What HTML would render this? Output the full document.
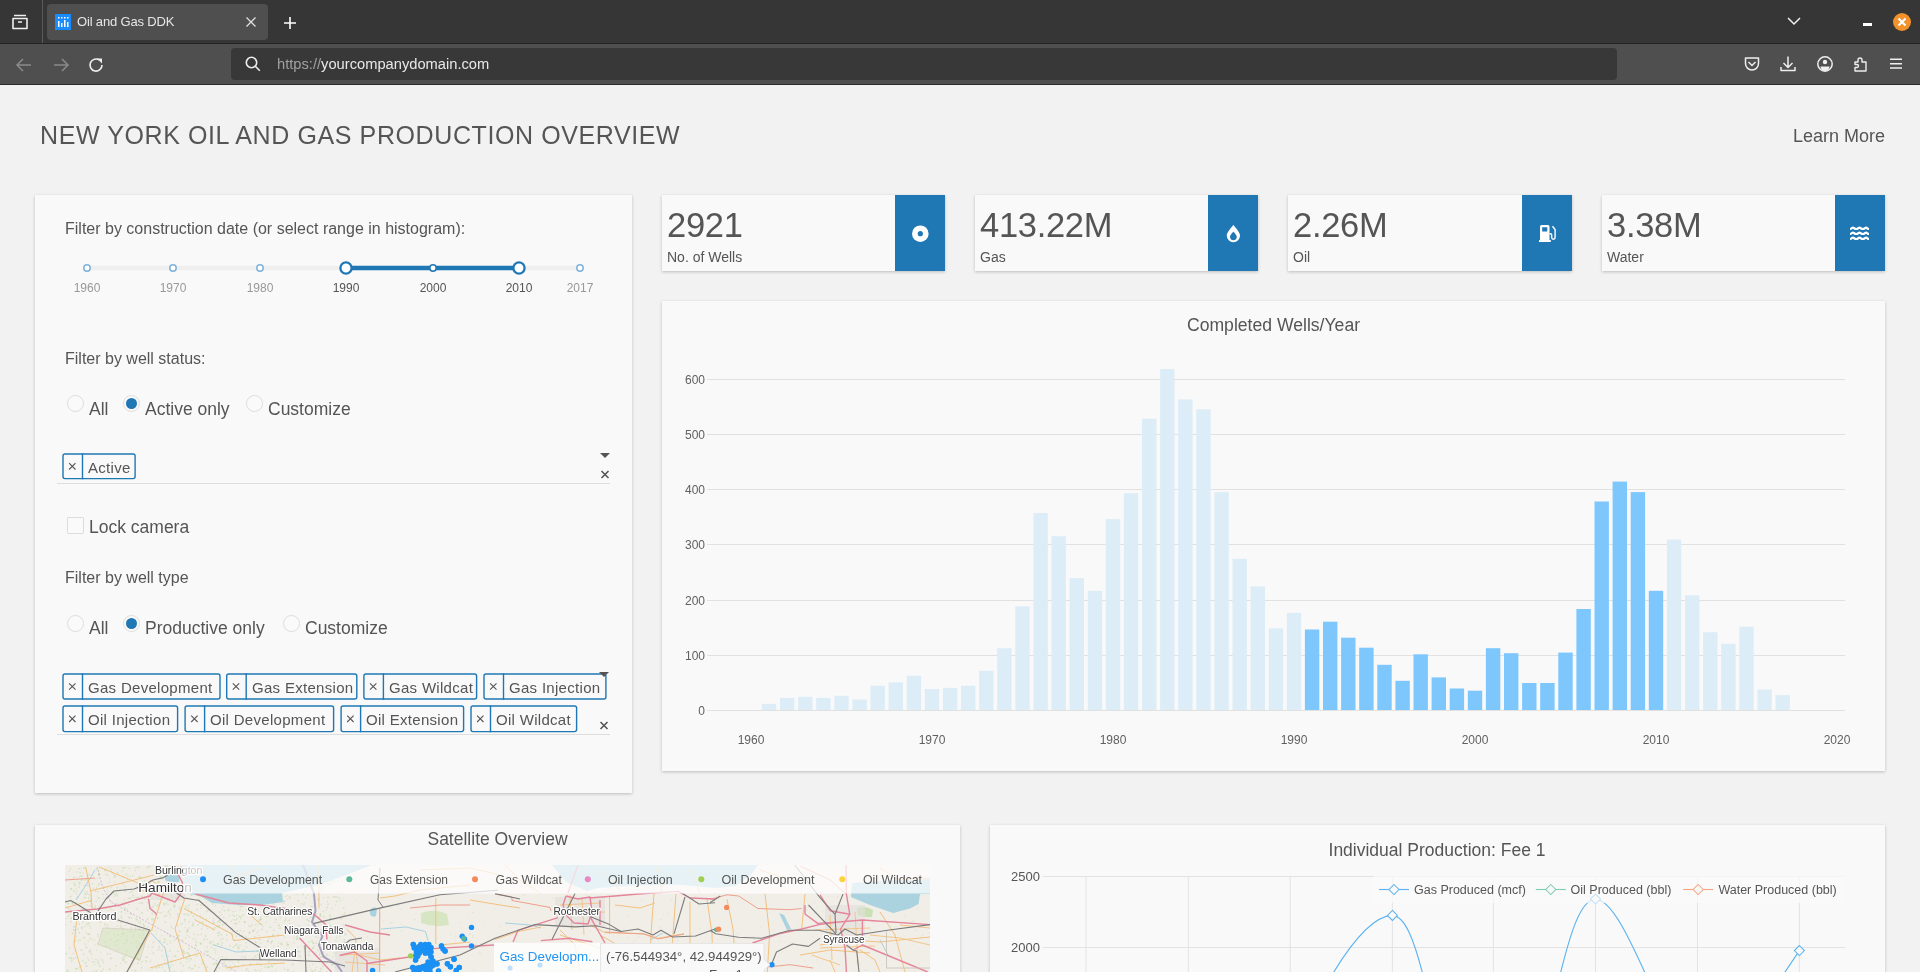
<!DOCTYPE html>
<html><head><meta charset="utf-8">
<style>
*{box-sizing:border-box;margin:0;padding:0}
html,body{width:1920px;height:972px;overflow:hidden;background:#f2f2f2;font-family:"Liberation Sans",sans-serif;color:#555}
.abs{position:absolute}
#tabbar{position:absolute;left:0;top:0;width:1920px;height:43px;background:#363636}
#navbar{position:absolute;left:0;top:44px;width:1920px;height:40px;background:#4f4f4f}
#navline{position:absolute;left:0;top:84px;width:1920px;height:1px;background:#2a2a2a}
.tab{position:absolute;left:47px;top:4px;width:221px;height:36px;background:#4f4f4f;border-radius:4px}
.tabtitle{position:absolute;left:77px;top:14px;font-size:13px;letter-spacing:-0.17px;color:#e6e6e6;white-space:nowrap}
.url{position:absolute;left:231px;top:48px;width:1386px;height:32px;background:#383838;border-radius:4px}
.urltext{position:absolute;left:277px;top:56px;font-size:14.7px;color:#e8e8e8;white-space:nowrap}
.urltext span{color:#a0a0a0}
.card{position:absolute;background:#f9f9f9;box-shadow:0 1px 3px rgba(0,0,0,0.22)}
.title{position:absolute;left:40px;top:121px;font-size:25px;letter-spacing:0.6px;color:#555;white-space:nowrap}
.learn{position:absolute;left:1793px;top:126px;font-size:18px;color:#555;white-space:nowrap}
.lbl{position:absolute;font-size:16px;color:#555;white-space:nowrap}
.big{position:absolute;font-size:17.5px;color:#555;white-space:nowrap}
.kpi-num{position:absolute;font-size:34.5px;letter-spacing:-0.3px;color:#555;white-space:nowrap}
.kpi-lbl{position:absolute;font-size:14px;color:#555;white-space:nowrap}
.kpi-icon{position:absolute;background:#1f77b4}
.ax{font-family:"Liberation Sans",sans-serif;font-size:12px;fill:#606060}
.tag{position:absolute;height:27px;border:1px solid #1f77b4;border-radius:2px;font-size:16px;color:#555;white-space:nowrap;display:flex}
.tag .x{width:22px;border-right:1px solid #1f77b4;text-align:center;font-size:13px;line-height:25px;color:#555}
.tag .t{padding:0 0 0 6px;line-height:26px}
.tagt{position:absolute;font-size:15px;letter-spacing:0.3px;color:#555;white-space:nowrap;line-height:18px}
.radio{position:absolute;width:17px;height:17px;border-radius:50%;border:1px solid #ddd;background:#fafafa}
.radio.on::after{content:"";position:absolute;left:2px;top:2px;width:11px;height:11px;border-radius:50%;background:#1f77b4}
.abs,.lbl,.big,.title,.learn,.kpi-num,.kpi-lbl,.tagt,.tabtitle,.urltext,svg{will-change:transform}
</style></head><body>
<!-- browser chrome -->
<div id="tabbar"></div>
<div id="navbar"></div>
<div id="navline"></div>
<div class="abs" style="left:0;top:43px;width:1920px;height:1px;background:#232323"></div>
<div class="abs" style="left:42px;top:0;width:1px;height:43px;background:#5a5a5a"></div>
<svg class="abs" style="left:10px;top:12px" width="20" height="20" viewBox="0 0 20 20"><path d="M4 3.5h12M3 6.5h14v10H3z M8 10h4" fill="none" stroke="#f0f0f0" stroke-width="1.6" stroke-linejoin="round"/></svg>
<div class="tab"></div>
<div class="abs" style="left:55px;top:14px;width:16px;height:16px;background:#1a8cff"></div>
<svg class="abs" style="left:55px;top:14px" width="16" height="16"><g fill="#fff"><rect x="3" y="3" width="1.5" height="1.5"/><rect x="6" y="3" width="1.5" height="1.5"/><rect x="9" y="3" width="1.5" height="1.5"/><rect x="12" y="3" width="1.5" height="1.5"/><rect x="3" y="7" width="1.5" height="6"/><rect x="6" y="9" width="1.5" height="4"/><rect x="9" y="6" width="1.5" height="7"/><rect x="12" y="8" width="1.5" height="5"/></g></svg>
<div class="tabtitle">Oil and Gas DDK</div>
<svg class="abs" style="left:245px;top:16px" width="12" height="12"><path d="M1.5 1.5l9 9M10.5 1.5l-9 9" stroke="#e0e0e0" stroke-width="1.3"/></svg>
<svg class="abs" style="left:282.5px;top:15.5px" width="14" height="14"><path d="M7 1v12M1 7h12" stroke="#fff" stroke-width="1.6"/></svg>
<svg class="abs" style="left:1786px;top:15px" width="16" height="12"><path d="M2 3l6 6 6-6" fill="none" stroke="#f0f0f0" stroke-width="1.5"/></svg>
<div class="abs" style="left:1863px;top:23px;width:9px;height:3px;background:#fff"></div>
<div class="abs" style="left:1893px;top:13px;width:18px;height:18px;border-radius:50%;background:#f3912b"></div>
<svg class="abs" style="left:1893px;top:13px" width="18" height="18"><path d="M5.5 5.5l7 7M12.5 5.5l-7 7" stroke="#fff" stroke-width="2.2"/></svg>
<!-- nav -->
<svg class="abs" style="left:15px;top:57px" width="18" height="16"><path d="M16 8H2M8 2L2 8l6 6" fill="none" stroke="#8a8a8a" stroke-width="1.5"/></svg>
<svg class="abs" style="left:51.5px;top:57px" width="18" height="16"><path d="M2 8h14M10 2l6 6-6 6" fill="none" stroke="#8a8a8a" stroke-width="1.5"/></svg>
<svg class="abs" style="left:87px;top:56px" width="18" height="18"><path d="M15 9A6 6 0 1 1 12.5 4.2" fill="none" stroke="#eee" stroke-width="1.6"/><path d="M10 2.5h5v5z" fill="#eee"/></svg>
<div class="url"></div>
<svg class="abs" style="left:244px;top:55px" width="18" height="18"><circle cx="7.5" cy="7.5" r="5.2" fill="none" stroke="#eee" stroke-width="1.6"/><path d="M11.3 11.3l4.5 4.5" stroke="#eee" stroke-width="1.6"/></svg>
<div class="urltext"><span>https://</span>yourcompanydomain.com</div>
<svg class="abs" style="left:1743px;top:55px" width="18" height="18"><path d="M2.5 3h13v5.5a6.5 6.5 0 0 1-13 0z" fill="none" stroke="#eee" stroke-width="1.5" stroke-linejoin="round"/><path d="M5.5 7l3.5 3.5L12.5 7" fill="none" stroke="#eee" stroke-width="1.5"/></svg>
<svg class="abs" style="left:1779px;top:55px" width="18" height="18"><path d="M9 1.5v11M4.5 8l4.5 4.5L13.5 8M2 12v3.5h14V12" fill="none" stroke="#eee" stroke-width="1.5" stroke-linejoin="round"/></svg>
<svg class="abs" style="left:1815.5px;top:55px" width="18" height="18"><circle cx="9" cy="9" r="7.2" fill="none" stroke="#eee" stroke-width="1.5"/><circle cx="9" cy="7" r="2.2" fill="#eee"/><path d="M4.5 11.5h9a4.5 4.5 0 0 1-9 0z" fill="#eee"/></svg>
<svg class="abs" style="left:1852px;top:55px" width="18" height="18"><path d="M3 7h3V5a2 2 0 0 1 4 0v2h4v9H3v-3.5h2a1.5 1.5 0 0 0 0-3H3z" fill="none" stroke="#eee" stroke-width="1.4" stroke-linejoin="round"/></svg>
<svg class="abs" style="left:1888px;top:55px" width="18" height="18"><path d="M2 4.2h12M2 8.8h12M2 13h12" stroke="#eee" stroke-width="1.4"/></svg>

<!-- page -->
<div class="title">NEW YORK OIL AND GAS PRODUCTION OVERVIEW</div>
<div class="learn">Learn More</div>

<!-- left panel -->
<div class="card" style="left:35px;top:195px;width:597px;height:598px"></div>
<div class="lbl" style="left:65px;top:220px">Filter by construction date (or select range in histogram):</div>
<svg class="abs" style="left:0;top:250px" width="640" height="50">
<line x1="87" x2="580" y1="18" y2="18" stroke="#efefef" stroke-width="4.4"/>
<line x1="346" x2="519" y1="18" y2="18" stroke="#1f77b4" stroke-width="4.4"/>
<circle cx="87" cy="18" r="3.2" fill="#fff" stroke="#7fb2da" stroke-width="1.5"/>
<text x="87" y="41.5" text-anchor="middle" font-family="Liberation Sans" font-size="12" fill="#999">1960</text>
<circle cx="173" cy="18" r="3.2" fill="#fff" stroke="#7fb2da" stroke-width="1.5"/>
<text x="173" y="41.5" text-anchor="middle" font-family="Liberation Sans" font-size="12" fill="#999">1970</text>
<circle cx="260" cy="18" r="3.2" fill="#fff" stroke="#7fb2da" stroke-width="1.5"/>
<text x="260" y="41.5" text-anchor="middle" font-family="Liberation Sans" font-size="12" fill="#999">1980</text>
<circle cx="346" cy="18" r="5.6" fill="#fff" stroke="#1f77b4" stroke-width="2.3"/>
<text x="346" y="41.5" text-anchor="middle" font-family="Liberation Sans" font-size="12" fill="#555">1990</text>
<circle cx="433" cy="18" r="3.2" fill="#fff" stroke="#1f77b4" stroke-width="1.5"/>
<text x="433" y="41.5" text-anchor="middle" font-family="Liberation Sans" font-size="12" fill="#555">2000</text>
<circle cx="519" cy="18" r="5.6" fill="#fff" stroke="#1f77b4" stroke-width="2.3"/>
<text x="519" y="41.5" text-anchor="middle" font-family="Liberation Sans" font-size="12" fill="#555">2010</text>
<circle cx="580" cy="18" r="3.2" fill="#fff" stroke="#7fb2da" stroke-width="1.5"/>
<text x="580" y="41.5" text-anchor="middle" font-family="Liberation Sans" font-size="12" fill="#999">2017</text>
</svg>
<div class="lbl" style="left:65px;top:349.5px">Filter by well status:</div>
<div class="radio" style="left:67px;top:395px"></div><div class="big" style="left:89px;top:398.8px">All</div>
<div class="radio on" style="left:123px;top:395px"></div><div class="big" style="left:145px;top:398.8px">Active only</div>
<div class="radio" style="left:246px;top:395px"></div><div class="big" style="left:268px;top:398.8px">Customize</div>
<div class="abs" style="left:57px;top:483px;width:553px;height:1px;background:#ddd"></div>
<svg class="abs" style="left:599px;top:450px" width="12" height="30"><path d="M1 3h10l-5 5z" fill="#555"/><path d="M2.5 21l7 7M9.5 21l-7 7" stroke="#555" stroke-width="1.6"/></svg>
<div class="abs" style="left:67px;top:517px;width:17px;height:17px;border:1px solid #ddd;background:#fafafa;border-radius:1px"></div>
<div class="big" style="left:89px;top:516.8px">Lock camera</div>
<div class="lbl" style="left:65px;top:569px">Filter by well type</div>
<div class="radio" style="left:67px;top:615px"></div><div class="big" style="left:89px;top:617.8px">All</div>
<div class="radio on" style="left:123px;top:615px"></div><div class="big" style="left:145px;top:617.8px">Productive only</div>
<div class="radio" style="left:283px;top:615px"></div><div class="big" style="left:305px;top:617.8px">Customize</div>
<svg class="abs" style="left:0;top:440px" width="640" height="300"><g fill="none" stroke="#1f77b4" stroke-width="1.4">
<rect x="63.0" y="14.0" width="72.1" height="24.6" rx="2"/>
<line x1="82.5" x2="82.5" y1="13.3" y2="39.3"/>
<path d="M69.1 23.1l6.4 6.4M75.5 23.1l-6.4 6.4" stroke="#555" stroke-width="1.1"/>
<rect x="63.0" y="234.0" width="157.0" height="25.0" rx="2"/>
<line x1="82.5" x2="82.5" y1="233.3" y2="259.7"/>
<path d="M69.1 243.3l6.4 6.4M75.5 243.3l-6.4 6.4" stroke="#555" stroke-width="1.1"/>
<rect x="226.7" y="234.0" width="130.1" height="25.0" rx="2"/>
<line x1="246.2" x2="246.2" y1="233.3" y2="259.7"/>
<path d="M232.8 243.3l6.4 6.4M239.2 243.3l-6.4 6.4" stroke="#555" stroke-width="1.1"/>
<rect x="363.9" y="234.0" width="112.7" height="25.0" rx="2"/>
<line x1="383.4" x2="383.4" y1="233.3" y2="259.7"/>
<path d="M370.0 243.3l6.4 6.4M376.4 243.3l-6.4 6.4" stroke="#555" stroke-width="1.1"/>
<rect x="484.0" y="234.0" width="121.9" height="25.0" rx="2"/>
<line x1="503.5" x2="503.5" y1="233.3" y2="259.7"/>
<path d="M490.1 243.3l6.4 6.4M496.5 243.3l-6.4 6.4" stroke="#555" stroke-width="1.1"/>
<rect x="63.0" y="266.0" width="114.6" height="25.6" rx="2"/>
<line x1="82.5" x2="82.5" y1="265.3" y2="292.3"/>
<path d="M69.1 275.6l6.4 6.4M75.5 275.6l-6.4 6.4" stroke="#555" stroke-width="1.1"/>
<rect x="185.1" y="266.0" width="148.5" height="25.6" rx="2"/>
<line x1="204.6" x2="204.6" y1="265.3" y2="292.3"/>
<path d="M191.2 275.6l6.4 6.4M197.6 275.6l-6.4 6.4" stroke="#555" stroke-width="1.1"/>
<rect x="341.1" y="266.0" width="122.5" height="25.6" rx="2"/>
<line x1="360.6" x2="360.6" y1="265.3" y2="292.3"/>
<path d="M347.2 275.6l6.4 6.4M353.6 275.6l-6.4 6.4" stroke="#555" stroke-width="1.1"/>
<rect x="471.0" y="266.0" width="105.6" height="25.6" rx="2"/>
<line x1="490.5" x2="490.5" y1="265.3" y2="292.3"/>
<path d="M477.1 275.6l6.4 6.4M483.5 275.6l-6.4 6.4" stroke="#555" stroke-width="1.1"/>
</g></svg>
<div class="tagt" style="left:88.3px;top:458.8px">Active</div>
<div class="tagt" style="left:88.3px;top:678.8px">Gas Development</div>
<div class="tagt" style="left:252.0px;top:678.8px">Gas Extension</div>
<div class="tagt" style="left:389.2px;top:678.8px">Gas Wildcat</div>
<div class="tagt" style="left:509.3px;top:678.8px">Gas Injection</div>
<div class="tagt" style="left:88.3px;top:710.8px">Oil Injection</div>
<div class="tagt" style="left:210.4px;top:710.8px">Oil Development</div>
<div class="tagt" style="left:366.4px;top:710.8px">Oil Extension</div>
<div class="tagt" style="left:496.3px;top:710.8px">Oil Wildcat</div>
<div class="abs" style="left:57px;top:734px;width:553px;height:1px;background:#ddd"></div>
<svg class="abs" style="left:598px;top:672px" width="12" height="62"><path d="M1 0h10l-5 5z" fill="#555"/><path d="M2.5 50l7 7M9.5 50l-7 7" stroke="#555" stroke-width="1.6"/></svg>

<!-- KPI cards -->
<div class="card" style="left:662px;top:195px;width:283px;height:76px"></div>
<div class="kpi-num" style="left:667.00px;top:206px">2921</div>
<div class="kpi-lbl" style="left:667.00px;top:249px">No. of Wells</div>
<svg class="abs" style="left:895.00px;top:195px" width="50" height="76"><rect width="50" height="76" fill="#1f77b4"/><circle cx="25.3" cy="38.7" r="8.3" fill="#fff"/><circle cx="25.3" cy="38.7" r="2.6" fill="#1f77b4"/></svg>
<div class="card" style="left:975px;top:195px;width:283px;height:76px"></div>
<div class="kpi-num" style="left:980.00px;top:206px">413.22M</div>
<div class="kpi-lbl" style="left:980.00px;top:249px">Gas</div>
<svg class="abs" style="left:1208.00px;top:195px" width="50" height="76"><rect width="50" height="76" fill="#1f77b4"/><path fill-rule="evenodd" d="M25.4 30C25.4 30 18.75 37 18.75 40.55A6.65 6.65 0 0 0 32.05 40.55C32.05 37 25.4 30 25.4 30zM25.4 36.8C25.4 36.8 22.05 40 22.05 41.85A3.35 3.35 0 0 0 28.75 41.85C28.75 40 25.4 36.8 25.4 36.8z" fill="#fff"/></svg>
<div class="card" style="left:1288px;top:195px;width:284px;height:76px"></div>
<div class="kpi-num" style="left:1293.00px;top:206px">2.26M</div>
<div class="kpi-lbl" style="left:1293.00px;top:249px">Oil</div>
<svg class="abs" style="left:1522.00px;top:195px" width="50" height="76"><rect width="50" height="76" fill="#1f77b4"/><path fill-rule="evenodd" d="M18 31.5a1.5 1.5 0 0 1 1.5-1.5h6.5a1.5 1.5 0 0 1 1.5 1.5V45H18zM20.2 32.2h5.1v4.4h-5.1z" fill="#fff"/><rect x="17" y="45" width="11.8" height="2" fill="#fff"/><path d="M27.5 38.8h1a1.2 1.2 0 0 1 1.2 1.2v2.6a1.7 1.7 0 0 0 3.4 0V34.5l-2.6-3.3" fill="none" stroke="#fff" stroke-width="1.4"/></svg>
<div class="card" style="left:1602px;top:195px;width:283px;height:76px"></div>
<div class="kpi-num" style="left:1607.00px;top:206px">3.38M</div>
<div class="kpi-lbl" style="left:1607.00px;top:249px">Water</div>
<svg class="abs" style="left:1835.00px;top:195px" width="50" height="76"><rect width="50" height="76" fill="#1f77b4"/><g fill="none" stroke="#fff" stroke-width="2.2"><path id="wv" d="M15 34C16.5 34 17 32.7 17.9 32.7C19 32.7 19.5 34 21.2 34C22.9 34 23.4 32.7 24.5 32.7C25.6 32.7 26.1 34 27.8 34C29.5 34 30 32.7 31.1 32.7C32.2 32.7 32.5 34 34 34"/><use href="#wv" y="5"/><use href="#wv" y="10"/></g></svg>

<!-- chart -->
<div class="card" style="left:662px;top:301px;width:1223px;height:470px"></div>
<div class="abs" style="left:662px;top:315px;width:1223px;text-align:center;font-size:17.6px;color:#555">Completed Wells/Year</div>
<svg class="abs" style="left:662px;top:301px" width="1223" height="470">
<line x1="45" x2="1183" y1="409.5" y2="409.5" stroke="#e1e1e1" stroke-width="1"/>
<text x="43" y="413.8" text-anchor="end" class="ax">0</text>
<line x1="45" x2="1183" y1="354.5" y2="354.5" stroke="#e1e1e1" stroke-width="1"/>
<text x="43" y="358.8" text-anchor="end" class="ax">100</text>
<line x1="45" x2="1183" y1="299.5" y2="299.5" stroke="#e1e1e1" stroke-width="1"/>
<text x="43" y="303.8" text-anchor="end" class="ax">200</text>
<line x1="45" x2="1183" y1="243.5" y2="243.5" stroke="#e1e1e1" stroke-width="1"/>
<text x="43" y="247.8" text-anchor="end" class="ax">300</text>
<line x1="45" x2="1183" y1="188.5" y2="188.5" stroke="#e1e1e1" stroke-width="1"/>
<text x="43" y="192.8" text-anchor="end" class="ax">400</text>
<line x1="45" x2="1183" y1="133.5" y2="133.5" stroke="#e1e1e1" stroke-width="1"/>
<text x="43" y="137.8" text-anchor="end" class="ax">500</text>
<line x1="45" x2="1183" y1="78.5" y2="78.5" stroke="#e1e1e1" stroke-width="1"/>
<text x="43" y="82.8" text-anchor="end" class="ax">600</text>
<text x="89.0" y="442.6" text-anchor="middle" class="ax">1960</text>
<text x="270.0" y="442.6" text-anchor="middle" class="ax">1970</text>
<text x="451.0" y="442.6" text-anchor="middle" class="ax">1980</text>
<text x="632.0" y="442.6" text-anchor="middle" class="ax">1990</text>
<text x="813.0" y="442.6" text-anchor="middle" class="ax">2000</text>
<text x="994.0" y="442.6" text-anchor="middle" class="ax">2010</text>
<text x="1175.0" y="442.6" text-anchor="middle" class="ax">2020</text>
<rect x="99.9" y="402.9" width="14.4" height="6.1" fill="#ddedf8"/>
<rect x="118.0" y="396.9" width="14.4" height="12.1" fill="#ddedf8"/>
<rect x="136.1" y="395.8" width="14.4" height="13.2" fill="#ddedf8"/>
<rect x="154.2" y="396.9" width="14.4" height="12.1" fill="#ddedf8"/>
<rect x="172.3" y="394.7" width="14.4" height="14.3" fill="#ddedf8"/>
<rect x="190.4" y="398.5" width="14.4" height="10.5" fill="#ddedf8"/>
<rect x="208.5" y="384.7" width="14.4" height="24.3" fill="#ddedf8"/>
<rect x="226.6" y="381.4" width="14.4" height="27.6" fill="#ddedf8"/>
<rect x="244.7" y="374.8" width="14.4" height="34.2" fill="#ddedf8"/>
<rect x="262.8" y="388.0" width="14.4" height="21.0" fill="#ddedf8"/>
<rect x="280.9" y="386.9" width="14.4" height="22.1" fill="#ddedf8"/>
<rect x="299.0" y="384.7" width="14.4" height="24.3" fill="#ddedf8"/>
<rect x="317.1" y="369.8" width="14.4" height="39.2" fill="#ddedf8"/>
<rect x="335.2" y="347.2" width="14.4" height="61.8" fill="#ddedf8"/>
<rect x="353.3" y="305.3" width="14.4" height="103.7" fill="#ddedf8"/>
<rect x="371.4" y="212.0" width="14.4" height="197.0" fill="#ddedf8"/>
<rect x="389.5" y="235.2" width="14.4" height="173.8" fill="#ddedf8"/>
<rect x="407.6" y="277.1" width="14.4" height="131.9" fill="#ddedf8"/>
<rect x="425.7" y="289.8" width="14.4" height="119.2" fill="#ddedf8"/>
<rect x="443.8" y="218.1" width="14.4" height="190.9" fill="#ddedf8"/>
<rect x="461.9" y="192.2" width="14.4" height="216.8" fill="#ddedf8"/>
<rect x="480.0" y="117.7" width="14.4" height="291.3" fill="#ddedf8"/>
<rect x="498.1" y="68.0" width="14.4" height="341.0" fill="#ddedf8"/>
<rect x="516.2" y="98.4" width="14.4" height="310.6" fill="#ddedf8"/>
<rect x="534.3" y="108.3" width="14.4" height="300.7" fill="#ddedf8"/>
<rect x="552.4" y="191.1" width="14.4" height="217.9" fill="#ddedf8"/>
<rect x="570.5" y="257.8" width="14.4" height="151.2" fill="#ddedf8"/>
<rect x="588.6" y="285.4" width="14.4" height="123.6" fill="#ddedf8"/>
<rect x="606.7" y="327.3" width="14.4" height="81.7" fill="#ddedf8"/>
<rect x="624.8" y="311.9" width="14.4" height="97.1" fill="#ddedf8"/>
<rect x="642.9" y="328.5" width="14.4" height="80.5" fill="#7dc7fd"/>
<rect x="661.0" y="320.7" width="14.4" height="88.3" fill="#7dc7fd"/>
<rect x="679.1" y="336.7" width="14.4" height="72.3" fill="#7dc7fd"/>
<rect x="697.2" y="346.7" width="14.4" height="62.3" fill="#7dc7fd"/>
<rect x="715.3" y="363.8" width="14.4" height="45.2" fill="#7dc7fd"/>
<rect x="733.4" y="379.8" width="14.4" height="29.2" fill="#7dc7fd"/>
<rect x="751.5" y="353.3" width="14.4" height="55.7" fill="#7dc7fd"/>
<rect x="769.6" y="376.4" width="14.4" height="32.6" fill="#7dc7fd"/>
<rect x="787.7" y="387.5" width="14.4" height="21.5" fill="#7dc7fd"/>
<rect x="805.8" y="389.7" width="14.4" height="19.3" fill="#7dc7fd"/>
<rect x="823.9" y="347.2" width="14.4" height="61.8" fill="#7dc7fd"/>
<rect x="842.0" y="352.2" width="14.4" height="56.8" fill="#7dc7fd"/>
<rect x="860.1" y="382.0" width="14.4" height="27.0" fill="#7dc7fd"/>
<rect x="878.2" y="382.0" width="14.4" height="27.0" fill="#7dc7fd"/>
<rect x="896.3" y="351.6" width="14.4" height="57.4" fill="#7dc7fd"/>
<rect x="914.4" y="308.0" width="14.4" height="101.0" fill="#7dc7fd"/>
<rect x="932.5" y="200.5" width="14.4" height="208.5" fill="#7dc7fd"/>
<rect x="950.6" y="180.6" width="14.4" height="228.4" fill="#7dc7fd"/>
<rect x="968.7" y="191.1" width="14.4" height="217.9" fill="#7dc7fd"/>
<rect x="986.8" y="289.8" width="14.4" height="119.2" fill="#7dc7fd"/>
<rect x="1004.9" y="238.5" width="14.4" height="170.5" fill="#ddedf8"/>
<rect x="1023.0" y="294.2" width="14.4" height="114.8" fill="#ddedf8"/>
<rect x="1041.1" y="331.2" width="14.4" height="77.8" fill="#ddedf8"/>
<rect x="1059.2" y="342.8" width="14.4" height="66.2" fill="#ddedf8"/>
<rect x="1077.3" y="325.7" width="14.4" height="83.3" fill="#ddedf8"/>
<rect x="1095.4" y="388.6" width="14.4" height="20.4" fill="#ddedf8"/>
<rect x="1113.5" y="394.1" width="14.4" height="14.9" fill="#ddedf8"/>
</svg>

<!-- bottom left: satellite -->
<div class="card" style="left:35px;top:825px;width:925px;height:200px"></div>
<div class="abs" style="left:35px;top:829.3px;width:925px;text-align:center;font-size:17.5px;color:#555">Satellite Overview</div>
<svg class="abs" style="left:65px;top:865px" width="865" height="107" viewBox="65 865 865 107">
<rect x="65" y="865" width="865" height="107" fill="#f1eee8"/>
<rect x="191.7" y="924.9" width="1.7" height="1.3" fill="#b5d69b" opacity="0.5"/>
<rect x="207.2" y="927.9" width="1.0" height="1.3" fill="#b5d69b" opacity="0.5"/>
<rect x="241.4" y="949.8" width="0.9" height="1.1" fill="#b5d69b" opacity="0.5"/>
<rect x="90.4" y="951.6" width="1.5" height="0.8" fill="#b5d69b" opacity="0.5"/>
<rect x="340.0" y="968.2" width="1.5" height="1.4" fill="#b5d69b" opacity="0.5"/>
<rect x="109.1" y="866.6" width="1.3" height="0.9" fill="#b5d69b" opacity="0.5"/>
<rect x="118.3" y="890.9" width="0.8" height="1.3" fill="#b5d69b" opacity="0.5"/>
<rect x="188.3" y="955.1" width="1.3" height="1.4" fill="#b5d69b" opacity="0.5"/>
<rect x="204.9" y="935.9" width="1.3" height="1.1" fill="#b5d69b" opacity="0.5"/>
<rect x="344.3" y="971.5" width="1.6" height="1.5" fill="#b5d69b" opacity="0.5"/>
<rect x="153.3" y="889.6" width="1.1" height="0.9" fill="#b5d69b" opacity="0.5"/>
<rect x="279.6" y="907.8" width="1.6" height="1.2" fill="#b5d69b" opacity="0.5"/>
<rect x="333.3" y="955.7" width="0.8" height="1.0" fill="#b5d69b" opacity="0.5"/>
<rect x="319.9" y="915.3" width="1.8" height="1.2" fill="#b5d69b" opacity="0.5"/>
<rect x="85.5" y="932.4" width="1.6" height="1.1" fill="#b5d69b" opacity="0.5"/>
<rect x="89.4" y="900.6" width="1.8" height="1.6" fill="#b5d69b" opacity="0.5"/>
<rect x="98.0" y="891.4" width="0.9" height="0.9" fill="#b5d69b" opacity="0.5"/>
<rect x="288.2" y="884.0" width="1.4" height="1.2" fill="#b5d69b" opacity="0.5"/>
<rect x="118.4" y="943.3" width="0.9" height="1.4" fill="#b5d69b" opacity="0.5"/>
<rect x="97.6" y="910.0" width="1.0" height="1.1" fill="#b5d69b" opacity="0.5"/>
<rect x="336.9" y="951.0" width="1.1" height="1.7" fill="#b5d69b" opacity="0.5"/>
<rect x="124.0" y="907.2" width="1.7" height="1.4" fill="#b5d69b" opacity="0.5"/>
<rect x="93.1" y="970.9" width="1.0" height="1.1" fill="#b5d69b" opacity="0.5"/>
<rect x="281.4" y="900.2" width="1.1" height="0.9" fill="#b5d69b" opacity="0.5"/>
<rect x="90.2" y="927.4" width="1.0" height="1.4" fill="#b5d69b" opacity="0.5"/>
<rect x="169.1" y="913.5" width="1.8" height="1.3" fill="#b5d69b" opacity="0.5"/>
<rect x="225.9" y="957.7" width="1.0" height="1.0" fill="#b5d69b" opacity="0.5"/>
<rect x="319.4" y="952.5" width="1.0" height="1.0" fill="#b5d69b" opacity="0.5"/>
<rect x="272.0" y="965.6" width="1.0" height="1.8" fill="#b5d69b" opacity="0.5"/>
<rect x="312.0" y="929.6" width="1.2" height="0.9" fill="#b5d69b" opacity="0.5"/>
<rect x="75.8" y="968.0" width="1.0" height="1.5" fill="#b5d69b" opacity="0.5"/>
<rect x="137.0" y="953.1" width="1.4" height="1.1" fill="#b5d69b" opacity="0.5"/>
<rect x="114.1" y="942.1" width="0.9" height="1.0" fill="#b5d69b" opacity="0.5"/>
<rect x="221.6" y="956.2" width="1.4" height="1.1" fill="#b5d69b" opacity="0.5"/>
<rect x="321.9" y="886.8" width="0.8" height="1.1" fill="#b5d69b" opacity="0.5"/>
<rect x="189.8" y="871.5" width="1.0" height="1.2" fill="#b5d69b" opacity="0.5"/>
<rect x="225.2" y="879.1" width="1.2" height="1.7" fill="#b5d69b" opacity="0.5"/>
<rect x="339.5" y="935.3" width="1.5" height="1.4" fill="#b5d69b" opacity="0.5"/>
<rect x="104.3" y="868.8" width="0.8" height="1.7" fill="#b5d69b" opacity="0.5"/>
<rect x="261.3" y="968.0" width="0.8" height="1.4" fill="#b5d69b" opacity="0.5"/>
<rect x="200.0" y="943.2" width="1.1" height="1.8" fill="#b5d69b" opacity="0.5"/>
<rect x="86.1" y="923.4" width="1.5" height="1.7" fill="#b5d69b" opacity="0.5"/>
<rect x="271.4" y="940.3" width="1.6" height="1.7" fill="#b5d69b" opacity="0.5"/>
<rect x="163.5" y="938.3" width="1.7" height="1.7" fill="#b5d69b" opacity="0.5"/>
<rect x="181.8" y="949.6" width="1.7" height="1.4" fill="#b5d69b" opacity="0.5"/>
<rect x="240.0" y="905.9" width="1.4" height="1.4" fill="#b5d69b" opacity="0.5"/>
<rect x="87.5" y="933.4" width="1.8" height="1.7" fill="#b5d69b" opacity="0.5"/>
<rect x="268.9" y="906.6" width="1.5" height="1.4" fill="#b5d69b" opacity="0.5"/>
<rect x="188.3" y="954.7" width="0.9" height="1.6" fill="#b5d69b" opacity="0.5"/>
<rect x="73.3" y="929.3" width="1.3" height="1.0" fill="#b5d69b" opacity="0.5"/>
<rect x="260.5" y="918.2" width="1.4" height="1.7" fill="#b5d69b" opacity="0.5"/>
<rect x="136.6" y="866.2" width="1.1" height="1.5" fill="#b5d69b" opacity="0.5"/>
<rect x="121.7" y="883.1" width="1.7" height="1.5" fill="#b5d69b" opacity="0.5"/>
<rect x="188.7" y="960.4" width="1.1" height="1.5" fill="#b5d69b" opacity="0.5"/>
<rect x="120.6" y="911.1" width="1.6" height="1.7" fill="#b5d69b" opacity="0.5"/>
<rect x="311.5" y="906.1" width="1.4" height="1.1" fill="#b5d69b" opacity="0.5"/>
<rect x="103.1" y="918.1" width="1.6" height="1.6" fill="#b5d69b" opacity="0.5"/>
<rect x="264.1" y="966.7" width="1.1" height="1.0" fill="#b5d69b" opacity="0.5"/>
<rect x="191.2" y="894.4" width="1.0" height="1.2" fill="#b5d69b" opacity="0.5"/>
<rect x="240.2" y="917.8" width="1.1" height="1.6" fill="#b5d69b" opacity="0.5"/>
<rect x="340.0" y="913.4" width="0.9" height="0.8" fill="#b5d69b" opacity="0.5"/>
<rect x="309.4" y="869.4" width="1.5" height="1.4" fill="#b5d69b" opacity="0.5"/>
<rect x="151.5" y="949.7" width="0.8" height="0.9" fill="#b5d69b" opacity="0.5"/>
<rect x="192.4" y="867.6" width="1.6" height="1.0" fill="#b5d69b" opacity="0.5"/>
<rect x="104.4" y="870.0" width="1.4" height="1.2" fill="#b5d69b" opacity="0.5"/>
<rect x="241.4" y="935.1" width="1.6" height="1.8" fill="#b5d69b" opacity="0.5"/>
<rect x="256.7" y="886.3" width="1.3" height="1.0" fill="#b5d69b" opacity="0.5"/>
<rect x="68.0" y="915.5" width="1.5" height="1.0" fill="#b5d69b" opacity="0.5"/>
<rect x="141.3" y="902.0" width="1.5" height="1.3" fill="#b5d69b" opacity="0.5"/>
<rect x="237.0" y="945.9" width="1.2" height="1.6" fill="#b5d69b" opacity="0.5"/>
<rect x="318.7" y="874.3" width="1.7" height="1.5" fill="#b5d69b" opacity="0.5"/>
<rect x="101.4" y="913.5" width="1.4" height="1.7" fill="#b5d69b" opacity="0.5"/>
<rect x="170.5" y="925.9" width="1.7" height="1.6" fill="#b5d69b" opacity="0.5"/>
<rect x="329.4" y="914.6" width="1.5" height="1.0" fill="#b5d69b" opacity="0.5"/>
<rect x="267.1" y="952.6" width="1.4" height="1.5" fill="#b5d69b" opacity="0.5"/>
<rect x="124.7" y="961.3" width="1.8" height="1.8" fill="#b5d69b" opacity="0.5"/>
<rect x="215.3" y="949.6" width="1.1" height="1.7" fill="#b5d69b" opacity="0.5"/>
<rect x="304.6" y="902.3" width="0.9" height="1.2" fill="#b5d69b" opacity="0.5"/>
<rect x="219.1" y="947.2" width="1.3" height="0.8" fill="#b5d69b" opacity="0.5"/>
<rect x="291.6" y="871.9" width="1.6" height="1.0" fill="#b5d69b" opacity="0.5"/>
<rect x="158.8" y="949.3" width="0.9" height="0.9" fill="#b5d69b" opacity="0.5"/>
<rect x="209.6" y="942.4" width="1.6" height="1.5" fill="#b5d69b" opacity="0.5"/>
<rect x="329.8" y="917.7" width="1.7" height="0.9" fill="#b5d69b" opacity="0.5"/>
<rect x="127.0" y="921.4" width="1.1" height="1.5" fill="#b5d69b" opacity="0.5"/>
<rect x="243.9" y="920.9" width="1.6" height="1.4" fill="#b5d69b" opacity="0.5"/>
<rect x="152.3" y="905.8" width="1.6" height="1.7" fill="#b5d69b" opacity="0.5"/>
<rect x="123.3" y="956.0" width="1.8" height="1.3" fill="#b5d69b" opacity="0.5"/>
<rect x="225.4" y="886.5" width="1.3" height="1.3" fill="#b5d69b" opacity="0.5"/>
<rect x="234.5" y="868.0" width="1.8" height="1.3" fill="#b5d69b" opacity="0.5"/>
<rect x="177.2" y="950.7" width="1.4" height="1.3" fill="#b5d69b" opacity="0.5"/>
<rect x="258.5" y="872.1" width="1.3" height="1.2" fill="#b5d69b" opacity="0.5"/>
<rect x="332.9" y="963.8" width="1.1" height="1.3" fill="#b5d69b" opacity="0.5"/>
<rect x="100.6" y="911.4" width="1.6" height="1.7" fill="#b5d69b" opacity="0.5"/>
<rect x="198.4" y="898.9" width="1.0" height="1.4" fill="#b5d69b" opacity="0.5"/>
<rect x="324.1" y="878.9" width="1.6" height="0.8" fill="#b5d69b" opacity="0.5"/>
<rect x="119.3" y="889.3" width="1.5" height="1.1" fill="#b5d69b" opacity="0.5"/>
<rect x="164.5" y="931.3" width="0.9" height="1.5" fill="#b5d69b" opacity="0.5"/>
<rect x="99.4" y="919.6" width="1.1" height="1.0" fill="#b5d69b" opacity="0.5"/>
<rect x="213.5" y="911.7" width="1.2" height="1.2" fill="#b5d69b" opacity="0.5"/>
<rect x="213.2" y="882.1" width="1.0" height="1.4" fill="#b5d69b" opacity="0.5"/>
<rect x="243.8" y="921.7" width="1.7" height="1.4" fill="#b5d69b" opacity="0.5"/>
<rect x="304.9" y="889.9" width="1.5" height="1.6" fill="#b5d69b" opacity="0.5"/>
<rect x="317.7" y="898.8" width="1.1" height="1.7" fill="#b5d69b" opacity="0.5"/>
<rect x="126.1" y="971.8" width="1.7" height="0.9" fill="#b5d69b" opacity="0.5"/>
<rect x="132.0" y="942.7" width="1.1" height="0.9" fill="#b5d69b" opacity="0.5"/>
<rect x="298.0" y="910.1" width="1.6" height="0.9" fill="#b5d69b" opacity="0.5"/>
<rect x="177.8" y="938.3" width="0.8" height="1.0" fill="#b5d69b" opacity="0.5"/>
<rect x="256.1" y="962.5" width="1.8" height="0.9" fill="#b5d69b" opacity="0.5"/>
<rect x="206.6" y="946.1" width="1.3" height="1.5" fill="#b5d69b" opacity="0.5"/>
<rect x="117.9" y="872.5" width="0.9" height="0.8" fill="#b5d69b" opacity="0.5"/>
<rect x="219.5" y="920.1" width="1.4" height="0.9" fill="#b5d69b" opacity="0.5"/>
<rect x="116.7" y="886.8" width="1.6" height="1.8" fill="#b5d69b" opacity="0.5"/>
<rect x="324.5" y="875.2" width="0.9" height="1.8" fill="#b5d69b" opacity="0.5"/>
<rect x="194.4" y="946.8" width="1.1" height="1.3" fill="#b5d69b" opacity="0.5"/>
<rect x="209.3" y="911.0" width="1.4" height="0.8" fill="#b5d69b" opacity="0.5"/>
<rect x="261.3" y="955.3" width="1.0" height="1.3" fill="#b5d69b" opacity="0.5"/>
<rect x="272.0" y="908.4" width="1.0" height="1.0" fill="#b5d69b" opacity="0.5"/>
<rect x="208.5" y="866.6" width="1.7" height="1.6" fill="#b5d69b" opacity="0.5"/>
<rect x="262.3" y="957.1" width="1.4" height="1.2" fill="#b5d69b" opacity="0.5"/>
<rect x="232.9" y="919.0" width="1.8" height="1.6" fill="#b5d69b" opacity="0.5"/>
<rect x="137.3" y="962.5" width="1.5" height="1.6" fill="#b5d69b" opacity="0.5"/>
<rect x="293.1" y="908.4" width="1.7" height="1.7" fill="#b5d69b" opacity="0.5"/>
<rect x="259.5" y="947.1" width="1.6" height="1.2" fill="#b5d69b" opacity="0.5"/>
<rect x="267.3" y="872.5" width="1.1" height="1.3" fill="#b5d69b" opacity="0.5"/>
<rect x="68.0" y="903.1" width="1.4" height="1.4" fill="#b5d69b" opacity="0.5"/>
<rect x="130.0" y="966.1" width="1.5" height="1.1" fill="#b5d69b" opacity="0.5"/>
<rect x="249.7" y="925.9" width="1.3" height="1.2" fill="#b5d69b" opacity="0.5"/>
<rect x="345.0" y="933.7" width="1.5" height="1.6" fill="#b5d69b" opacity="0.5"/>
<rect x="339.4" y="867.4" width="1.4" height="1.5" fill="#b5d69b" opacity="0.5"/>
<rect x="136.9" y="908.0" width="0.9" height="1.0" fill="#b5d69b" opacity="0.5"/>
<rect x="170.2" y="875.5" width="1.1" height="1.7" fill="#b5d69b" opacity="0.5"/>
<rect x="219.0" y="919.3" width="1.8" height="1.4" fill="#b5d69b" opacity="0.5"/>
<rect x="343.6" y="933.3" width="1.6" height="0.9" fill="#b5d69b" opacity="0.5"/>
<rect x="232.3" y="946.2" width="0.8" height="1.7" fill="#b5d69b" opacity="0.5"/>
<rect x="109.8" y="915.5" width="1.0" height="1.3" fill="#b5d69b" opacity="0.5"/>
<rect x="236.1" y="871.3" width="1.7" height="1.2" fill="#b5d69b" opacity="0.5"/>
<rect x="212.5" y="929.0" width="1.2" height="1.1" fill="#b5d69b" opacity="0.5"/>
<rect x="248.4" y="925.0" width="1.1" height="1.5" fill="#b5d69b" opacity="0.5"/>
<rect x="147.9" y="866.5" width="1.0" height="0.8" fill="#b5d69b" opacity="0.5"/>
<rect x="108.8" y="945.7" width="1.2" height="1.7" fill="#b5d69b" opacity="0.5"/>
<rect x="274.5" y="870.4" width="1.8" height="1.7" fill="#b5d69b" opacity="0.5"/>
<rect x="85.6" y="961.9" width="1.2" height="1.3" fill="#b5d69b" opacity="0.5"/>
<rect x="337.5" y="891.1" width="1.3" height="1.7" fill="#b5d69b" opacity="0.5"/>
<rect x="267.4" y="915.1" width="1.8" height="1.6" fill="#b5d69b" opacity="0.5"/>
<rect x="234.0" y="877.3" width="1.4" height="1.3" fill="#b5d69b" opacity="0.5"/>
<rect x="122.0" y="870.6" width="1.3" height="0.9" fill="#b5d69b" opacity="0.5"/>
<rect x="189.0" y="936.5" width="1.3" height="1.1" fill="#b5d69b" opacity="0.5"/>
<rect x="228.0" y="909.9" width="1.6" height="1.3" fill="#b5d69b" opacity="0.5"/>
<rect x="344.3" y="966.9" width="1.5" height="1.0" fill="#b5d69b" opacity="0.5"/>
<rect x="96.9" y="960.5" width="1.6" height="1.4" fill="#b5d69b" opacity="0.5"/>
<rect x="165.6" y="894.1" width="1.5" height="1.4" fill="#b5d69b" opacity="0.5"/>
<rect x="230.7" y="932.7" width="1.6" height="1.0" fill="#b5d69b" opacity="0.5"/>
<rect x="134.7" y="969.8" width="1.7" height="1.7" fill="#b5d69b" opacity="0.5"/>
<rect x="76.1" y="871.5" width="1.1" height="1.2" fill="#b5d69b" opacity="0.5"/>
<rect x="239.5" y="876.0" width="1.3" height="0.9" fill="#b5d69b" opacity="0.5"/>
<rect x="89.2" y="937.4" width="1.4" height="1.4" fill="#b5d69b" opacity="0.5"/>
<rect x="169.5" y="916.2" width="1.0" height="1.1" fill="#b5d69b" opacity="0.5"/>
<rect x="273.6" y="954.7" width="0.9" height="0.9" fill="#b5d69b" opacity="0.5"/>
<rect x="291.6" y="931.7" width="1.6" height="1.0" fill="#b5d69b" opacity="0.5"/>
<rect x="183.8" y="892.6" width="1.6" height="1.2" fill="#b5d69b" opacity="0.5"/>
<rect x="248.0" y="970.8" width="1.1" height="1.3" fill="#b5d69b" opacity="0.5"/>
<rect x="273.9" y="963.5" width="1.2" height="1.2" fill="#b5d69b" opacity="0.5"/>
<rect x="92.2" y="958.6" width="0.9" height="0.9" fill="#b5d69b" opacity="0.5"/>
<rect x="223.0" y="916.9" width="1.5" height="1.1" fill="#b5d69b" opacity="0.5"/>
<rect x="282.1" y="873.1" width="1.0" height="1.5" fill="#b5d69b" opacity="0.5"/>
<rect x="87.9" y="897.5" width="1.5" height="1.5" fill="#b5d69b" opacity="0.5"/>
<rect x="144.2" y="880.3" width="1.2" height="1.5" fill="#b5d69b" opacity="0.5"/>
<rect x="167.6" y="877.6" width="1.5" height="1.4" fill="#b5d69b" opacity="0.5"/>
<rect x="322.2" y="965.6" width="1.7" height="1.2" fill="#b5d69b" opacity="0.5"/>
<rect x="289.9" y="897.6" width="1.1" height="1.2" fill="#b5d69b" opacity="0.5"/>
<rect x="326.7" y="960.7" width="1.0" height="1.2" fill="#b5d69b" opacity="0.5"/>
<rect x="167.4" y="903.9" width="1.2" height="1.2" fill="#b5d69b" opacity="0.5"/>
<rect x="119.6" y="925.3" width="1.6" height="1.3" fill="#b5d69b" opacity="0.5"/>
<rect x="299.2" y="925.2" width="1.0" height="1.6" fill="#b5d69b" opacity="0.5"/>
<rect x="311.7" y="895.1" width="0.8" height="1.3" fill="#b5d69b" opacity="0.5"/>
<rect x="217.4" y="925.7" width="1.8" height="1.5" fill="#b5d69b" opacity="0.5"/>
<rect x="290.2" y="871.9" width="1.3" height="1.6" fill="#b5d69b" opacity="0.5"/>
<rect x="88.5" y="873.7" width="1.5" height="1.7" fill="#b5d69b" opacity="0.5"/>
<rect x="88.7" y="932.9" width="0.9" height="1.5" fill="#b5d69b" opacity="0.5"/>
<rect x="246.7" y="891.3" width="1.0" height="1.6" fill="#b5d69b" opacity="0.5"/>
<rect x="211.0" y="946.8" width="1.2" height="1.1" fill="#b5d69b" opacity="0.5"/>
<rect x="336.1" y="936.9" width="1.3" height="1.3" fill="#b5d69b" opacity="0.5"/>
<rect x="266.9" y="940.8" width="1.7" height="1.2" fill="#b5d69b" opacity="0.5"/>
<rect x="296.3" y="936.3" width="1.7" height="1.6" fill="#b5d69b" opacity="0.5"/>
<rect x="298.5" y="960.1" width="1.8" height="1.4" fill="#b5d69b" opacity="0.5"/>
<rect x="211.7" y="941.0" width="1.6" height="1.2" fill="#b5d69b" opacity="0.5"/>
<rect x="182.7" y="880.6" width="1.5" height="1.8" fill="#b5d69b" opacity="0.5"/>
<rect x="170.1" y="882.9" width="1.0" height="1.2" fill="#b5d69b" opacity="0.5"/>
<rect x="146.8" y="968.8" width="0.9" height="1.1" fill="#b5d69b" opacity="0.5"/>
<rect x="97.1" y="934.3" width="1.6" height="1.0" fill="#b5d69b" opacity="0.5"/>
<rect x="82.5" y="914.1" width="1.4" height="1.7" fill="#b5d69b" opacity="0.5"/>
<rect x="75.2" y="876.6" width="1.0" height="1.0" fill="#b5d69b" opacity="0.5"/>
<rect x="130.9" y="941.7" width="1.4" height="1.0" fill="#b5d69b" opacity="0.5"/>
<rect x="116.8" y="895.1" width="1.0" height="1.6" fill="#b5d69b" opacity="0.5"/>
<rect x="152.3" y="923.7" width="1.6" height="1.3" fill="#b5d69b" opacity="0.5"/>
<rect x="137.9" y="960.0" width="1.7" height="1.1" fill="#b5d69b" opacity="0.5"/>
<rect x="218.3" y="967.4" width="1.3" height="1.0" fill="#b5d69b" opacity="0.5"/>
<rect x="78.9" y="966.4" width="1.6" height="1.2" fill="#b5d69b" opacity="0.5"/>
<rect x="212.7" y="920.2" width="1.1" height="1.8" fill="#b5d69b" opacity="0.5"/>
<rect x="249.1" y="890.4" width="0.8" height="1.3" fill="#b5d69b" opacity="0.5"/>
<rect x="169.0" y="950.3" width="1.5" height="1.4" fill="#b5d69b" opacity="0.5"/>
<rect x="109.0" y="881.8" width="1.1" height="1.1" fill="#b5d69b" opacity="0.5"/>
<rect x="308.4" y="920.2" width="1.4" height="1.8" fill="#b5d69b" opacity="0.5"/>
<rect x="139.6" y="922.2" width="1.0" height="1.6" fill="#b5d69b" opacity="0.5"/>
<rect x="65.4" y="952.9" width="1.6" height="1.6" fill="#b5d69b" opacity="0.5"/>
<rect x="88.1" y="893.9" width="1.5" height="0.9" fill="#b5d69b" opacity="0.5"/>
<rect x="199.4" y="915.1" width="1.8" height="1.4" fill="#b5d69b" opacity="0.5"/>
<rect x="305.1" y="897.5" width="1.6" height="1.2" fill="#b5d69b" opacity="0.5"/>
<rect x="321.7" y="874.7" width="1.6" height="1.0" fill="#b5d69b" opacity="0.5"/>
<rect x="217.1" y="921.2" width="1.0" height="1.6" fill="#b5d69b" opacity="0.5"/>
<rect x="152.2" y="898.2" width="0.9" height="1.1" fill="#b5d69b" opacity="0.5"/>
<rect x="195.8" y="941.5" width="1.2" height="1.5" fill="#b5d69b" opacity="0.5"/>
<rect x="94.6" y="907.2" width="1.3" height="1.8" fill="#b5d69b" opacity="0.5"/>
<rect x="297.3" y="935.0" width="0.8" height="1.2" fill="#b5d69b" opacity="0.5"/>
<rect x="263.8" y="890.4" width="1.4" height="1.3" fill="#b5d69b" opacity="0.5"/>
<rect x="67.9" y="971.1" width="1.6" height="1.0" fill="#b5d69b" opacity="0.5"/>
<rect x="237.5" y="896.1" width="1.2" height="1.3" fill="#b5d69b" opacity="0.5"/>
<rect x="148.5" y="901.1" width="1.2" height="1.5" fill="#b5d69b" opacity="0.5"/>
<rect x="136.8" y="886.4" width="1.5" height="1.1" fill="#b5d69b" opacity="0.5"/>
<rect x="329.6" y="925.2" width="1.5" height="1.1" fill="#b5d69b" opacity="0.5"/>
<rect x="296.5" y="874.9" width="0.9" height="0.9" fill="#b5d69b" opacity="0.5"/>
<rect x="254.8" y="940.8" width="1.0" height="1.2" fill="#b5d69b" opacity="0.5"/>
<rect x="299.3" y="928.4" width="0.9" height="1.0" fill="#b5d69b" opacity="0.5"/>
<rect x="109.0" y="878.3" width="1.2" height="0.9" fill="#b5d69b" opacity="0.5"/>
<rect x="322.8" y="910.7" width="1.3" height="1.4" fill="#b5d69b" opacity="0.5"/>
<rect x="279.7" y="952.9" width="1.2" height="1.1" fill="#b5d69b" opacity="0.5"/>
<rect x="180.4" y="866.7" width="1.2" height="1.5" fill="#b5d69b" opacity="0.5"/>
<rect x="339.9" y="949.5" width="1.5" height="1.4" fill="#b5d69b" opacity="0.5"/>
<rect x="70.2" y="900.4" width="1.1" height="1.5" fill="#b5d69b" opacity="0.5"/>
<rect x="94.8" y="905.4" width="1.3" height="1.6" fill="#b5d69b" opacity="0.5"/>
<rect x="296.1" y="930.4" width="1.0" height="1.6" fill="#b5d69b" opacity="0.5"/>
<rect x="317.8" y="923.7" width="1.2" height="1.3" fill="#b5d69b" opacity="0.5"/>
<rect x="104.7" y="941.3" width="1.8" height="1.3" fill="#b5d69b" opacity="0.5"/>
<rect x="265.3" y="954.4" width="1.0" height="1.7" fill="#b5d69b" opacity="0.5"/>
<rect x="240.6" y="886.2" width="0.9" height="1.0" fill="#b5d69b" opacity="0.5"/>
<rect x="226.4" y="939.6" width="1.1" height="1.7" fill="#b5d69b" opacity="0.5"/>
<rect x="166.1" y="914.5" width="0.9" height="1.8" fill="#b5d69b" opacity="0.5"/>
<rect x="103.0" y="961.7" width="1.3" height="1.4" fill="#b5d69b" opacity="0.5"/>
<rect x="221.9" y="893.3" width="1.7" height="1.8" fill="#b5d69b" opacity="0.5"/>
<rect x="293.9" y="929.4" width="0.9" height="1.6" fill="#b5d69b" opacity="0.5"/>
<rect x="145.8" y="961.0" width="1.0" height="1.4" fill="#b5d69b" opacity="0.5"/>
<rect x="297.6" y="884.9" width="1.3" height="0.9" fill="#b5d69b" opacity="0.5"/>
<rect x="74.0" y="884.3" width="1.8" height="1.7" fill="#b5d69b" opacity="0.5"/>
<rect x="249.3" y="897.9" width="1.5" height="1.5" fill="#b5d69b" opacity="0.5"/>
<rect x="171.9" y="928.3" width="1.6" height="0.8" fill="#b5d69b" opacity="0.5"/>
<rect x="120.9" y="915.1" width="0.9" height="1.2" fill="#b5d69b" opacity="0.5"/>
<rect x="224.5" y="883.6" width="1.3" height="1.1" fill="#b5d69b" opacity="0.5"/>
<rect x="224.0" y="900.5" width="1.4" height="0.8" fill="#b5d69b" opacity="0.5"/>
<rect x="252.9" y="880.5" width="1.8" height="1.4" fill="#b5d69b" opacity="0.5"/>
<rect x="196.6" y="909.0" width="1.4" height="1.5" fill="#b5d69b" opacity="0.5"/>
<rect x="277.2" y="945.4" width="1.3" height="1.8" fill="#b5d69b" opacity="0.5"/>
<rect x="299.7" y="956.5" width="1.2" height="1.2" fill="#b5d69b" opacity="0.5"/>
<rect x="223.5" y="961.9" width="1.3" height="1.3" fill="#b5d69b" opacity="0.5"/>
<rect x="186.0" y="961.8" width="1.1" height="0.9" fill="#b5d69b" opacity="0.5"/>
<rect x="268.2" y="961.3" width="1.5" height="1.4" fill="#b5d69b" opacity="0.5"/>
<rect x="275.5" y="897.6" width="1.4" height="0.9" fill="#b5d69b" opacity="0.5"/>
<rect x="99.8" y="912.8" width="1.3" height="1.2" fill="#b5d69b" opacity="0.5"/>
<rect x="79.6" y="939.4" width="1.3" height="1.0" fill="#b5d69b" opacity="0.5"/>
<rect x="150.8" y="907.3" width="1.0" height="0.9" fill="#b5d69b" opacity="0.5"/>
<rect x="320.2" y="968.4" width="1.5" height="1.7" fill="#b5d69b" opacity="0.5"/>
<rect x="183.0" y="951.2" width="1.0" height="1.5" fill="#b5d69b" opacity="0.5"/>
<rect x="223.7" y="961.7" width="0.9" height="1.6" fill="#b5d69b" opacity="0.5"/>
<rect x="99.7" y="922.5" width="1.8" height="0.8" fill="#b5d69b" opacity="0.5"/>
<rect x="133.3" y="897.0" width="1.1" height="0.9" fill="#b5d69b" opacity="0.5"/>
<rect x="315.6" y="952.3" width="1.2" height="1.2" fill="#b5d69b" opacity="0.5"/>
<rect x="228.9" y="869.9" width="0.8" height="1.7" fill="#b5d69b" opacity="0.5"/>
<rect x="151.2" y="918.3" width="1.7" height="1.8" fill="#b5d69b" opacity="0.5"/>
<rect x="197.3" y="887.1" width="1.1" height="1.7" fill="#b5d69b" opacity="0.5"/>
<rect x="316.1" y="885.9" width="1.6" height="1.2" fill="#b5d69b" opacity="0.5"/>
<rect x="197.3" y="883.4" width="1.7" height="1.8" fill="#b5d69b" opacity="0.5"/>
<rect x="121.6" y="932.7" width="1.0" height="1.7" fill="#b5d69b" opacity="0.5"/>
<rect x="79.0" y="876.4" width="1.5" height="1.1" fill="#b5d69b" opacity="0.5"/>
<rect x="317.1" y="958.0" width="1.5" height="0.9" fill="#b5d69b" opacity="0.5"/>
<rect x="259.9" y="965.3" width="1.2" height="0.9" fill="#b5d69b" opacity="0.5"/>
<rect x="127.5" y="897.9" width="1.5" height="1.0" fill="#b5d69b" opacity="0.5"/>
<rect x="115.7" y="890.2" width="1.5" height="1.6" fill="#b5d69b" opacity="0.5"/>
<rect x="169.3" y="935.8" width="1.7" height="1.4" fill="#b5d69b" opacity="0.5"/>
<rect x="129.1" y="897.2" width="1.7" height="1.5" fill="#b5d69b" opacity="0.5"/>
<rect x="142.5" y="933.5" width="0.9" height="1.8" fill="#b5d69b" opacity="0.5"/>
<rect x="188.3" y="921.5" width="1.3" height="0.8" fill="#b5d69b" opacity="0.5"/>
<rect x="232.9" y="895.4" width="1.1" height="1.6" fill="#b5d69b" opacity="0.5"/>
<rect x="89.4" y="895.5" width="1.6" height="1.0" fill="#b5d69b" opacity="0.5"/>
<rect x="143.1" y="923.6" width="1.0" height="1.7" fill="#b5d69b" opacity="0.5"/>
<rect x="341.6" y="868.6" width="1.3" height="1.6" fill="#b5d69b" opacity="0.5"/>
<rect x="172.7" y="964.4" width="1.3" height="1.0" fill="#b5d69b" opacity="0.5"/>
<rect x="220.7" y="934.0" width="1.2" height="1.5" fill="#b5d69b" opacity="0.5"/>
<rect x="284.2" y="920.3" width="1.3" height="1.6" fill="#b5d69b" opacity="0.5"/>
<rect x="256.6" y="920.7" width="1.8" height="1.0" fill="#b5d69b" opacity="0.5"/>
<rect x="283.3" y="882.7" width="1.4" height="1.0" fill="#b5d69b" opacity="0.5"/>
<rect x="188.3" y="947.7" width="1.6" height="1.6" fill="#b5d69b" opacity="0.5"/>
<rect x="131.1" y="917.3" width="1.0" height="1.4" fill="#b5d69b" opacity="0.5"/>
<rect x="204.7" y="868.8" width="1.4" height="1.5" fill="#b5d69b" opacity="0.5"/>
<rect x="225.3" y="958.4" width="1.0" height="1.0" fill="#b5d69b" opacity="0.5"/>
<rect x="70.0" y="918.1" width="1.2" height="1.2" fill="#b5d69b" opacity="0.5"/>
<rect x="138.6" y="950.4" width="0.9" height="1.7" fill="#b5d69b" opacity="0.5"/>
<rect x="224.3" y="923.1" width="1.6" height="1.0" fill="#b5d69b" opacity="0.5"/>
<rect x="105.9" y="898.3" width="0.8" height="1.1" fill="#b5d69b" opacity="0.5"/>
<rect x="238.9" y="921.2" width="1.1" height="1.4" fill="#b5d69b" opacity="0.5"/>
<rect x="89.8" y="952.8" width="1.0" height="1.1" fill="#b5d69b" opacity="0.5"/>
<rect x="109.7" y="938.9" width="1.6" height="1.6" fill="#b5d69b" opacity="0.5"/>
<rect x="82.1" y="908.9" width="1.2" height="1.0" fill="#b5d69b" opacity="0.5"/>
<rect x="336.8" y="869.5" width="1.3" height="1.6" fill="#b5d69b" opacity="0.5"/>
<rect x="341.1" y="880.5" width="1.3" height="1.5" fill="#b5d69b" opacity="0.5"/>
<rect x="76.0" y="890.7" width="1.7" height="0.9" fill="#b5d69b" opacity="0.5"/>
<rect x="175.0" y="896.9" width="1.2" height="0.9" fill="#b5d69b" opacity="0.5"/>
<rect x="74.6" y="971.6" width="1.6" height="1.5" fill="#b5d69b" opacity="0.5"/>
<rect x="129.4" y="892.1" width="1.4" height="1.0" fill="#b5d69b" opacity="0.5"/>
<rect x="194.2" y="964.8" width="1.2" height="1.1" fill="#b5d69b" opacity="0.5"/>
<rect x="339.7" y="930.4" width="0.8" height="1.2" fill="#b5d69b" opacity="0.5"/>
<rect x="246.9" y="871.3" width="1.1" height="1.5" fill="#b5d69b" opacity="0.5"/>
<rect x="307.0" y="928.2" width="1.7" height="1.3" fill="#b5d69b" opacity="0.5"/>
<rect x="175.0" y="955.2" width="1.2" height="1.6" fill="#b5d69b" opacity="0.5"/>
<rect x="125.3" y="902.2" width="1.0" height="1.3" fill="#b5d69b" opacity="0.5"/>
<rect x="110.9" y="886.8" width="1.0" height="1.3" fill="#b5d69b" opacity="0.5"/>
<rect x="151.4" y="912.8" width="1.8" height="1.5" fill="#b5d69b" opacity="0.5"/>
<rect x="306.6" y="886.9" width="1.2" height="0.9" fill="#b5d69b" opacity="0.5"/>
<rect x="258.6" y="903.8" width="1.1" height="0.8" fill="#b5d69b" opacity="0.5"/>
<rect x="116.0" y="893.1" width="1.2" height="1.7" fill="#b5d69b" opacity="0.5"/>
<rect x="265.3" y="893.7" width="1.2" height="1.0" fill="#b5d69b" opacity="0.5"/>
<rect x="327.3" y="903.5" width="1.6" height="1.5" fill="#b5d69b" opacity="0.5"/>
<rect x="319.0" y="867.2" width="1.1" height="1.2" fill="#b5d69b" opacity="0.5"/>
<rect x="88.3" y="959.4" width="1.1" height="1.6" fill="#b5d69b" opacity="0.5"/>
<rect x="210.4" y="870.9" width="1.2" height="1.0" fill="#b5d69b" opacity="0.5"/>
<rect x="76.4" y="881.1" width="1.4" height="0.8" fill="#b5d69b" opacity="0.5"/>
<rect x="152.4" y="910.4" width="1.3" height="0.9" fill="#b5d69b" opacity="0.5"/>
<rect x="262.8" y="892.9" width="1.5" height="1.5" fill="#b5d69b" opacity="0.5"/>
<rect x="106.2" y="886.9" width="1.1" height="1.5" fill="#b5d69b" opacity="0.5"/>
<rect x="178.5" y="906.4" width="1.7" height="1.0" fill="#b5d69b" opacity="0.5"/>
<rect x="146.8" y="901.9" width="1.0" height="0.8" fill="#b5d69b" opacity="0.5"/>
<rect x="71.9" y="932.5" width="1.4" height="1.6" fill="#b5d69b" opacity="0.5"/>
<rect x="338.2" y="896.9" width="1.5" height="1.7" fill="#b5d69b" opacity="0.5"/>
<rect x="125.5" y="938.7" width="1.5" height="1.8" fill="#b5d69b" opacity="0.5"/>
<rect x="308.1" y="890.1" width="1.4" height="0.9" fill="#b5d69b" opacity="0.5"/>
<rect x="184.8" y="907.0" width="0.9" height="1.2" fill="#b5d69b" opacity="0.5"/>
<rect x="156.9" y="918.2" width="1.1" height="1.0" fill="#b5d69b" opacity="0.5"/>
<rect x="177.7" y="915.8" width="1.0" height="1.5" fill="#b5d69b" opacity="0.5"/>
<rect x="132.1" y="875.0" width="1.1" height="1.2" fill="#b5d69b" opacity="0.5"/>
<rect x="107.2" y="927.3" width="1.5" height="1.4" fill="#b5d69b" opacity="0.5"/>
<rect x="261.1" y="867.5" width="1.2" height="1.2" fill="#b5d69b" opacity="0.5"/>
<rect x="82.6" y="908.3" width="0.9" height="1.3" fill="#b5d69b" opacity="0.5"/>
<rect x="229.0" y="915.2" width="1.1" height="1.1" fill="#b5d69b" opacity="0.5"/>
<rect x="71.6" y="902.1" width="1.7" height="1.4" fill="#b5d69b" opacity="0.5"/>
<rect x="138.3" y="936.5" width="1.0" height="1.3" fill="#b5d69b" opacity="0.5"/>
<rect x="237.3" y="967.1" width="1.2" height="1.4" fill="#b5d69b" opacity="0.5"/>
<rect x="328.9" y="947.5" width="1.4" height="1.4" fill="#b5d69b" opacity="0.5"/>
<rect x="180.1" y="909.5" width="1.1" height="1.6" fill="#b5d69b" opacity="0.5"/>
<rect x="311.3" y="905.9" width="1.7" height="0.8" fill="#b5d69b" opacity="0.5"/>
<rect x="103.0" y="919.3" width="1.1" height="1.2" fill="#b5d69b" opacity="0.5"/>
<rect x="338.6" y="881.0" width="1.0" height="1.0" fill="#b5d69b" opacity="0.5"/>
<rect x="255.4" y="890.1" width="0.8" height="1.3" fill="#b5d69b" opacity="0.5"/>
<rect x="175.3" y="890.6" width="1.3" height="1.5" fill="#b5d69b" opacity="0.5"/>
<rect x="218.5" y="931.8" width="1.4" height="1.6" fill="#b5d69b" opacity="0.5"/>
<rect x="336.3" y="900.7" width="1.1" height="1.7" fill="#b5d69b" opacity="0.5"/>
<rect x="152.7" y="941.6" width="1.5" height="1.5" fill="#b5d69b" opacity="0.5"/>
<rect x="334.9" y="953.2" width="1.0" height="1.4" fill="#b5d69b" opacity="0.5"/>
<rect x="202.4" y="925.3" width="1.2" height="1.1" fill="#b5d69b" opacity="0.5"/>
<rect x="274.7" y="922.1" width="1.0" height="1.0" fill="#b5d69b" opacity="0.5"/>
<rect x="156.0" y="884.0" width="1.3" height="0.9" fill="#b5d69b" opacity="0.5"/>
<rect x="82.7" y="872.3" width="0.9" height="1.5" fill="#b5d69b" opacity="0.5"/>
<rect x="96.6" y="913.3" width="1.6" height="1.3" fill="#b5d69b" opacity="0.5"/>
<rect x="110.5" y="957.7" width="1.7" height="0.9" fill="#b5d69b" opacity="0.5"/>
<rect x="136.1" y="919.3" width="1.6" height="1.2" fill="#b5d69b" opacity="0.5"/>
<rect x="265.5" y="891.9" width="1.5" height="1.1" fill="#b5d69b" opacity="0.5"/>
<rect x="158.5" y="946.2" width="1.6" height="1.6" fill="#b5d69b" opacity="0.5"/>
<rect x="223.9" y="910.0" width="1.5" height="1.4" fill="#b5d69b" opacity="0.5"/>
<rect x="297.7" y="950.7" width="0.9" height="1.2" fill="#b5d69b" opacity="0.5"/>
<rect x="252.4" y="889.7" width="1.0" height="0.8" fill="#b5d69b" opacity="0.5"/>
<rect x="228.9" y="965.7" width="1.8" height="0.9" fill="#b5d69b" opacity="0.5"/>
<rect x="257.5" y="909.9" width="1.4" height="1.2" fill="#b5d69b" opacity="0.5"/>
<rect x="326.3" y="970.8" width="0.8" height="1.5" fill="#b5d69b" opacity="0.5"/>
<rect x="98.1" y="869.5" width="1.1" height="1.5" fill="#b5d69b" opacity="0.5"/>
<rect x="343.2" y="877.9" width="1.1" height="0.8" fill="#b5d69b" opacity="0.5"/>
<rect x="216.9" y="916.7" width="1.2" height="1.1" fill="#b5d69b" opacity="0.5"/>
<rect x="289.1" y="954.7" width="1.1" height="1.2" fill="#b5d69b" opacity="0.5"/>
<rect x="238.0" y="946.9" width="1.8" height="1.2" fill="#b5d69b" opacity="0.5"/>
<rect x="259.3" y="923.4" width="1.6" height="0.9" fill="#b5d69b" opacity="0.5"/>
<rect x="114.0" y="876.5" width="1.7" height="1.1" fill="#b5d69b" opacity="0.5"/>
<rect x="201.7" y="877.9" width="1.1" height="0.8" fill="#b5d69b" opacity="0.5"/>
<rect x="223.5" y="880.4" width="1.4" height="1.1" fill="#b5d69b" opacity="0.5"/>
<rect x="128.7" y="916.6" width="1.2" height="1.1" fill="#b5d69b" opacity="0.5"/>
<rect x="79.3" y="871.9" width="1.7" height="1.1" fill="#b5d69b" opacity="0.5"/>
<rect x="87.0" y="884.5" width="1.3" height="1.8" fill="#b5d69b" opacity="0.5"/>
<rect x="121.6" y="957.8" width="1.3" height="1.2" fill="#b5d69b" opacity="0.5"/>
<rect x="291.0" y="907.4" width="0.9" height="1.4" fill="#b5d69b" opacity="0.5"/>
<rect x="248.9" y="931.7" width="1.1" height="1.7" fill="#b5d69b" opacity="0.5"/>
<rect x="307.1" y="971.4" width="1.2" height="1.6" fill="#b5d69b" opacity="0.5"/>
<rect x="268.0" y="883.8" width="0.8" height="1.0" fill="#b5d69b" opacity="0.5"/>
<rect x="98.3" y="873.0" width="1.2" height="1.6" fill="#b5d69b" opacity="0.5"/>
<rect x="151.8" y="920.0" width="0.8" height="1.0" fill="#b5d69b" opacity="0.5"/>
<rect x="333.6" y="866.2" width="1.3" height="1.6" fill="#b5d69b" opacity="0.5"/>
<rect x="286.8" y="943.7" width="1.2" height="1.6" fill="#b5d69b" opacity="0.5"/>
<rect x="296.7" y="947.1" width="1.8" height="0.9" fill="#b5d69b" opacity="0.5"/>
<rect x="331.1" y="908.0" width="1.5" height="1.1" fill="#b5d69b" opacity="0.5"/>
<rect x="319.7" y="867.5" width="1.4" height="1.0" fill="#b5d69b" opacity="0.5"/>
<rect x="173.8" y="904.5" width="1.5" height="1.6" fill="#b5d69b" opacity="0.5"/>
<rect x="167.1" y="933.3" width="1.2" height="1.1" fill="#b5d69b" opacity="0.5"/>
<rect x="318.4" y="899.4" width="0.9" height="1.1" fill="#b5d69b" opacity="0.5"/>
<rect x="272.7" y="887.6" width="1.5" height="1.3" fill="#b5d69b" opacity="0.5"/>
<rect x="255.5" y="884.0" width="0.9" height="0.9" fill="#b5d69b" opacity="0.5"/>
<rect x="163.1" y="911.1" width="0.8" height="1.3" fill="#b5d69b" opacity="0.5"/>
<rect x="177.9" y="899.4" width="1.3" height="1.8" fill="#b5d69b" opacity="0.5"/>
<rect x="122.3" y="959.2" width="1.1" height="1.6" fill="#b5d69b" opacity="0.5"/>
<rect x="95.3" y="970.7" width="1.2" height="1.8" fill="#b5d69b" opacity="0.5"/>
<rect x="126.5" y="908.7" width="1.5" height="1.0" fill="#b5d69b" opacity="0.5"/>
<rect x="141.5" y="937.5" width="1.7" height="1.1" fill="#b5d69b" opacity="0.5"/>
<rect x="116.4" y="903.2" width="1.8" height="0.9" fill="#b5d69b" opacity="0.5"/>
<rect x="242.7" y="905.5" width="1.4" height="1.0" fill="#b5d69b" opacity="0.5"/>
<rect x="237.6" y="960.0" width="1.7" height="1.4" fill="#b5d69b" opacity="0.5"/>
<rect x="206.4" y="925.7" width="0.9" height="1.6" fill="#b5d69b" opacity="0.5"/>
<rect x="258.2" y="913.5" width="1.5" height="1.2" fill="#b5d69b" opacity="0.5"/>
<rect x="172.7" y="889.6" width="1.4" height="1.4" fill="#b5d69b" opacity="0.5"/>
<rect x="209.3" y="868.4" width="1.4" height="1.2" fill="#b5d69b" opacity="0.5"/>
<rect x="231.1" y="928.6" width="1.7" height="1.0" fill="#b5d69b" opacity="0.5"/>
<rect x="196.2" y="971.2" width="1.5" height="1.1" fill="#b5d69b" opacity="0.5"/>
<rect x="271.3" y="970.9" width="1.2" height="1.7" fill="#b5d69b" opacity="0.5"/>
<rect x="100.5" y="970.9" width="1.3" height="1.0" fill="#b5d69b" opacity="0.5"/>
<rect x="300.3" y="934.5" width="1.7" height="1.6" fill="#b5d69b" opacity="0.5"/>
<rect x="288.3" y="919.7" width="1.8" height="0.9" fill="#b5d69b" opacity="0.5"/>
<rect x="308.6" y="941.1" width="1.1" height="1.6" fill="#b5d69b" opacity="0.5"/>
<rect x="192.1" y="922.4" width="1.7" height="1.0" fill="#b5d69b" opacity="0.5"/>
<rect x="143.3" y="933.9" width="0.9" height="1.4" fill="#b5d69b" opacity="0.5"/>
<rect x="285.4" y="917.5" width="1.0" height="1.6" fill="#b5d69b" opacity="0.5"/>
<rect x="304.4" y="947.5" width="1.3" height="1.7" fill="#b5d69b" opacity="0.5"/>
<rect x="288.1" y="881.2" width="1.2" height="0.9" fill="#b5d69b" opacity="0.5"/>
<rect x="75.3" y="902.0" width="1.7" height="1.6" fill="#b5d69b" opacity="0.5"/>
<rect x="97.9" y="884.4" width="1.2" height="1.6" fill="#b5d69b" opacity="0.5"/>
<rect x="237.8" y="961.5" width="0.9" height="1.8" fill="#b5d69b" opacity="0.5"/>
<rect x="122.9" y="932.3" width="1.7" height="1.5" fill="#b5d69b" opacity="0.5"/>
<rect x="120.2" y="936.5" width="1.2" height="0.8" fill="#b5d69b" opacity="0.5"/>
<rect x="160.1" y="898.7" width="1.4" height="1.1" fill="#b5d69b" opacity="0.5"/>
<rect x="233.9" y="939.3" width="1.0" height="0.9" fill="#b5d69b" opacity="0.5"/>
<rect x="259.3" y="914.9" width="0.9" height="0.9" fill="#b5d69b" opacity="0.5"/>
<rect x="328.5" y="930.3" width="1.2" height="1.0" fill="#b5d69b" opacity="0.5"/>
<rect x="343.6" y="939.0" width="1.5" height="1.2" fill="#b5d69b" opacity="0.5"/>
<rect x="151.9" y="908.7" width="0.9" height="1.4" fill="#b5d69b" opacity="0.5"/>
<rect x="183.9" y="952.8" width="1.2" height="1.3" fill="#b5d69b" opacity="0.5"/>
<rect x="206.8" y="965.8" width="1.1" height="1.5" fill="#b5d69b" opacity="0.5"/>
<rect x="130.8" y="927.0" width="1.1" height="1.7" fill="#b5d69b" opacity="0.5"/>
<rect x="145.2" y="956.4" width="1.5" height="1.3" fill="#b5d69b" opacity="0.5"/>
<rect x="326.4" y="906.5" width="1.5" height="1.4" fill="#b5d69b" opacity="0.5"/>
<rect x="190.6" y="871.9" width="1.2" height="1.1" fill="#b5d69b" opacity="0.5"/>
<rect x="188.5" y="967.1" width="1.1" height="1.5" fill="#b5d69b" opacity="0.5"/>
<rect x="253.2" y="891.2" width="1.2" height="0.9" fill="#b5d69b" opacity="0.5"/>
<rect x="315.7" y="891.9" width="1.2" height="1.1" fill="#b5d69b" opacity="0.5"/>
<rect x="294.7" y="956.0" width="1.4" height="1.3" fill="#b5d69b" opacity="0.5"/>
<rect x="92.8" y="960.9" width="0.9" height="1.2" fill="#b5d69b" opacity="0.5"/>
<rect x="169.9" y="942.4" width="1.5" height="1.1" fill="#b5d69b" opacity="0.5"/>
<rect x="316.4" y="966.6" width="0.8" height="1.4" fill="#b5d69b" opacity="0.5"/>
<rect x="196.4" y="903.7" width="1.3" height="1.1" fill="#b5d69b" opacity="0.5"/>
<rect x="252.8" y="929.8" width="1.8" height="1.8" fill="#b5d69b" opacity="0.5"/>
<rect x="342.9" y="907.3" width="1.6" height="1.4" fill="#b5d69b" opacity="0.5"/>
<rect x="261.3" y="971.7" width="0.9" height="1.3" fill="#b5d69b" opacity="0.5"/>
<rect x="177.4" y="935.2" width="1.0" height="1.8" fill="#b5d69b" opacity="0.5"/>
<rect x="123.6" y="904.6" width="0.9" height="1.2" fill="#b5d69b" opacity="0.5"/>
<rect x="272.7" y="873.9" width="1.0" height="1.4" fill="#b5d69b" opacity="0.5"/>
<rect x="239.4" y="944.4" width="1.1" height="1.6" fill="#b5d69b" opacity="0.5"/>
<rect x="269.6" y="948.0" width="0.9" height="1.3" fill="#b5d69b" opacity="0.5"/>
<rect x="69.4" y="957.0" width="1.7" height="1.7" fill="#b5d69b" opacity="0.5"/>
<rect x="71.8" y="902.6" width="1.3" height="1.3" fill="#b5d69b" opacity="0.5"/>
<rect x="96.1" y="949.4" width="1.1" height="1.3" fill="#b5d69b" opacity="0.5"/>
<rect x="99.9" y="925.8" width="0.9" height="0.9" fill="#b5d69b" opacity="0.5"/>
<rect x="208.4" y="896.5" width="1.6" height="1.0" fill="#b5d69b" opacity="0.5"/>
<rect x="180.9" y="870.8" width="1.0" height="1.3" fill="#b5d69b" opacity="0.5"/>
<rect x="221.3" y="914.2" width="1.7" height="0.9" fill="#b5d69b" opacity="0.5"/>
<rect x="303.0" y="881.6" width="1.8" height="1.3" fill="#b5d69b" opacity="0.5"/>
<rect x="178.8" y="930.5" width="1.7" height="1.8" fill="#b5d69b" opacity="0.5"/>
<rect x="180.7" y="866.1" width="1.0" height="1.6" fill="#b5d69b" opacity="0.5"/>
<rect x="270.6" y="941.2" width="1.0" height="1.3" fill="#b5d69b" opacity="0.5"/>
<rect x="73.0" y="876.8" width="1.1" height="1.8" fill="#b5d69b" opacity="0.5"/>
<rect x="245.1" y="955.7" width="0.8" height="1.2" fill="#b5d69b" opacity="0.5"/>
<rect x="86.9" y="892.9" width="0.9" height="1.7" fill="#b5d69b" opacity="0.5"/>
<rect x="157.1" y="917.3" width="1.5" height="1.7" fill="#b5d69b" opacity="0.5"/>
<rect x="330.0" y="925.8" width="1.3" height="1.7" fill="#b5d69b" opacity="0.5"/>
<rect x="175.4" y="897.0" width="1.5" height="1.1" fill="#b5d69b" opacity="0.5"/>
<rect x="168.0" y="910.9" width="1.3" height="1.2" fill="#b5d69b" opacity="0.5"/>
<rect x="185.5" y="913.2" width="0.8" height="1.6" fill="#b5d69b" opacity="0.5"/>
<rect x="82.3" y="921.5" width="1.3" height="1.2" fill="#b5d69b" opacity="0.5"/>
<rect x="127.3" y="875.6" width="1.2" height="1.1" fill="#b5d69b" opacity="0.5"/>
<rect x="200.5" y="889.6" width="1.5" height="1.3" fill="#b5d69b" opacity="0.5"/>
<rect x="67.5" y="908.5" width="1.8" height="0.8" fill="#b5d69b" opacity="0.5"/>
<rect x="231.1" y="967.8" width="1.2" height="1.4" fill="#b5d69b" opacity="0.5"/>
<rect x="168.3" y="897.2" width="1.4" height="1.4" fill="#b5d69b" opacity="0.5"/>
<rect x="153.2" y="918.2" width="1.3" height="1.6" fill="#b5d69b" opacity="0.5"/>
<rect x="79.9" y="874.9" width="1.1" height="1.1" fill="#b5d69b" opacity="0.5"/>
<rect x="287.8" y="910.5" width="1.7" height="1.2" fill="#b5d69b" opacity="0.5"/>
<rect x="145.0" y="937.7" width="0.9" height="1.8" fill="#b5d69b" opacity="0.5"/>
<rect x="297.8" y="900.1" width="1.1" height="1.6" fill="#b5d69b" opacity="0.5"/>
<rect x="285.7" y="933.7" width="0.9" height="1.6" fill="#b5d69b" opacity="0.5"/>
<rect x="78.4" y="931.8" width="1.4" height="1.7" fill="#b5d69b" opacity="0.5"/>
<rect x="243.8" y="867.4" width="1.7" height="1.6" fill="#b5d69b" opacity="0.5"/>
<rect x="227.4" y="865.6" width="1.5" height="1.2" fill="#b5d69b" opacity="0.5"/>
<rect x="255.3" y="970.3" width="1.7" height="0.9" fill="#b5d69b" opacity="0.5"/>
<rect x="283.8" y="912.1" width="1.6" height="1.2" fill="#b5d69b" opacity="0.5"/>
<rect x="190.3" y="911.7" width="0.9" height="1.1" fill="#b5d69b" opacity="0.5"/>
<rect x="270.7" y="872.6" width="0.9" height="1.6" fill="#b5d69b" opacity="0.5"/>
<rect x="251.5" y="923.6" width="0.9" height="0.9" fill="#b5d69b" opacity="0.5"/>
<rect x="151.8" y="967.1" width="1.4" height="1.7" fill="#b5d69b" opacity="0.5"/>
<rect x="124.1" y="909.4" width="1.3" height="1.6" fill="#b5d69b" opacity="0.5"/>
<rect x="99.5" y="958.5" width="1.3" height="0.8" fill="#b5d69b" opacity="0.5"/>
<rect x="185.9" y="905.4" width="1.5" height="1.7" fill="#b5d69b" opacity="0.5"/>
<rect x="203.2" y="938.8" width="1.2" height="1.6" fill="#b5d69b" opacity="0.5"/>
<rect x="94.5" y="944.4" width="1.0" height="1.4" fill="#b5d69b" opacity="0.5"/>
<rect x="121.6" y="902.1" width="1.0" height="1.1" fill="#b5d69b" opacity="0.5"/>
<rect x="230.6" y="920.6" width="1.2" height="1.4" fill="#b5d69b" opacity="0.5"/>
<rect x="300.8" y="903.3" width="1.4" height="1.3" fill="#b5d69b" opacity="0.5"/>
<rect x="339.6" y="900.1" width="1.5" height="1.0" fill="#b5d69b" opacity="0.5"/>
<rect x="138.2" y="943.2" width="1.4" height="1.1" fill="#b5d69b" opacity="0.5"/>
<rect x="83.0" y="953.3" width="1.2" height="1.5" fill="#b5d69b" opacity="0.5"/>
<rect x="186.2" y="931.1" width="1.4" height="1.8" fill="#b5d69b" opacity="0.5"/>
<rect x="319.7" y="913.8" width="1.3" height="1.0" fill="#b5d69b" opacity="0.5"/>
<rect x="275.9" y="875.9" width="1.1" height="1.6" fill="#b5d69b" opacity="0.5"/>
<rect x="74.8" y="939.7" width="1.4" height="1.4" fill="#b5d69b" opacity="0.5"/>
<rect x="158.2" y="881.2" width="1.8" height="1.6" fill="#b5d69b" opacity="0.5"/>
<rect x="290.6" y="875.5" width="1.6" height="1.0" fill="#b5d69b" opacity="0.5"/>
<rect x="120.8" y="922.2" width="1.4" height="0.9" fill="#b5d69b" opacity="0.5"/>
<rect x="279.2" y="927.3" width="1.7" height="1.7" fill="#b5d69b" opacity="0.5"/>
<rect x="258.0" y="904.0" width="1.8" height="1.5" fill="#b5d69b" opacity="0.5"/>
<rect x="146.4" y="956.8" width="1.5" height="1.1" fill="#b5d69b" opacity="0.5"/>
<rect x="134.8" y="867.2" width="1.3" height="1.1" fill="#b5d69b" opacity="0.5"/>
<rect x="147.1" y="892.1" width="0.9" height="1.3" fill="#b5d69b" opacity="0.5"/>
<rect x="141.3" y="895.5" width="1.1" height="1.3" fill="#b5d69b" opacity="0.5"/>
<rect x="309.7" y="882.1" width="1.7" height="1.7" fill="#b5d69b" opacity="0.5"/>
<rect x="235.6" y="923.2" width="1.5" height="1.3" fill="#b5d69b" opacity="0.5"/>
<rect x="249.8" y="963.4" width="1.6" height="1.1" fill="#b5d69b" opacity="0.5"/>
<rect x="80.2" y="965.2" width="1.2" height="1.6" fill="#b5d69b" opacity="0.5"/>
<rect x="130.4" y="913.5" width="1.2" height="1.5" fill="#b5d69b" opacity="0.5"/>
<rect x="329.2" y="919.1" width="1.4" height="1.1" fill="#b5d69b" opacity="0.5"/>
<rect x="130.0" y="966.6" width="0.9" height="1.7" fill="#b5d69b" opacity="0.5"/>
<rect x="249.0" y="872.7" width="1.7" height="0.9" fill="#b5d69b" opacity="0.5"/>
<rect x="223.3" y="877.8" width="1.8" height="1.1" fill="#b5d69b" opacity="0.5"/>
<rect x="309.2" y="871.6" width="1.5" height="0.9" fill="#b5d69b" opacity="0.5"/>
<rect x="73.3" y="926.1" width="1.8" height="1.5" fill="#b5d69b" opacity="0.5"/>
<rect x="304.5" y="949.0" width="1.3" height="0.9" fill="#b5d69b" opacity="0.5"/>
<rect x="212.6" y="884.7" width="1.3" height="1.2" fill="#b5d69b" opacity="0.5"/>
<rect x="204.7" y="886.1" width="1.5" height="1.2" fill="#b5d69b" opacity="0.5"/>
<rect x="201.1" y="873.4" width="1.3" height="1.4" fill="#b5d69b" opacity="0.5"/>
<rect x="337.3" y="925.1" width="0.9" height="1.1" fill="#b5d69b" opacity="0.5"/>
<rect x="159.0" y="940.1" width="1.7" height="1.8" fill="#b5d69b" opacity="0.5"/>
<rect x="331.0" y="964.0" width="1.7" height="1.7" fill="#b5d69b" opacity="0.5"/>
<rect x="70.7" y="917.4" width="1.4" height="1.5" fill="#b5d69b" opacity="0.5"/>
<rect x="236.6" y="930.6" width="1.7" height="0.9" fill="#b5d69b" opacity="0.5"/>
<rect x="210.4" y="967.7" width="0.8" height="0.9" fill="#b5d69b" opacity="0.5"/>
<rect x="308.3" y="967.4" width="0.8" height="0.8" fill="#b5d69b" opacity="0.5"/>
<rect x="297.3" y="938.7" width="1.3" height="1.4" fill="#b5d69b" opacity="0.5"/>
<rect x="277.1" y="951.4" width="0.8" height="0.9" fill="#b5d69b" opacity="0.5"/>
<rect x="287.4" y="969.4" width="1.6" height="1.2" fill="#b5d69b" opacity="0.5"/>
<rect x="159.0" y="902.1" width="0.8" height="1.6" fill="#b5d69b" opacity="0.5"/>
<rect x="138.4" y="927.7" width="1.3" height="1.1" fill="#b5d69b" opacity="0.5"/>
<rect x="254.0" y="913.7" width="1.0" height="1.7" fill="#b5d69b" opacity="0.5"/>
<rect x="114.2" y="881.0" width="1.1" height="1.3" fill="#b5d69b" opacity="0.5"/>
<rect x="284.4" y="900.6" width="1.0" height="1.5" fill="#b5d69b" opacity="0.5"/>
<rect x="137.9" y="920.9" width="1.1" height="1.7" fill="#b5d69b" opacity="0.5"/>
<rect x="116.7" y="889.8" width="1.1" height="1.1" fill="#b5d69b" opacity="0.5"/>
<rect x="268.4" y="937.1" width="1.6" height="1.3" fill="#b5d69b" opacity="0.5"/>
<rect x="87.0" y="946.7" width="1.0" height="1.0" fill="#b5d69b" opacity="0.5"/>
<rect x="181.0" y="970.9" width="1.2" height="1.2" fill="#b5d69b" opacity="0.5"/>
<rect x="320.1" y="971.0" width="1.2" height="0.9" fill="#b5d69b" opacity="0.5"/>
<rect x="286.1" y="948.7" width="1.1" height="1.6" fill="#b5d69b" opacity="0.5"/>
<rect x="171.3" y="895.7" width="1.4" height="1.5" fill="#b5d69b" opacity="0.5"/>
<rect x="198.2" y="952.6" width="0.8" height="1.3" fill="#b5d69b" opacity="0.5"/>
<rect x="171.5" y="872.0" width="1.7" height="0.9" fill="#b5d69b" opacity="0.5"/>
<rect x="122.6" y="959.0" width="1.8" height="1.7" fill="#b5d69b" opacity="0.5"/>
<rect x="160.7" y="964.6" width="0.9" height="1.5" fill="#b5d69b" opacity="0.5"/>
<rect x="329.8" y="885.6" width="0.9" height="1.5" fill="#b5d69b" opacity="0.5"/>
<rect x="312.1" y="942.7" width="1.7" height="1.3" fill="#b5d69b" opacity="0.5"/>
<rect x="169.2" y="877.9" width="1.1" height="1.7" fill="#b5d69b" opacity="0.5"/>
<rect x="85.1" y="884.8" width="1.1" height="0.8" fill="#b5d69b" opacity="0.5"/>
<rect x="150.9" y="884.6" width="0.9" height="1.3" fill="#b5d69b" opacity="0.5"/>
<rect x="216.3" y="925.7" width="1.6" height="1.3" fill="#b5d69b" opacity="0.5"/>
<rect x="330.2" y="873.7" width="1.0" height="0.9" fill="#b5d69b" opacity="0.5"/>
<rect x="151.6" y="946.4" width="1.7" height="1.3" fill="#b5d69b" opacity="0.5"/>
<rect x="109.9" y="900.4" width="1.4" height="1.1" fill="#b5d69b" opacity="0.5"/>
<rect x="287.0" y="969.1" width="1.3" height="1.4" fill="#b5d69b" opacity="0.5"/>
<rect x="301.9" y="914.8" width="1.0" height="1.7" fill="#b5d69b" opacity="0.5"/>
<rect x="338.8" y="867.6" width="1.6" height="1.2" fill="#b5d69b" opacity="0.5"/>
<rect x="79.5" y="882.4" width="1.0" height="1.5" fill="#b5d69b" opacity="0.5"/>
<rect x="124.2" y="867.1" width="1.0" height="1.6" fill="#b5d69b" opacity="0.5"/>
<rect x="204.8" y="934.8" width="1.3" height="1.0" fill="#b5d69b" opacity="0.5"/>
<rect x="69.3" y="897.6" width="0.8" height="1.1" fill="#b5d69b" opacity="0.5"/>
<rect x="238.3" y="904.5" width="1.3" height="1.4" fill="#b5d69b" opacity="0.5"/>
<rect x="153.8" y="903.2" width="1.7" height="1.4" fill="#b5d69b" opacity="0.5"/>
<rect x="181.7" y="922.8" width="1.3" height="1.1" fill="#b5d69b" opacity="0.5"/>
<rect x="320.8" y="890.0" width="1.7" height="1.7" fill="#b5d69b" opacity="0.5"/>
<rect x="312.0" y="882.4" width="1.3" height="1.8" fill="#b5d69b" opacity="0.5"/>
<rect x="145.8" y="883.3" width="1.5" height="1.0" fill="#b5d69b" opacity="0.5"/>
<rect x="228.4" y="881.9" width="1.7" height="1.1" fill="#b5d69b" opacity="0.5"/>
<rect x="92.1" y="938.5" width="1.1" height="1.4" fill="#b5d69b" opacity="0.5"/>
<rect x="204.2" y="963.7" width="1.3" height="1.2" fill="#b5d69b" opacity="0.5"/>
<rect x="65.5" y="918.1" width="1.1" height="1.4" fill="#b5d69b" opacity="0.5"/>
<rect x="241.9" y="914.5" width="0.9" height="1.3" fill="#b5d69b" opacity="0.5"/>
<rect x="199.9" y="933.6" width="1.8" height="1.1" fill="#b5d69b" opacity="0.5"/>
<rect x="189.0" y="874.1" width="1.6" height="1.0" fill="#b5d69b" opacity="0.5"/>
<rect x="297.1" y="950.4" width="1.1" height="1.7" fill="#b5d69b" opacity="0.5"/>
<rect x="206.1" y="910.6" width="1.4" height="1.7" fill="#b5d69b" opacity="0.5"/>
<rect x="202.2" y="916.6" width="1.1" height="1.6" fill="#b5d69b" opacity="0.5"/>
<rect x="205.8" y="901.6" width="1.0" height="1.0" fill="#b5d69b" opacity="0.5"/>
<rect x="298.6" y="951.0" width="1.8" height="1.7" fill="#b5d69b" opacity="0.5"/>
<rect x="256.8" y="950.3" width="1.5" height="1.6" fill="#b5d69b" opacity="0.5"/>
<rect x="289.4" y="883.9" width="1.6" height="1.1" fill="#b5d69b" opacity="0.5"/>
<rect x="133.3" y="963.4" width="0.8" height="1.3" fill="#b5d69b" opacity="0.5"/>
<rect x="161.1" y="949.7" width="1.4" height="1.7" fill="#b5d69b" opacity="0.5"/>
<rect x="326.1" y="933.9" width="0.9" height="1.5" fill="#b5d69b" opacity="0.5"/>
<rect x="95.6" y="970.1" width="1.7" height="1.1" fill="#b5d69b" opacity="0.5"/>
<rect x="117.1" y="939.3" width="1.6" height="1.8" fill="#b5d69b" opacity="0.5"/>
<rect x="239.4" y="878.4" width="1.5" height="0.9" fill="#b5d69b" opacity="0.5"/>
<rect x="308.0" y="947.2" width="1.6" height="1.7" fill="#b5d69b" opacity="0.5"/>
<rect x="224.4" y="965.9" width="1.4" height="1.3" fill="#b5d69b" opacity="0.5"/>
<rect x="172.7" y="902.8" width="0.8" height="1.0" fill="#b5d69b" opacity="0.5"/>
<rect x="287.8" y="889.5" width="1.5" height="1.6" fill="#b5d69b" opacity="0.5"/>
<rect x="259.4" y="920.2" width="1.1" height="1.1" fill="#b5d69b" opacity="0.5"/>
<rect x="117.5" y="934.3" width="1.5" height="1.7" fill="#b5d69b" opacity="0.5"/>
<rect x="157.6" y="964.2" width="1.7" height="1.1" fill="#b5d69b" opacity="0.5"/>
<rect x="331.6" y="931.3" width="1.8" height="1.6" fill="#b5d69b" opacity="0.5"/>
<rect x="158.3" y="894.9" width="1.3" height="1.3" fill="#b5d69b" opacity="0.5"/>
<rect x="74.9" y="957.3" width="1.3" height="1.3" fill="#b5d69b" opacity="0.5"/>
<rect x="273.5" y="891.7" width="1.0" height="1.4" fill="#b5d69b" opacity="0.5"/>
<rect x="132.6" y="900.0" width="0.9" height="0.9" fill="#b5d69b" opacity="0.5"/>
<rect x="164.5" y="921.4" width="1.7" height="1.4" fill="#b5d69b" opacity="0.5"/>
<rect x="181.0" y="908.5" width="1.0" height="1.3" fill="#b5d69b" opacity="0.5"/>
<rect x="333.5" y="878.0" width="1.2" height="1.5" fill="#b5d69b" opacity="0.5"/>
<rect x="278.5" y="924.4" width="1.4" height="1.7" fill="#b5d69b" opacity="0.5"/>
<rect x="317.7" y="891.9" width="1.3" height="1.8" fill="#b5d69b" opacity="0.5"/>
<rect x="212.8" y="885.3" width="1.6" height="0.9" fill="#b5d69b" opacity="0.5"/>
<rect x="107.1" y="924.0" width="1.1" height="1.5" fill="#b5d69b" opacity="0.5"/>
<rect x="268.5" y="899.2" width="1.6" height="1.4" fill="#b5d69b" opacity="0.5"/>
<rect x="262.7" y="913.9" width="1.2" height="0.9" fill="#b5d69b" opacity="0.5"/>
<rect x="198.0" y="967.2" width="1.7" height="0.9" fill="#b5d69b" opacity="0.5"/>
<rect x="84.9" y="893.8" width="1.5" height="1.2" fill="#b5d69b" opacity="0.5"/>
<rect x="100.8" y="910.5" width="1.4" height="1.5" fill="#b5d69b" opacity="0.5"/>
<rect x="177.8" y="934.5" width="1.5" height="1.4" fill="#b5d69b" opacity="0.5"/>
<rect x="78.0" y="941.0" width="0.9" height="0.9" fill="#b5d69b" opacity="0.5"/>
<rect x="197.6" y="866.8" width="0.9" height="1.2" fill="#b5d69b" opacity="0.5"/>
<rect x="196.2" y="876.3" width="1.8" height="1.7" fill="#b5d69b" opacity="0.5"/>
<rect x="201.3" y="927.9" width="1.1" height="1.8" fill="#b5d69b" opacity="0.5"/>
<rect x="98.6" y="897.5" width="1.0" height="1.7" fill="#b5d69b" opacity="0.5"/>
<rect x="207.5" y="908.9" width="1.2" height="1.7" fill="#b5d69b" opacity="0.5"/>
<rect x="137.1" y="949.7" width="1.5" height="1.2" fill="#b5d69b" opacity="0.5"/>
<rect x="167.4" y="911.7" width="1.3" height="1.1" fill="#b5d69b" opacity="0.5"/>
<rect x="239.7" y="909.0" width="1.1" height="1.6" fill="#b5d69b" opacity="0.5"/>
<rect x="192.4" y="915.7" width="1.7" height="1.3" fill="#b5d69b" opacity="0.5"/>
<rect x="170.3" y="961.1" width="1.8" height="1.6" fill="#b5d69b" opacity="0.5"/>
<rect x="177.4" y="936.8" width="1.5" height="1.1" fill="#b5d69b" opacity="0.5"/>
<rect x="267.7" y="966.6" width="1.5" height="1.5" fill="#b5d69b" opacity="0.5"/>
<rect x="186.8" y="934.9" width="1.0" height="1.6" fill="#b5d69b" opacity="0.5"/>
<rect x="216.0" y="969.9" width="1.1" height="1.5" fill="#b5d69b" opacity="0.5"/>
<rect x="69.7" y="909.5" width="1.6" height="1.1" fill="#b5d69b" opacity="0.5"/>
<rect x="236.8" y="888.6" width="1.2" height="1.8" fill="#b5d69b" opacity="0.5"/>
<rect x="120.1" y="962.7" width="0.9" height="1.4" fill="#b5d69b" opacity="0.5"/>
<rect x="295.0" y="954.6" width="1.2" height="1.4" fill="#b5d69b" opacity="0.5"/>
<rect x="264.4" y="946.5" width="1.5" height="1.4" fill="#b5d69b" opacity="0.5"/>
<rect x="135.4" y="940.5" width="1.4" height="1.3" fill="#b5d69b" opacity="0.5"/>
<rect x="341.4" y="879.6" width="1.6" height="1.1" fill="#b5d69b" opacity="0.5"/>
<rect x="268.4" y="966.7" width="1.1" height="1.4" fill="#b5d69b" opacity="0.5"/>
<rect x="212.9" y="918.0" width="1.0" height="1.4" fill="#b5d69b" opacity="0.5"/>
<rect x="315.2" y="936.0" width="1.1" height="1.6" fill="#b5d69b" opacity="0.5"/>
<rect x="182.6" y="880.5" width="1.4" height="1.3" fill="#b5d69b" opacity="0.5"/>
<rect x="213.4" y="971.1" width="1.4" height="1.8" fill="#b5d69b" opacity="0.5"/>
<rect x="163.7" y="946.2" width="0.9" height="1.1" fill="#b5d69b" opacity="0.5"/>
<rect x="258.7" y="938.9" width="1.6" height="1.2" fill="#b5d69b" opacity="0.5"/>
<rect x="141.6" y="903.4" width="1.3" height="0.8" fill="#b5d69b" opacity="0.5"/>
<rect x="169.9" y="935.3" width="0.9" height="1.1" fill="#b5d69b" opacity="0.5"/>
<rect x="309.3" y="964.9" width="1.0" height="1.0" fill="#b5d69b" opacity="0.5"/>
<rect x="98.0" y="874.2" width="1.6" height="1.5" fill="#b5d69b" opacity="0.5"/>
<rect x="139.0" y="917.3" width="1.5" height="0.8" fill="#b5d69b" opacity="0.5"/>
<rect x="294.3" y="957.0" width="1.0" height="1.5" fill="#b5d69b" opacity="0.5"/>
<rect x="260.8" y="901.1" width="1.7" height="1.0" fill="#b5d69b" opacity="0.5"/>
<rect x="197.7" y="898.6" width="1.2" height="1.6" fill="#b5d69b" opacity="0.5"/>
<rect x="224.6" y="930.2" width="1.8" height="1.0" fill="#b5d69b" opacity="0.5"/>
<rect x="127.4" y="931.3" width="1.0" height="1.8" fill="#b5d69b" opacity="0.5"/>
<rect x="160.5" y="912.1" width="1.2" height="1.6" fill="#b5d69b" opacity="0.5"/>
<rect x="321.3" y="937.4" width="1.0" height="1.2" fill="#b5d69b" opacity="0.5"/>
<rect x="262.8" y="888.1" width="1.7" height="1.7" fill="#b5d69b" opacity="0.5"/>
<rect x="128.4" y="904.0" width="1.0" height="1.5" fill="#b5d69b" opacity="0.5"/>
<rect x="78.2" y="939.4" width="0.9" height="1.6" fill="#b5d69b" opacity="0.5"/>
<rect x="217.1" y="927.4" width="0.9" height="0.8" fill="#b5d69b" opacity="0.5"/>
<rect x="163.9" y="970.4" width="1.4" height="1.7" fill="#b5d69b" opacity="0.5"/>
<rect x="82.5" y="875.9" width="0.8" height="1.5" fill="#b5d69b" opacity="0.5"/>
<rect x="114.4" y="894.2" width="1.5" height="1.5" fill="#b5d69b" opacity="0.5"/>
<rect x="155.3" y="915.0" width="1.1" height="1.4" fill="#b5d69b" opacity="0.5"/>
<rect x="164.6" y="903.5" width="1.0" height="1.1" fill="#b5d69b" opacity="0.5"/>
<rect x="138.1" y="866.7" width="1.1" height="1.4" fill="#b5d69b" opacity="0.5"/>
<rect x="140.2" y="877.1" width="1.6" height="1.3" fill="#b5d69b" opacity="0.5"/>
<rect x="208.3" y="898.4" width="1.7" height="1.6" fill="#b5d69b" opacity="0.5"/>
<rect x="239.3" y="935.6" width="1.5" height="1.3" fill="#b5d69b" opacity="0.5"/>
<rect x="180.7" y="906.7" width="1.3" height="1.3" fill="#b5d69b" opacity="0.5"/>
<rect x="213.1" y="922.0" width="1.6" height="1.7" fill="#b5d69b" opacity="0.5"/>
<rect x="127.7" y="867.4" width="1.1" height="0.8" fill="#b5d69b" opacity="0.5"/>
<rect x="288.0" y="931.4" width="1.1" height="1.0" fill="#b5d69b" opacity="0.5"/>
<rect x="308.2" y="954.5" width="1.5" height="1.5" fill="#b5d69b" opacity="0.5"/>
<rect x="273.5" y="913.6" width="1.2" height="1.4" fill="#b5d69b" opacity="0.5"/>
<rect x="311.5" y="971.1" width="1.7" height="1.6" fill="#b5d69b" opacity="0.5"/>
<rect x="85.8" y="891.4" width="1.8" height="1.3" fill="#b5d69b" opacity="0.5"/>
<rect x="209.1" y="898.2" width="1.7" height="1.3" fill="#b5d69b" opacity="0.5"/>
<rect x="342.3" y="873.1" width="1.8" height="0.8" fill="#b5d69b" opacity="0.5"/>
<rect x="106.5" y="906.7" width="1.4" height="0.9" fill="#b5d69b" opacity="0.5"/>
<rect x="222.5" y="965.5" width="1.2" height="1.6" fill="#b5d69b" opacity="0.5"/>
<rect x="230.7" y="927.3" width="1.0" height="1.3" fill="#b5d69b" opacity="0.5"/>
<rect x="317.1" y="937.1" width="1.0" height="1.2" fill="#b5d69b" opacity="0.5"/>
<rect x="217.2" y="901.0" width="1.4" height="1.4" fill="#b5d69b" opacity="0.5"/>
<rect x="70.0" y="888.5" width="1.5" height="1.0" fill="#b5d69b" opacity="0.5"/>
<rect x="85.4" y="946.5" width="1.1" height="1.8" fill="#b5d69b" opacity="0.5"/>
<rect x="221.5" y="875.8" width="1.4" height="1.1" fill="#b5d69b" opacity="0.5"/>
<rect x="293.0" y="942.5" width="1.6" height="0.9" fill="#b5d69b" opacity="0.5"/>
<rect x="74.6" y="950.4" width="0.9" height="1.0" fill="#b5d69b" opacity="0.5"/>
<rect x="73.4" y="882.5" width="1.3" height="1.8" fill="#b5d69b" opacity="0.5"/>
<rect x="155.0" y="892.7" width="1.6" height="1.0" fill="#b5d69b" opacity="0.5"/>
<rect x="242.8" y="930.8" width="1.7" height="0.8" fill="#b5d69b" opacity="0.5"/>
<rect x="222.7" y="906.0" width="1.6" height="1.1" fill="#b5d69b" opacity="0.5"/>
<rect x="265.2" y="884.8" width="1.3" height="1.8" fill="#b5d69b" opacity="0.5"/>
<rect x="132.2" y="894.8" width="1.7" height="1.5" fill="#b5d69b" opacity="0.5"/>
<rect x="83.5" y="885.0" width="1.0" height="1.1" fill="#b5d69b" opacity="0.5"/>
<rect x="301.5" y="940.0" width="1.8" height="1.5" fill="#b5d69b" opacity="0.5"/>
<rect x="240.8" y="906.0" width="1.5" height="1.3" fill="#b5d69b" opacity="0.5"/>
<rect x="81.5" y="917.6" width="1.2" height="1.3" fill="#b5d69b" opacity="0.5"/>
<rect x="78.6" y="868.0" width="1.8" height="1.2" fill="#b5d69b" opacity="0.5"/>
<rect x="157.4" y="880.9" width="1.4" height="1.7" fill="#b5d69b" opacity="0.5"/>
<rect x="115.5" y="918.5" width="1.3" height="1.6" fill="#b5d69b" opacity="0.5"/>
<rect x="223.2" y="890.6" width="1.0" height="1.5" fill="#b5d69b" opacity="0.5"/>
<rect x="86.9" y="957.5" width="0.8" height="1.0" fill="#b5d69b" opacity="0.5"/>
<rect x="196.0" y="955.3" width="1.4" height="1.5" fill="#b5d69b" opacity="0.5"/>
<rect x="278.1" y="942.3" width="0.9" height="1.6" fill="#b5d69b" opacity="0.5"/>
<rect x="106.4" y="882.4" width="0.8" height="0.8" fill="#b5d69b" opacity="0.5"/>
<rect x="310.5" y="905.8" width="0.9" height="0.8" fill="#b5d69b" opacity="0.5"/>
<rect x="302.0" y="929.4" width="1.7" height="0.8" fill="#b5d69b" opacity="0.5"/>
<rect x="96.5" y="895.7" width="1.0" height="0.9" fill="#b5d69b" opacity="0.5"/>
<rect x="121.2" y="933.5" width="1.0" height="1.0" fill="#b5d69b" opacity="0.5"/>
<rect x="214.9" y="905.2" width="0.9" height="1.4" fill="#b5d69b" opacity="0.5"/>
<rect x="207.2" y="906.5" width="1.3" height="0.8" fill="#b5d69b" opacity="0.5"/>
<rect x="237.2" y="885.7" width="1.1" height="0.8" fill="#b5d69b" opacity="0.5"/>
<rect x="313.6" y="927.9" width="1.2" height="1.3" fill="#b5d69b" opacity="0.5"/>
<rect x="328.2" y="879.1" width="1.2" height="1.5" fill="#b5d69b" opacity="0.5"/>
<rect x="169.2" y="940.6" width="1.7" height="0.8" fill="#b5d69b" opacity="0.5"/>
<rect x="144.7" y="896.3" width="1.6" height="1.6" fill="#b5d69b" opacity="0.5"/>
<rect x="260.9" y="963.9" width="1.0" height="1.2" fill="#b5d69b" opacity="0.5"/>
<rect x="303.8" y="946.9" width="0.9" height="1.8" fill="#b5d69b" opacity="0.5"/>
<rect x="272.3" y="957.7" width="1.2" height="1.4" fill="#b5d69b" opacity="0.5"/>
<rect x="333.4" y="961.1" width="1.4" height="1.7" fill="#b5d69b" opacity="0.5"/>
<rect x="344.7" y="954.8" width="1.5" height="1.8" fill="#b5d69b" opacity="0.5"/>
<rect x="105.2" y="908.2" width="1.4" height="0.9" fill="#b5d69b" opacity="0.5"/>
<rect x="283.6" y="871.6" width="1.4" height="1.1" fill="#b5d69b" opacity="0.5"/>
<rect x="155.4" y="929.9" width="1.0" height="1.2" fill="#b5d69b" opacity="0.5"/>
<rect x="305.0" y="970.6" width="1.1" height="1.2" fill="#b5d69b" opacity="0.5"/>
<rect x="259.3" y="885.3" width="1.6" height="1.0" fill="#b5d69b" opacity="0.5"/>
<rect x="220.9" y="901.3" width="0.8" height="0.8" fill="#b5d69b" opacity="0.5"/>
<rect x="65.5" y="900.1" width="1.1" height="1.8" fill="#b5d69b" opacity="0.5"/>
<rect x="243.5" y="872.0" width="1.5" height="1.0" fill="#b5d69b" opacity="0.5"/>
<rect x="199.8" y="942.3" width="1.7" height="1.7" fill="#b5d69b" opacity="0.5"/>
<rect x="182.9" y="899.0" width="1.2" height="1.1" fill="#b5d69b" opacity="0.5"/>
<rect x="272.7" y="914.5" width="1.5" height="1.0" fill="#b5d69b" opacity="0.5"/>
<rect x="284.2" y="968.4" width="1.0" height="1.4" fill="#b5d69b" opacity="0.5"/>
<rect x="110.4" y="868.8" width="1.2" height="1.0" fill="#b5d69b" opacity="0.5"/>
<rect x="269.6" y="926.2" width="1.5" height="1.8" fill="#b5d69b" opacity="0.5"/>
<rect x="81.3" y="875.5" width="0.8" height="1.3" fill="#b5d69b" opacity="0.5"/>
<rect x="295.9" y="938.2" width="1.3" height="1.7" fill="#b5d69b" opacity="0.5"/>
<rect x="169.2" y="877.1" width="1.4" height="0.8" fill="#b5d69b" opacity="0.5"/>
<rect x="129.2" y="868.2" width="1.0" height="0.9" fill="#b5d69b" opacity="0.5"/>
<rect x="213.8" y="878.7" width="1.4" height="1.6" fill="#b5d69b" opacity="0.5"/>
<rect x="161.4" y="877.9" width="1.5" height="1.5" fill="#b5d69b" opacity="0.5"/>
<rect x="312.5" y="924.3" width="1.4" height="1.7" fill="#b5d69b" opacity="0.5"/>
<rect x="254.6" y="969.3" width="1.1" height="1.6" fill="#b5d69b" opacity="0.5"/>
<rect x="242.2" y="915.1" width="0.8" height="1.3" fill="#b5d69b" opacity="0.5"/>
<rect x="138.7" y="929.4" width="1.3" height="1.3" fill="#b5d69b" opacity="0.5"/>
<rect x="81.5" y="879.1" width="1.4" height="1.5" fill="#b5d69b" opacity="0.5"/>
<rect x="342.3" y="949.8" width="1.1" height="1.3" fill="#b5d69b" opacity="0.5"/>
<rect x="206.6" y="951.0" width="1.2" height="1.7" fill="#b5d69b" opacity="0.5"/>
<rect x="200.5" y="907.6" width="1.3" height="1.2" fill="#b5d69b" opacity="0.5"/>
<rect x="344.9" y="870.0" width="1.2" height="0.9" fill="#b5d69b" opacity="0.5"/>
<rect x="254.8" y="881.1" width="0.9" height="1.2" fill="#b5d69b" opacity="0.5"/>
<rect x="233.6" y="946.7" width="1.2" height="1.1" fill="#b5d69b" opacity="0.5"/>
<rect x="168.0" y="960.1" width="1.0" height="0.8" fill="#b5d69b" opacity="0.5"/>
<rect x="313.0" y="916.7" width="0.9" height="0.9" fill="#b5d69b" opacity="0.5"/>
<rect x="314.3" y="945.2" width="0.9" height="1.5" fill="#b5d69b" opacity="0.5"/>
<rect x="124.9" y="912.7" width="1.4" height="0.9" fill="#b5d69b" opacity="0.5"/>
<rect x="326.9" y="900.9" width="0.9" height="1.6" fill="#b5d69b" opacity="0.5"/>
<rect x="95.6" y="869.0" width="1.5" height="1.3" fill="#b5d69b" opacity="0.5"/>
<rect x="317.2" y="949.6" width="1.0" height="0.8" fill="#b5d69b" opacity="0.5"/>
<rect x="234.0" y="915.3" width="1.1" height="1.7" fill="#b5d69b" opacity="0.5"/>
<rect x="123.4" y="933.8" width="0.9" height="1.7" fill="#b5d69b" opacity="0.5"/>
<rect x="330.6" y="931.1" width="1.1" height="1.5" fill="#b5d69b" opacity="0.5"/>
<rect x="318.0" y="950.1" width="0.8" height="1.3" fill="#b5d69b" opacity="0.5"/>
<rect x="104.2" y="923.5" width="1.8" height="1.7" fill="#b5d69b" opacity="0.5"/>
<rect x="134.7" y="924.1" width="1.1" height="1.0" fill="#b5d69b" opacity="0.5"/>
<rect x="273.2" y="946.2" width="1.1" height="1.2" fill="#b5d69b" opacity="0.5"/>
<rect x="260.0" y="942.9" width="1.3" height="0.9" fill="#b5d69b" opacity="0.5"/>
<rect x="91.8" y="883.1" width="1.6" height="1.3" fill="#b5d69b" opacity="0.5"/>
<rect x="245.5" y="904.0" width="1.2" height="1.0" fill="#b5d69b" opacity="0.5"/>
<rect x="337.9" y="929.8" width="0.9" height="1.5" fill="#b5d69b" opacity="0.5"/>
<rect x="232.4" y="930.6" width="1.6" height="1.4" fill="#b5d69b" opacity="0.5"/>
<rect x="310.4" y="968.8" width="1.2" height="1.4" fill="#b5d69b" opacity="0.5"/>
<rect x="169.8" y="908.9" width="1.2" height="1.4" fill="#b5d69b" opacity="0.5"/>
<rect x="163.7" y="902.7" width="1.6" height="1.6" fill="#b5d69b" opacity="0.5"/>
<rect x="254.3" y="955.3" width="1.2" height="1.4" fill="#b5d69b" opacity="0.5"/>
<rect x="135.3" y="898.7" width="0.9" height="1.6" fill="#b5d69b" opacity="0.5"/>
<rect x="323.0" y="897.4" width="1.2" height="0.9" fill="#b5d69b" opacity="0.5"/>
<rect x="104.8" y="933.3" width="1.7" height="0.9" fill="#b5d69b" opacity="0.5"/>
<rect x="136.3" y="946.2" width="1.0" height="1.7" fill="#b5d69b" opacity="0.5"/>
<rect x="163.8" y="915.7" width="1.0" height="1.1" fill="#b5d69b" opacity="0.5"/>
<rect x="183.9" y="894.8" width="1.5" height="0.8" fill="#b5d69b" opacity="0.5"/>
<rect x="243.9" y="950.9" width="1.1" height="1.0" fill="#b5d69b" opacity="0.5"/>
<rect x="98.6" y="873.3" width="1.6" height="1.4" fill="#b5d69b" opacity="0.5"/>
<rect x="69.2" y="913.5" width="1.4" height="1.1" fill="#b5d69b" opacity="0.5"/>
<rect x="74.8" y="910.0" width="1.2" height="1.8" fill="#b5d69b" opacity="0.5"/>
<rect x="165.7" y="963.7" width="1.7" height="1.4" fill="#b5d69b" opacity="0.5"/>
<rect x="100.3" y="951.4" width="0.9" height="1.4" fill="#b5d69b" opacity="0.5"/>
<rect x="92.2" y="874.9" width="1.2" height="1.0" fill="#b5d69b" opacity="0.5"/>
<rect x="342.7" y="926.8" width="1.7" height="1.8" fill="#b5d69b" opacity="0.5"/>
<rect x="277.2" y="934.1" width="1.3" height="1.6" fill="#b5d69b" opacity="0.5"/>
<rect x="252.4" y="881.9" width="1.3" height="1.2" fill="#b5d69b" opacity="0.5"/>
<rect x="209.3" y="941.3" width="1.5" height="1.4" fill="#b5d69b" opacity="0.5"/>
<rect x="285.9" y="953.3" width="0.9" height="0.9" fill="#b5d69b" opacity="0.5"/>
<rect x="78.2" y="882.2" width="1.8" height="1.1" fill="#b5d69b" opacity="0.5"/>
<rect x="187.9" y="914.8" width="1.4" height="1.1" fill="#b5d69b" opacity="0.5"/>
<rect x="283.0" y="900.5" width="1.6" height="1.6" fill="#b5d69b" opacity="0.5"/>
<rect x="65.3" y="923.6" width="0.9" height="1.7" fill="#b5d69b" opacity="0.5"/>
<rect x="84.4" y="893.6" width="1.6" height="1.4" fill="#b5d69b" opacity="0.5"/>
<rect x="251.7" y="909.2" width="1.3" height="1.0" fill="#b5d69b" opacity="0.5"/>
<rect x="194.5" y="892.5" width="1.5" height="0.9" fill="#b5d69b" opacity="0.5"/>
<rect x="103.5" y="886.1" width="1.3" height="1.4" fill="#b5d69b" opacity="0.5"/>
<rect x="65.8" y="970.6" width="1.6" height="1.2" fill="#b5d69b" opacity="0.5"/>
<rect x="109.5" y="953.4" width="1.8" height="1.0" fill="#b5d69b" opacity="0.5"/>
<rect x="276.7" y="952.5" width="1.7" height="1.0" fill="#b5d69b" opacity="0.5"/>
<rect x="98.7" y="882.6" width="1.0" height="1.7" fill="#b5d69b" opacity="0.5"/>
<rect x="319.8" y="915.7" width="0.9" height="1.2" fill="#b5d69b" opacity="0.5"/>
<rect x="132.5" y="934.4" width="1.5" height="1.6" fill="#b5d69b" opacity="0.5"/>
<rect x="187.4" y="913.9" width="1.3" height="1.2" fill="#b5d69b" opacity="0.5"/>
<rect x="192.4" y="938.3" width="1.5" height="1.1" fill="#b5d69b" opacity="0.5"/>
<rect x="223.7" y="880.5" width="0.8" height="1.2" fill="#b5d69b" opacity="0.5"/>
<rect x="165.6" y="868.5" width="0.9" height="1.2" fill="#b5d69b" opacity="0.5"/>
<rect x="328.8" y="954.6" width="0.8" height="1.1" fill="#b5d69b" opacity="0.5"/>
<rect x="168.2" y="898.3" width="0.9" height="1.4" fill="#b5d69b" opacity="0.5"/>
<rect x="299.9" y="905.8" width="1.0" height="0.9" fill="#b5d69b" opacity="0.5"/>
<rect x="69.2" y="946.9" width="1.0" height="1.5" fill="#b5d69b" opacity="0.5"/>
<rect x="286.4" y="873.9" width="1.0" height="1.1" fill="#b5d69b" opacity="0.5"/>
<rect x="280.3" y="943.8" width="1.1" height="1.3" fill="#b5d69b" opacity="0.5"/>
<rect x="164.4" y="915.5" width="1.6" height="1.1" fill="#b5d69b" opacity="0.5"/>
<rect x="291.9" y="963.4" width="1.4" height="1.8" fill="#b5d69b" opacity="0.5"/>
<rect x="327.6" y="883.3" width="1.8" height="1.0" fill="#b5d69b" opacity="0.5"/>
<rect x="290.3" y="878.0" width="1.1" height="1.2" fill="#b5d69b" opacity="0.5"/>
<rect x="300.0" y="937.8" width="1.0" height="1.7" fill="#b5d69b" opacity="0.5"/>
<rect x="307.3" y="919.6" width="0.9" height="1.1" fill="#b5d69b" opacity="0.5"/>
<rect x="146.9" y="909.8" width="1.7" height="1.4" fill="#b5d69b" opacity="0.5"/>
<rect x="294.5" y="872.6" width="1.0" height="1.5" fill="#b5d69b" opacity="0.5"/>
<rect x="160.3" y="889.3" width="0.9" height="0.9" fill="#b5d69b" opacity="0.5"/>
<rect x="180.5" y="923.5" width="1.2" height="1.4" fill="#b5d69b" opacity="0.5"/>
<rect x="146.5" y="866.8" width="1.5" height="1.1" fill="#b5d69b" opacity="0.5"/>
<rect x="202.6" y="905.4" width="1.1" height="0.9" fill="#b5d69b" opacity="0.5"/>
<rect x="148.0" y="896.9" width="0.9" height="0.8" fill="#b5d69b" opacity="0.5"/>
<rect x="199.6" y="867.1" width="1.7" height="1.2" fill="#b5d69b" opacity="0.5"/>
<rect x="189.2" y="921.2" width="0.8" height="0.9" fill="#b5d69b" opacity="0.5"/>
<rect x="284.9" y="924.5" width="1.3" height="1.1" fill="#b5d69b" opacity="0.5"/>
<rect x="275.3" y="918.8" width="1.6" height="1.6" fill="#b5d69b" opacity="0.5"/>
<rect x="315.3" y="942.7" width="1.5" height="1.3" fill="#b5d69b" opacity="0.5"/>
<rect x="214.3" y="927.0" width="1.3" height="1.6" fill="#b5d69b" opacity="0.5"/>
<rect x="305.3" y="870.6" width="1.6" height="1.4" fill="#b5d69b" opacity="0.5"/>
<rect x="232.5" y="962.2" width="0.8" height="1.3" fill="#b5d69b" opacity="0.5"/>
<rect x="170.1" y="966.5" width="1.0" height="1.4" fill="#b5d69b" opacity="0.5"/>
<rect x="105.4" y="945.7" width="1.3" height="1.5" fill="#b5d69b" opacity="0.5"/>
<rect x="151.0" y="959.5" width="0.8" height="1.0" fill="#b5d69b" opacity="0.5"/>
<rect x="270.3" y="959.0" width="1.6" height="1.1" fill="#b5d69b" opacity="0.5"/>
<rect x="87.7" y="940.9" width="1.5" height="0.9" fill="#b5d69b" opacity="0.5"/>
<rect x="326.7" y="921.5" width="0.8" height="1.3" fill="#b5d69b" opacity="0.5"/>
<rect x="159.7" y="876.2" width="1.7" height="1.7" fill="#b5d69b" opacity="0.5"/>
<rect x="99.7" y="912.7" width="1.1" height="1.5" fill="#b5d69b" opacity="0.5"/>
<rect x="95.7" y="900.7" width="1.2" height="1.3" fill="#b5d69b" opacity="0.5"/>
<rect x="186.9" y="928.8" width="1.7" height="1.7" fill="#b5d69b" opacity="0.5"/>
<rect x="319.1" y="953.7" width="1.0" height="1.0" fill="#b5d69b" opacity="0.5"/>
<rect x="193.7" y="933.8" width="1.4" height="1.1" fill="#b5d69b" opacity="0.5"/>
<rect x="342.7" y="898.4" width="0.8" height="0.9" fill="#b5d69b" opacity="0.5"/>
<rect x="123.6" y="943.2" width="1.6" height="0.8" fill="#b5d69b" opacity="0.5"/>
<rect x="131.4" y="890.9" width="1.6" height="1.7" fill="#b5d69b" opacity="0.5"/>
<rect x="138.7" y="876.0" width="1.8" height="1.8" fill="#b5d69b" opacity="0.5"/>
<rect x="265.7" y="915.6" width="1.5" height="1.6" fill="#b5d69b" opacity="0.5"/>
<rect x="207.6" y="894.0" width="1.3" height="1.5" fill="#b5d69b" opacity="0.5"/>
<rect x="155.8" y="933.4" width="0.9" height="1.8" fill="#b5d69b" opacity="0.5"/>
<rect x="124.2" y="889.2" width="1.8" height="1.8" fill="#b5d69b" opacity="0.5"/>
<rect x="324.1" y="955.0" width="1.6" height="1.6" fill="#b5d69b" opacity="0.5"/>
<rect x="223.7" y="872.9" width="1.5" height="1.6" fill="#b5d69b" opacity="0.5"/>
<rect x="299.6" y="869.7" width="0.9" height="1.5" fill="#b5d69b" opacity="0.5"/>
<rect x="201.6" y="960.6" width="1.8" height="1.2" fill="#b5d69b" opacity="0.5"/>
<rect x="254.1" y="936.2" width="1.5" height="1.2" fill="#b5d69b" opacity="0.5"/>
<rect x="244.1" y="872.3" width="1.7" height="1.5" fill="#b5d69b" opacity="0.5"/>
<rect x="289.7" y="914.5" width="1.0" height="1.3" fill="#b5d69b" opacity="0.5"/>
<rect x="255.6" y="923.7" width="0.9" height="0.8" fill="#b5d69b" opacity="0.5"/>
<rect x="176.4" y="891.2" width="1.0" height="1.0" fill="#b5d69b" opacity="0.5"/>
<rect x="181.4" y="939.4" width="1.7" height="1.5" fill="#b5d69b" opacity="0.5"/>
<rect x="70.8" y="957.8" width="1.4" height="1.5" fill="#b5d69b" opacity="0.5"/>
<rect x="236.8" y="902.9" width="1.1" height="0.9" fill="#b5d69b" opacity="0.5"/>
<rect x="250.9" y="870.8" width="1.5" height="1.7" fill="#b5d69b" opacity="0.5"/>
<rect x="252.0" y="929.9" width="1.6" height="1.8" fill="#b5d69b" opacity="0.5"/>
<rect x="292.5" y="970.9" width="1.3" height="0.8" fill="#b5d69b" opacity="0.5"/>
<rect x="237.0" y="933.3" width="1.7" height="1.4" fill="#b5d69b" opacity="0.5"/>
<rect x="166.7" y="865.5" width="1.6" height="1.4" fill="#b5d69b" opacity="0.5"/>
<rect x="340.9" y="928.5" width="1.7" height="1.6" fill="#b5d69b" opacity="0.5"/>
<rect x="342.4" y="914.5" width="1.7" height="1.2" fill="#b5d69b" opacity="0.5"/>
<rect x="68.1" y="899.9" width="1.2" height="1.8" fill="#b5d69b" opacity="0.5"/>
<rect x="175.6" y="894.4" width="1.5" height="0.9" fill="#b5d69b" opacity="0.5"/>
<rect x="150.5" y="907.3" width="0.9" height="1.4" fill="#b5d69b" opacity="0.5"/>
<rect x="183.4" y="950.8" width="1.1" height="1.8" fill="#b5d69b" opacity="0.5"/>
<rect x="119.8" y="921.8" width="1.0" height="0.8" fill="#b5d69b" opacity="0.5"/>
<rect x="149.5" y="960.8" width="1.1" height="1.3" fill="#b5d69b" opacity="0.5"/>
<rect x="211.7" y="893.5" width="1.3" height="0.9" fill="#b5d69b" opacity="0.5"/>
<rect x="162.8" y="895.4" width="1.6" height="1.6" fill="#b5d69b" opacity="0.5"/>
<rect x="261.2" y="928.7" width="1.7" height="1.5" fill="#b5d69b" opacity="0.5"/>
<rect x="80.5" y="879.0" width="1.5" height="1.6" fill="#b5d69b" opacity="0.5"/>
<rect x="342.0" y="948.0" width="1.0" height="1.4" fill="#b5d69b" opacity="0.5"/>
<rect x="239.8" y="929.7" width="0.9" height="1.8" fill="#b5d69b" opacity="0.5"/>
<rect x="207.9" y="893.8" width="1.8" height="1.2" fill="#b5d69b" opacity="0.5"/>
<rect x="84.6" y="936.6" width="1.1" height="1.0" fill="#b5d69b" opacity="0.5"/>
<rect x="149.7" y="930.0" width="1.1" height="1.5" fill="#b5d69b" opacity="0.5"/>
<rect x="318.5" y="971.0" width="1.7" height="1.7" fill="#b5d69b" opacity="0.5"/>
<rect x="135.9" y="953.2" width="0.9" height="1.4" fill="#b5d69b" opacity="0.5"/>
<rect x="86.2" y="875.6" width="1.7" height="0.9" fill="#b5d69b" opacity="0.5"/>
<rect x="265.8" y="921.4" width="0.8" height="1.6" fill="#b5d69b" opacity="0.5"/>
<rect x="82.0" y="959.9" width="1.6" height="1.3" fill="#b5d69b" opacity="0.5"/>
<rect x="190.0" y="868.0" width="1.5" height="0.8" fill="#b5d69b" opacity="0.5"/>
<rect x="212.3" y="964.0" width="1.5" height="0.9" fill="#b5d69b" opacity="0.5"/>
<rect x="266.9" y="940.1" width="1.1" height="1.6" fill="#b5d69b" opacity="0.5"/>
<rect x="227.1" y="909.2" width="1.3" height="1.1" fill="#b5d69b" opacity="0.5"/>
<rect x="145.4" y="960.1" width="1.1" height="1.6" fill="#b5d69b" opacity="0.5"/>
<rect x="167.7" y="885.4" width="0.8" height="1.8" fill="#b5d69b" opacity="0.5"/>
<rect x="275.5" y="970.1" width="1.4" height="0.9" fill="#b5d69b" opacity="0.5"/>
<rect x="110.7" y="870.3" width="1.4" height="1.4" fill="#b5d69b" opacity="0.5"/>
<rect x="332.6" y="896.7" width="1.0" height="1.0" fill="#b5d69b" opacity="0.5"/>
<rect x="106.2" y="868.1" width="1.3" height="1.2" fill="#b5d69b" opacity="0.5"/>
<rect x="168.1" y="966.8" width="1.1" height="1.6" fill="#b5d69b" opacity="0.5"/>
<rect x="214.1" y="876.0" width="0.8" height="1.4" fill="#b5d69b" opacity="0.5"/>
<rect x="309.8" y="870.4" width="1.5" height="1.0" fill="#b5d69b" opacity="0.5"/>
<rect x="257.4" y="954.1" width="1.5" height="1.0" fill="#b5d69b" opacity="0.5"/>
<rect x="108.7" y="968.5" width="1.7" height="1.7" fill="#b5d69b" opacity="0.5"/>
<rect x="216.5" y="870.5" width="1.2" height="1.7" fill="#b5d69b" opacity="0.5"/>
<rect x="83.8" y="896.6" width="0.8" height="1.7" fill="#b5d69b" opacity="0.5"/>
<rect x="164.0" y="873.8" width="1.2" height="1.0" fill="#b5d69b" opacity="0.5"/>
<rect x="186.3" y="930.9" width="1.5" height="0.9" fill="#b5d69b" opacity="0.5"/>
<rect x="214.6" y="871.0" width="1.2" height="1.6" fill="#b5d69b" opacity="0.5"/>
<rect x="138.5" y="953.0" width="1.0" height="1.2" fill="#b5d69b" opacity="0.5"/>
<rect x="286.9" y="865.4" width="1.4" height="1.3" fill="#b5d69b" opacity="0.5"/>
<rect x="265.1" y="966.4" width="1.5" height="1.0" fill="#b5d69b" opacity="0.5"/>
<rect x="120.7" y="916.6" width="1.1" height="1.4" fill="#b5d69b" opacity="0.5"/>
<rect x="90.1" y="939.2" width="1.2" height="0.8" fill="#b5d69b" opacity="0.5"/>
<rect x="98.8" y="965.1" width="1.6" height="1.7" fill="#b5d69b" opacity="0.5"/>
<rect x="174.1" y="970.3" width="1.0" height="1.5" fill="#b5d69b" opacity="0.5"/>
<rect x="328.7" y="887.3" width="0.8" height="0.9" fill="#b5d69b" opacity="0.5"/>
<rect x="88.4" y="951.0" width="1.4" height="1.3" fill="#b5d69b" opacity="0.5"/>
<rect x="97.1" y="933.7" width="0.9" height="0.9" fill="#b5d69b" opacity="0.5"/>
<rect x="231.3" y="933.9" width="1.6" height="1.6" fill="#b5d69b" opacity="0.5"/>
<rect x="103.4" y="897.5" width="0.9" height="1.3" fill="#b5d69b" opacity="0.5"/>
<rect x="72.9" y="957.8" width="1.5" height="1.6" fill="#b5d69b" opacity="0.5"/>
<rect x="201.7" y="962.6" width="1.6" height="1.6" fill="#b5d69b" opacity="0.5"/>
<rect x="290.7" y="888.1" width="1.1" height="0.9" fill="#b5d69b" opacity="0.5"/>
<rect x="279.0" y="915.7" width="1.8" height="1.1" fill="#b5d69b" opacity="0.5"/>
<rect x="185.7" y="957.7" width="1.8" height="1.6" fill="#b5d69b" opacity="0.5"/>
<rect x="312.1" y="963.8" width="1.1" height="1.4" fill="#b5d69b" opacity="0.5"/>
<rect x="82.8" y="937.4" width="1.8" height="1.3" fill="#b5d69b" opacity="0.5"/>
<rect x="105.8" y="925.9" width="0.9" height="1.3" fill="#b5d69b" opacity="0.5"/>
<rect x="87.4" y="909.7" width="1.6" height="1.5" fill="#b5d69b" opacity="0.5"/>
<rect x="304.0" y="913.9" width="1.2" height="0.9" fill="#b5d69b" opacity="0.5"/>
<rect x="285.9" y="926.0" width="1.2" height="0.9" fill="#b5d69b" opacity="0.5"/>
<rect x="193.4" y="871.7" width="0.9" height="0.9" fill="#b5d69b" opacity="0.5"/>
<rect x="184.0" y="879.7" width="1.6" height="1.4" fill="#b5d69b" opacity="0.5"/>
<rect x="307.7" y="924.2" width="1.0" height="1.1" fill="#b5d69b" opacity="0.5"/>
<rect x="300.1" y="927.6" width="1.4" height="1.4" fill="#b5d69b" opacity="0.5"/>
<rect x="78.5" y="886.4" width="1.2" height="1.6" fill="#b5d69b" opacity="0.5"/>
<rect x="329.2" y="928.3" width="1.1" height="0.8" fill="#b5d69b" opacity="0.5"/>
<rect x="221.5" y="908.8" width="1.7" height="1.0" fill="#b5d69b" opacity="0.5"/>
<rect x="122.3" y="866.7" width="0.8" height="1.6" fill="#b5d69b" opacity="0.5"/>
<rect x="308.9" y="881.5" width="0.8" height="1.4" fill="#b5d69b" opacity="0.5"/>
<rect x="134.0" y="930.8" width="1.7" height="1.5" fill="#b5d69b" opacity="0.5"/>
<rect x="143.4" y="929.9" width="1.1" height="1.6" fill="#b5d69b" opacity="0.5"/>
<rect x="137.3" y="958.0" width="1.5" height="1.7" fill="#b5d69b" opacity="0.5"/>
<rect x="161.8" y="967.1" width="1.4" height="1.1" fill="#b5d69b" opacity="0.5"/>
<rect x="246.1" y="898.2" width="0.9" height="0.8" fill="#b5d69b" opacity="0.5"/>
<rect x="235.9" y="890.9" width="0.9" height="1.6" fill="#b5d69b" opacity="0.5"/>
<rect x="104.8" y="945.8" width="1.1" height="1.2" fill="#b5d69b" opacity="0.5"/>
<rect x="326.1" y="953.7" width="1.6" height="1.8" fill="#b5d69b" opacity="0.5"/>
<rect x="234.0" y="965.1" width="1.4" height="1.4" fill="#b5d69b" opacity="0.5"/>
<rect x="155.7" y="905.6" width="1.4" height="1.0" fill="#b5d69b" opacity="0.5"/>
<rect x="244.8" y="957.5" width="1.5" height="1.0" fill="#b5d69b" opacity="0.5"/>
<rect x="72.8" y="904.3" width="1.2" height="1.6" fill="#b5d69b" opacity="0.5"/>
<rect x="218.2" y="920.4" width="1.4" height="1.4" fill="#b5d69b" opacity="0.5"/>
<rect x="254.9" y="924.7" width="1.4" height="1.0" fill="#b5d69b" opacity="0.5"/>
<rect x="99.6" y="912.0" width="1.7" height="1.7" fill="#b5d69b" opacity="0.5"/>
<rect x="147.1" y="926.5" width="1.3" height="1.3" fill="#b5d69b" opacity="0.5"/>
<rect x="114.9" y="949.4" width="0.9" height="1.0" fill="#b5d69b" opacity="0.5"/>
<rect x="143.0" y="886.7" width="1.0" height="0.9" fill="#b5d69b" opacity="0.5"/>
<rect x="211.6" y="883.4" width="1.4" height="1.4" fill="#b5d69b" opacity="0.5"/>
<rect x="239.9" y="916.4" width="1.4" height="1.1" fill="#b5d69b" opacity="0.5"/>
<rect x="194.9" y="938.7" width="1.0" height="1.5" fill="#b5d69b" opacity="0.5"/>
<rect x="228.9" y="969.3" width="1.4" height="1.3" fill="#b5d69b" opacity="0.5"/>
<rect x="280.1" y="895.9" width="1.2" height="1.2" fill="#b5d69b" opacity="0.5"/>
<rect x="270.7" y="942.0" width="1.0" height="1.8" fill="#b5d69b" opacity="0.5"/>
<rect x="340.0" y="918.0" width="1.8" height="1.4" fill="#b5d69b" opacity="0.5"/>
<rect x="172.7" y="874.3" width="0.8" height="1.4" fill="#b5d69b" opacity="0.5"/>
<rect x="266.2" y="930.9" width="1.6" height="1.2" fill="#b5d69b" opacity="0.5"/>
<rect x="272.8" y="929.6" width="1.4" height="1.3" fill="#b5d69b" opacity="0.5"/>
<rect x="251.8" y="924.9" width="0.9" height="1.5" fill="#b5d69b" opacity="0.5"/>
<rect x="262.0" y="910.8" width="1.8" height="1.3" fill="#b5d69b" opacity="0.5"/>
<rect x="111.6" y="919.7" width="1.2" height="1.0" fill="#b5d69b" opacity="0.5"/>
<rect x="313.8" y="884.0" width="1.5" height="1.0" fill="#b5d69b" opacity="0.5"/>
<rect x="209.8" y="971.7" width="0.9" height="1.7" fill="#b5d69b" opacity="0.5"/>
<rect x="66.7" y="969.6" width="1.7" height="1.2" fill="#b5d69b" opacity="0.5"/>
<rect x="243.6" y="914.2" width="1.0" height="1.2" fill="#b5d69b" opacity="0.5"/>
<rect x="188.5" y="958.1" width="0.9" height="1.3" fill="#b5d69b" opacity="0.5"/>
<rect x="197.0" y="924.2" width="1.6" height="1.4" fill="#b5d69b" opacity="0.5"/>
<rect x="155.5" y="967.2" width="1.4" height="1.1" fill="#b5d69b" opacity="0.5"/>
<rect x="218.3" y="957.8" width="0.8" height="1.4" fill="#b5d69b" opacity="0.5"/>
<rect x="201.5" y="895.8" width="1.0" height="1.0" fill="#b5d69b" opacity="0.5"/>
<rect x="187.5" y="910.1" width="1.4" height="1.1" fill="#b5d69b" opacity="0.5"/>
<rect x="238.6" y="915.7" width="1.6" height="1.6" fill="#b5d69b" opacity="0.5"/>
<rect x="131.4" y="969.5" width="1.3" height="1.1" fill="#b5d69b" opacity="0.5"/>
<rect x="136.3" y="941.3" width="1.2" height="1.5" fill="#b5d69b" opacity="0.5"/>
<rect x="136.7" y="957.0" width="1.1" height="1.7" fill="#b5d69b" opacity="0.5"/>
<rect x="187.8" y="907.9" width="1.4" height="1.3" fill="#b5d69b" opacity="0.5"/>
<rect x="218.4" y="925.0" width="1.7" height="1.5" fill="#b5d69b" opacity="0.5"/>
<rect x="90.9" y="970.7" width="0.8" height="0.9" fill="#b5d69b" opacity="0.5"/>
<rect x="294.2" y="894.5" width="0.8" height="1.0" fill="#b5d69b" opacity="0.5"/>
<rect x="203.7" y="955.3" width="0.8" height="1.0" fill="#b5d69b" opacity="0.5"/>
<rect x="68.6" y="870.7" width="1.1" height="1.3" fill="#b5d69b" opacity="0.5"/>
<rect x="336.2" y="934.4" width="1.7" height="1.4" fill="#b5d69b" opacity="0.5"/>
<rect x="319.9" y="937.0" width="1.0" height="1.2" fill="#b5d69b" opacity="0.5"/>
<rect x="199.3" y="876.8" width="1.7" height="1.3" fill="#b5d69b" opacity="0.5"/>
<rect x="121.1" y="917.6" width="1.6" height="1.1" fill="#b5d69b" opacity="0.5"/>
<rect x="229.5" y="874.8" width="1.0" height="1.0" fill="#b5d69b" opacity="0.5"/>
<rect x="206.5" y="938.6" width="1.0" height="1.5" fill="#b5d69b" opacity="0.5"/>
<rect x="229.1" y="945.3" width="1.8" height="1.1" fill="#b5d69b" opacity="0.5"/>
<rect x="344.0" y="913.7" width="1.3" height="1.0" fill="#b5d69b" opacity="0.5"/>
<rect x="88.8" y="934.1" width="0.9" height="0.8" fill="#b5d69b" opacity="0.5"/>
<rect x="88.6" y="923.0" width="1.0" height="1.1" fill="#b5d69b" opacity="0.5"/>
<rect x="279.8" y="912.8" width="0.9" height="1.5" fill="#b5d69b" opacity="0.5"/>
<rect x="343.5" y="931.6" width="1.2" height="1.3" fill="#b5d69b" opacity="0.5"/>
<rect x="261.8" y="954.7" width="1.6" height="1.0" fill="#b5d69b" opacity="0.5"/>
<rect x="283.4" y="876.1" width="0.9" height="1.3" fill="#b5d69b" opacity="0.5"/>
<rect x="116.7" y="925.1" width="1.1" height="1.7" fill="#b5d69b" opacity="0.5"/>
<rect x="186.3" y="952.3" width="1.7" height="1.3" fill="#b5d69b" opacity="0.5"/>
<rect x="280.2" y="917.7" width="1.2" height="0.9" fill="#b5d69b" opacity="0.5"/>
<rect x="249.4" y="963.6" width="1.5" height="1.1" fill="#b5d69b" opacity="0.5"/>
<rect x="212.0" y="903.1" width="1.2" height="1.6" fill="#b5d69b" opacity="0.5"/>
<rect x="66.9" y="916.5" width="1.3" height="0.9" fill="#b5d69b" opacity="0.5"/>
<rect x="270.0" y="892.1" width="1.2" height="1.0" fill="#b5d69b" opacity="0.5"/>
<rect x="232.3" y="911.1" width="1.5" height="1.2" fill="#b5d69b" opacity="0.5"/>
<rect x="284.4" y="924.0" width="0.9" height="1.3" fill="#b5d69b" opacity="0.5"/>
<rect x="135.8" y="896.9" width="1.7" height="1.3" fill="#b5d69b" opacity="0.5"/>
<rect x="271.9" y="881.7" width="1.4" height="0.9" fill="#b5d69b" opacity="0.5"/>
<rect x="127.0" y="878.6" width="0.8" height="1.7" fill="#b5d69b" opacity="0.5"/>
<rect x="335.1" y="904.4" width="0.8" height="1.5" fill="#b5d69b" opacity="0.5"/>
<rect x="250.6" y="869.9" width="1.6" height="0.9" fill="#b5d69b" opacity="0.5"/>
<rect x="130.3" y="948.3" width="1.6" height="1.0" fill="#b5d69b" opacity="0.5"/>
<rect x="207.3" y="950.6" width="1.4" height="1.3" fill="#b5d69b" opacity="0.5"/>
<rect x="116.8" y="872.3" width="1.0" height="1.3" fill="#b5d69b" opacity="0.5"/>
<rect x="231.9" y="914.3" width="1.4" height="1.4" fill="#b5d69b" opacity="0.5"/>
<rect x="245.8" y="909.0" width="1.6" height="1.3" fill="#b5d69b" opacity="0.5"/>
<rect x="311.5" y="970.5" width="1.6" height="1.6" fill="#b5d69b" opacity="0.5"/>
<rect x="258.2" y="924.1" width="1.0" height="0.9" fill="#b5d69b" opacity="0.5"/>
<rect x="250.1" y="891.6" width="1.4" height="1.3" fill="#b5d69b" opacity="0.5"/>
<rect x="235.0" y="910.9" width="1.0" height="1.1" fill="#b5d69b" opacity="0.5"/>
<rect x="260.1" y="959.8" width="1.1" height="1.1" fill="#b5d69b" opacity="0.5"/>
<rect x="190.4" y="910.9" width="1.4" height="1.6" fill="#b5d69b" opacity="0.5"/>
<rect x="280.0" y="951.6" width="1.5" height="1.8" fill="#b5d69b" opacity="0.5"/>
<rect x="190.6" y="912.8" width="1.5" height="1.1" fill="#b5d69b" opacity="0.5"/>
<rect x="297.2" y="909.7" width="1.4" height="1.3" fill="#b5d69b" opacity="0.5"/>
<rect x="167.0" y="866.1" width="1.1" height="1.3" fill="#b5d69b" opacity="0.5"/>
<rect x="331.3" y="879.7" width="1.7" height="1.8" fill="#b5d69b" opacity="0.5"/>
<rect x="286.5" y="894.9" width="0.8" height="1.7" fill="#b5d69b" opacity="0.5"/>
<rect x="84.2" y="896.9" width="1.7" height="1.5" fill="#b5d69b" opacity="0.5"/>
<rect x="295.6" y="954.2" width="1.0" height="1.3" fill="#b5d69b" opacity="0.5"/>
<rect x="91.5" y="905.5" width="1.3" height="1.6" fill="#b5d69b" opacity="0.5"/>
<rect x="146.0" y="936.3" width="0.9" height="1.1" fill="#b5d69b" opacity="0.5"/>
<rect x="81.4" y="927.1" width="1.4" height="1.5" fill="#b5d69b" opacity="0.5"/>
<rect x="182.5" y="965.2" width="1.5" height="1.4" fill="#b5d69b" opacity="0.5"/>
<rect x="309.6" y="884.2" width="1.1" height="1.4" fill="#b5d69b" opacity="0.5"/>
<rect x="232.8" y="967.2" width="1.5" height="0.8" fill="#b5d69b" opacity="0.5"/>
<rect x="329.4" y="915.0" width="1.0" height="1.6" fill="#b5d69b" opacity="0.5"/>
<rect x="240.9" y="956.4" width="1.4" height="1.1" fill="#b5d69b" opacity="0.5"/>
<rect x="196.7" y="914.9" width="1.2" height="1.4" fill="#b5d69b" opacity="0.5"/>
<rect x="106.8" y="892.1" width="0.9" height="0.8" fill="#b5d69b" opacity="0.5"/>
<rect x="212.1" y="943.9" width="1.2" height="1.7" fill="#b5d69b" opacity="0.5"/>
<rect x="235.4" y="935.5" width="1.1" height="1.7" fill="#b5d69b" opacity="0.5"/>
<rect x="162.4" y="955.4" width="1.0" height="1.8" fill="#b5d69b" opacity="0.5"/>
<rect x="256.3" y="884.1" width="1.5" height="1.0" fill="#b5d69b" opacity="0.5"/>
<rect x="172.9" y="905.5" width="1.1" height="1.2" fill="#b5d69b" opacity="0.5"/>
<rect x="110.0" y="907.8" width="0.9" height="1.6" fill="#b5d69b" opacity="0.5"/>
<rect x="164.1" y="941.2" width="1.2" height="1.8" fill="#b5d69b" opacity="0.5"/>
<rect x="311.3" y="940.5" width="1.6" height="1.7" fill="#b5d69b" opacity="0.5"/>
<rect x="325.5" y="909.2" width="1.4" height="0.9" fill="#b5d69b" opacity="0.5"/>
<rect x="167.0" y="900.1" width="1.4" height="0.8" fill="#b5d69b" opacity="0.5"/>
<rect x="276.2" y="873.0" width="1.2" height="1.3" fill="#b5d69b" opacity="0.5"/>
<rect x="300.7" y="932.7" width="0.9" height="1.5" fill="#b5d69b" opacity="0.5"/>
<rect x="130.8" y="931.0" width="1.2" height="1.8" fill="#b5d69b" opacity="0.5"/>
<rect x="190.7" y="894.1" width="1.1" height="1.8" fill="#b5d69b" opacity="0.5"/>
<rect x="162.6" y="891.0" width="1.3" height="1.5" fill="#b5d69b" opacity="0.5"/>
<rect x="328.4" y="873.5" width="1.1" height="1.5" fill="#b5d69b" opacity="0.5"/>
<rect x="203.7" y="939.0" width="1.5" height="0.9" fill="#b5d69b" opacity="0.5"/>
<rect x="79.1" y="884.0" width="1.1" height="1.0" fill="#b5d69b" opacity="0.5"/>
<rect x="145.3" y="877.2" width="0.8" height="1.3" fill="#b5d69b" opacity="0.5"/>
<rect x="277.2" y="882.1" width="0.9" height="1.5" fill="#b5d69b" opacity="0.5"/>
<rect x="87.2" y="880.0" width="1.3" height="1.1" fill="#b5d69b" opacity="0.5"/>
<rect x="284.8" y="919.2" width="1.3" height="1.2" fill="#b5d69b" opacity="0.5"/>
<rect x="72.8" y="952.8" width="1.2" height="1.6" fill="#b5d69b" opacity="0.5"/>
<rect x="94.7" y="911.2" width="1.3" height="1.0" fill="#b5d69b" opacity="0.5"/>
<rect x="85.8" y="965.1" width="1.7" height="1.8" fill="#b5d69b" opacity="0.5"/>
<rect x="217.4" y="943.4" width="1.4" height="1.3" fill="#b5d69b" opacity="0.5"/>
<rect x="113.1" y="933.7" width="1.2" height="1.5" fill="#b5d69b" opacity="0.5"/>
<rect x="76.8" y="896.5" width="0.9" height="1.6" fill="#b5d69b" opacity="0.5"/>
<rect x="199.1" y="895.6" width="1.6" height="1.3" fill="#b5d69b" opacity="0.5"/>
<rect x="146.3" y="907.0" width="0.8" height="0.9" fill="#b5d69b" opacity="0.5"/>
<rect x="75.3" y="967.9" width="1.7" height="1.3" fill="#b5d69b" opacity="0.5"/>
<rect x="328.5" y="922.7" width="1.5" height="0.9" fill="#b5d69b" opacity="0.5"/>
<rect x="187.2" y="930.4" width="1.2" height="1.5" fill="#b5d69b" opacity="0.5"/>
<rect x="161.1" y="935.1" width="1.0" height="1.3" fill="#b5d69b" opacity="0.5"/>
<rect x="184.8" y="921.3" width="0.9" height="1.0" fill="#b5d69b" opacity="0.5"/>
<rect x="265.4" y="882.8" width="1.3" height="1.8" fill="#b5d69b" opacity="0.5"/>
<rect x="235.7" y="943.5" width="1.6" height="1.8" fill="#b5d69b" opacity="0.5"/>
<rect x="173.5" y="907.3" width="1.6" height="0.8" fill="#b5d69b" opacity="0.5"/>
<rect x="196.2" y="894.0" width="1.4" height="1.5" fill="#b5d69b" opacity="0.5"/>
<rect x="306.1" y="919.2" width="1.5" height="0.9" fill="#b5d69b" opacity="0.5"/>
<rect x="249.7" y="964.5" width="1.4" height="1.3" fill="#b5d69b" opacity="0.5"/>
<rect x="208.1" y="909.1" width="1.0" height="1.0" fill="#b5d69b" opacity="0.5"/>
<rect x="287.5" y="920.2" width="0.8" height="1.4" fill="#b5d69b" opacity="0.5"/>
<rect x="297.6" y="934.7" width="1.0" height="1.8" fill="#b5d69b" opacity="0.5"/>
<rect x="115.9" y="919.4" width="1.3" height="1.0" fill="#b5d69b" opacity="0.5"/>
<rect x="139.7" y="884.9" width="1.0" height="0.8" fill="#b5d69b" opacity="0.5"/>
<rect x="245.8" y="936.3" width="1.1" height="1.8" fill="#b5d69b" opacity="0.5"/>
<rect x="183.5" y="913.8" width="1.7" height="1.4" fill="#b5d69b" opacity="0.5"/>
<rect x="195.4" y="944.9" width="1.5" height="1.1" fill="#b5d69b" opacity="0.5"/>
<rect x="84.5" y="943.3" width="1.5" height="1.4" fill="#b5d69b" opacity="0.5"/>
<rect x="97.8" y="944.6" width="1.0" height="1.6" fill="#b5d69b" opacity="0.5"/>
<rect x="239.1" y="933.1" width="0.9" height="1.2" fill="#b5d69b" opacity="0.5"/>
<rect x="270.2" y="876.9" width="0.8" height="1.2" fill="#b5d69b" opacity="0.5"/>
<rect x="303.7" y="932.4" width="1.0" height="0.9" fill="#b5d69b" opacity="0.5"/>
<rect x="299.3" y="955.2" width="1.5" height="1.0" fill="#b5d69b" opacity="0.5"/>
<rect x="275.2" y="866.1" width="1.0" height="1.1" fill="#b5d69b" opacity="0.5"/>
<rect x="332.9" y="868.8" width="1.0" height="1.5" fill="#b5d69b" opacity="0.5"/>
<rect x="278.4" y="893.7" width="0.9" height="1.7" fill="#b5d69b" opacity="0.5"/>
<rect x="336.7" y="962.2" width="1.4" height="0.9" fill="#b5d69b" opacity="0.5"/>
<rect x="272.2" y="934.5" width="1.6" height="1.6" fill="#b5d69b" opacity="0.5"/>
<rect x="205.8" y="969.5" width="1.3" height="1.2" fill="#b5d69b" opacity="0.5"/>
<rect x="243.4" y="949.3" width="1.4" height="1.7" fill="#b5d69b" opacity="0.5"/>
<rect x="141.0" y="960.9" width="1.7" height="1.1" fill="#b5d69b" opacity="0.5"/>
<rect x="73.0" y="929.3" width="1.4" height="1.8" fill="#b5d69b" opacity="0.5"/>
<rect x="221.3" y="942.5" width="1.6" height="1.0" fill="#b5d69b" opacity="0.5"/>
<rect x="251.7" y="911.9" width="1.0" height="1.1" fill="#b5d69b" opacity="0.5"/>
<rect x="166.6" y="943.6" width="1.4" height="1.1" fill="#b5d69b" opacity="0.5"/>
<rect x="80.5" y="949.3" width="1.6" height="1.6" fill="#b5d69b" opacity="0.5"/>
<rect x="285.2" y="871.8" width="1.1" height="1.3" fill="#b5d69b" opacity="0.5"/>
<rect x="148.2" y="953.2" width="1.0" height="0.8" fill="#b5d69b" opacity="0.5"/>
<rect x="191.3" y="870.4" width="0.8" height="1.4" fill="#b5d69b" opacity="0.5"/>
<rect x="234.2" y="923.0" width="0.9" height="1.4" fill="#b5d69b" opacity="0.5"/>
<rect x="211.4" y="897.6" width="1.0" height="1.0" fill="#b5d69b" opacity="0.5"/>
<rect x="200.3" y="904.3" width="1.4" height="1.5" fill="#b5d69b" opacity="0.5"/>
<rect x="142.3" y="930.0" width="1.1" height="1.5" fill="#b5d69b" opacity="0.5"/>
<rect x="122.1" y="928.6" width="1.5" height="1.6" fill="#b5d69b" opacity="0.5"/>
<rect x="213.6" y="962.6" width="1.8" height="1.6" fill="#b5d69b" opacity="0.5"/>
<rect x="165.4" y="893.5" width="1.4" height="0.9" fill="#b5d69b" opacity="0.5"/>
<rect x="114.5" y="875.1" width="1.5" height="1.2" fill="#b5d69b" opacity="0.5"/>
<rect x="323.0" y="951.3" width="1.3" height="1.1" fill="#b5d69b" opacity="0.5"/>
<rect x="154.7" y="870.6" width="0.9" height="1.7" fill="#b5d69b" opacity="0.5"/>
<rect x="148.5" y="865.9" width="1.8" height="1.2" fill="#b5d69b" opacity="0.5"/>
<rect x="281.9" y="913.5" width="1.8" height="0.9" fill="#b5d69b" opacity="0.5"/>
<rect x="197.5" y="934.3" width="0.8" height="1.7" fill="#b5d69b" opacity="0.5"/>
<rect x="159.7" y="937.5" width="0.9" height="0.9" fill="#b5d69b" opacity="0.5"/>
<rect x="89.2" y="949.4" width="1.7" height="1.7" fill="#b5d69b" opacity="0.5"/>
<rect x="213.6" y="874.8" width="1.6" height="1.3" fill="#b5d69b" opacity="0.5"/>
<rect x="284.1" y="932.9" width="1.4" height="1.0" fill="#b5d69b" opacity="0.5"/>
<rect x="105.0" y="873.7" width="1.2" height="1.1" fill="#b5d69b" opacity="0.5"/>
<rect x="332.2" y="870.2" width="1.6" height="0.9" fill="#b5d69b" opacity="0.5"/>
<rect x="93.9" y="963.7" width="1.0" height="1.4" fill="#b5d69b" opacity="0.5"/>
<rect x="228.8" y="907.7" width="1.1" height="0.9" fill="#b5d69b" opacity="0.5"/>
<rect x="259.8" y="904.8" width="1.4" height="1.6" fill="#b5d69b" opacity="0.5"/>
<rect x="86.3" y="910.3" width="1.2" height="1.7" fill="#b5d69b" opacity="0.5"/>
<rect x="238.9" y="886.1" width="1.3" height="0.8" fill="#b5d69b" opacity="0.5"/>
<rect x="209.0" y="872.5" width="0.9" height="1.3" fill="#b5d69b" opacity="0.5"/>
<rect x="215.6" y="887.8" width="1.4" height="1.1" fill="#b5d69b" opacity="0.5"/>
<rect x="261.8" y="870.6" width="1.6" height="1.2" fill="#b5d69b" opacity="0.5"/>
<rect x="113.4" y="896.1" width="1.4" height="0.9" fill="#b5d69b" opacity="0.5"/>
<rect x="320.4" y="888.7" width="1.2" height="0.9" fill="#b5d69b" opacity="0.5"/>
<rect x="192.7" y="967.9" width="1.0" height="1.0" fill="#b5d69b" opacity="0.5"/>
<rect x="218.1" y="933.5" width="0.9" height="1.0" fill="#b5d69b" opacity="0.5"/>
<rect x="234.2" y="890.6" width="0.8" height="1.5" fill="#b5d69b" opacity="0.5"/>
<rect x="308.2" y="951.3" width="1.7" height="1.0" fill="#b5d69b" opacity="0.5"/>
<rect x="151.8" y="929.2" width="1.4" height="1.4" fill="#b5d69b" opacity="0.5"/>
<rect x="219.9" y="890.0" width="1.0" height="0.9" fill="#b5d69b" opacity="0.5"/>
<rect x="81.1" y="927.2" width="0.9" height="1.7" fill="#b5d69b" opacity="0.5"/>
<rect x="333.5" y="880.7" width="1.8" height="1.4" fill="#b5d69b" opacity="0.5"/>
<rect x="66.6" y="906.0" width="1.2" height="1.1" fill="#b5d69b" opacity="0.5"/>
<rect x="83.8" y="891.0" width="0.8" height="1.2" fill="#b5d69b" opacity="0.5"/>
<rect x="199.9" y="889.8" width="1.7" height="1.7" fill="#b5d69b" opacity="0.5"/>
<rect x="204.9" y="950.8" width="1.2" height="1.6" fill="#b5d69b" opacity="0.5"/>
<rect x="282.8" y="902.7" width="1.5" height="1.2" fill="#b5d69b" opacity="0.5"/>
<rect x="113.5" y="909.8" width="0.9" height="1.5" fill="#b5d69b" opacity="0.5"/>
<rect x="135.5" y="918.2" width="1.6" height="1.4" fill="#b5d69b" opacity="0.5"/>
<rect x="319.5" y="942.7" width="1.5" height="1.5" fill="#b5d69b" opacity="0.5"/>
<rect x="258.4" y="963.3" width="1.4" height="1.5" fill="#b5d69b" opacity="0.5"/>
<rect x="219.0" y="922.1" width="1.7" height="1.1" fill="#b5d69b" opacity="0.5"/>
<rect x="118.2" y="918.6" width="1.1" height="1.5" fill="#b5d69b" opacity="0.5"/>
<rect x="243.1" y="865.2" width="1.0" height="1.4" fill="#b5d69b" opacity="0.5"/>
<rect x="175.9" y="937.8" width="1.3" height="0.9" fill="#b5d69b" opacity="0.5"/>
<rect x="258.1" y="969.2" width="0.9" height="1.4" fill="#b5d69b" opacity="0.5"/>
<rect x="236.8" y="930.6" width="1.3" height="1.3" fill="#b5d69b" opacity="0.5"/>
<rect x="342.0" y="958.3" width="1.2" height="1.6" fill="#b5d69b" opacity="0.5"/>
<rect x="251.9" y="951.2" width="1.8" height="0.9" fill="#b5d69b" opacity="0.5"/>
<rect x="124.4" y="889.8" width="1.6" height="1.7" fill="#b5d69b" opacity="0.5"/>
<rect x="128.4" y="916.9" width="1.7" height="1.5" fill="#b5d69b" opacity="0.5"/>
<rect x="229.3" y="960.6" width="1.7" height="0.9" fill="#b5d69b" opacity="0.5"/>
<rect x="335.4" y="896.2" width="1.4" height="1.6" fill="#b5d69b" opacity="0.5"/>
<rect x="147.3" y="897.8" width="1.7" height="1.6" fill="#b5d69b" opacity="0.5"/>
<rect x="338.4" y="875.0" width="1.4" height="1.5" fill="#b5d69b" opacity="0.5"/>
<rect x="332.8" y="942.6" width="1.1" height="0.9" fill="#b5d69b" opacity="0.5"/>
<rect x="113.5" y="892.7" width="1.4" height="1.1" fill="#b5d69b" opacity="0.5"/>
<rect x="106.6" y="874.3" width="1.5" height="1.6" fill="#b5d69b" opacity="0.5"/>
<rect x="99.6" y="920.0" width="1.8" height="1.2" fill="#b5d69b" opacity="0.5"/>
<rect x="214.7" y="951.8" width="0.8" height="1.7" fill="#b5d69b" opacity="0.5"/>
<rect x="281.8" y="943.8" width="1.1" height="1.3" fill="#b5d69b" opacity="0.5"/>
<rect x="328.4" y="871.6" width="0.9" height="1.4" fill="#b5d69b" opacity="0.5"/>
<rect x="331.7" y="881.0" width="1.0" height="1.3" fill="#b5d69b" opacity="0.5"/>
<rect x="285.9" y="925.3" width="1.5" height="0.9" fill="#b5d69b" opacity="0.5"/>
<rect x="120.8" y="927.7" width="1.5" height="0.9" fill="#b5d69b" opacity="0.5"/>
<rect x="90.4" y="898.6" width="1.2" height="1.1" fill="#b5d69b" opacity="0.5"/>
<rect x="112.7" y="872.9" width="1.4" height="1.8" fill="#b5d69b" opacity="0.5"/>
<rect x="242.5" y="963.4" width="0.9" height="1.4" fill="#b5d69b" opacity="0.5"/>
<rect x="167.2" y="955.6" width="1.4" height="1.4" fill="#b5d69b" opacity="0.5"/>
<rect x="321.1" y="967.3" width="0.9" height="1.2" fill="#b5d69b" opacity="0.5"/>
<rect x="88.9" y="925.0" width="1.0" height="1.5" fill="#b5d69b" opacity="0.5"/>
<rect x="164.5" y="865.8" width="1.7" height="0.9" fill="#b5d69b" opacity="0.5"/>
<rect x="140.2" y="920.7" width="0.9" height="1.6" fill="#b5d69b" opacity="0.5"/>
<rect x="265.6" y="877.6" width="1.4" height="0.9" fill="#b5d69b" opacity="0.5"/>
<rect x="213.5" y="875.0" width="1.1" height="1.3" fill="#b5d69b" opacity="0.5"/>
<rect x="217.5" y="935.0" width="1.7" height="1.1" fill="#b5d69b" opacity="0.5"/>
<rect x="163.0" y="887.4" width="1.5" height="1.2" fill="#b5d69b" opacity="0.5"/>
<rect x="124.3" y="885.6" width="1.2" height="1.6" fill="#b5d69b" opacity="0.5"/>
<rect x="187.6" y="952.1" width="1.3" height="1.4" fill="#b5d69b" opacity="0.5"/>
<rect x="136.5" y="908.8" width="1.5" height="0.9" fill="#b5d69b" opacity="0.5"/>
<rect x="192.1" y="892.1" width="1.1" height="1.1" fill="#b5d69b" opacity="0.5"/>
<rect x="120.5" y="926.7" width="0.8" height="1.0" fill="#b5d69b" opacity="0.5"/>
<rect x="138.8" y="884.4" width="1.6" height="1.5" fill="#b5d69b" opacity="0.5"/>
<rect x="313.6" y="879.2" width="1.0" height="1.1" fill="#b5d69b" opacity="0.5"/>
<rect x="207.4" y="954.2" width="1.6" height="1.7" fill="#b5d69b" opacity="0.5"/>
<rect x="69.9" y="867.9" width="1.1" height="1.2" fill="#b5d69b" opacity="0.5"/>
<rect x="66.8" y="902.5" width="0.9" height="1.7" fill="#b5d69b" opacity="0.5"/>
<rect x="123.9" y="899.1" width="1.0" height="1.6" fill="#b5d69b" opacity="0.5"/>
<rect x="96.5" y="912.0" width="1.0" height="1.0" fill="#b5d69b" opacity="0.5"/>
<rect x="343.5" y="941.4" width="1.5" height="1.2" fill="#b5d69b" opacity="0.5"/>
<rect x="338.7" y="968.3" width="1.4" height="1.0" fill="#b5d69b" opacity="0.5"/>
<rect x="78.6" y="923.3" width="1.3" height="1.7" fill="#b5d69b" opacity="0.5"/>
<rect x="344.5" y="952.4" width="1.0" height="1.8" fill="#b5d69b" opacity="0.5"/>
<rect x="236.5" y="869.1" width="1.0" height="1.8" fill="#b5d69b" opacity="0.5"/>
<rect x="287.8" y="944.2" width="1.5" height="0.8" fill="#b5d69b" opacity="0.5"/>
<rect x="327.3" y="896.9" width="1.6" height="1.3" fill="#b5d69b" opacity="0.5"/>
<rect x="201.7" y="921.3" width="1.7" height="1.6" fill="#b5d69b" opacity="0.5"/>
<rect x="175.4" y="956.2" width="1.0" height="1.1" fill="#b5d69b" opacity="0.5"/>
<rect x="154.8" y="870.0" width="1.2" height="0.8" fill="#b5d69b" opacity="0.5"/>
<rect x="336.2" y="952.5" width="1.3" height="0.9" fill="#b5d69b" opacity="0.5"/>
<rect x="138.7" y="947.7" width="1.1" height="0.9" fill="#b5d69b" opacity="0.5"/>
<rect x="184.6" y="926.9" width="0.9" height="1.2" fill="#b5d69b" opacity="0.5"/>
<rect x="220.9" y="944.7" width="1.2" height="1.8" fill="#b5d69b" opacity="0.5"/>
<rect x="136.6" y="945.3" width="0.9" height="1.7" fill="#b5d69b" opacity="0.5"/>
<rect x="217.6" y="883.5" width="1.6" height="1.7" fill="#b5d69b" opacity="0.5"/>
<rect x="101.4" y="959.4" width="1.8" height="1.2" fill="#b5d69b" opacity="0.5"/>
<rect x="286.3" y="942.1" width="1.4" height="1.2" fill="#b5d69b" opacity="0.5"/>
<rect x="152.6" y="952.3" width="1.6" height="1.7" fill="#b5d69b" opacity="0.5"/>
<rect x="84.1" y="926.0" width="1.5" height="1.0" fill="#b5d69b" opacity="0.5"/>
<rect x="70.9" y="960.6" width="1.6" height="1.5" fill="#b5d69b" opacity="0.5"/>
<rect x="158.1" y="911.9" width="1.6" height="0.9" fill="#b5d69b" opacity="0.5"/>
<rect x="267.4" y="940.7" width="1.3" height="1.8" fill="#b5d69b" opacity="0.5"/>
<rect x="241.8" y="959.6" width="1.0" height="1.2" fill="#b5d69b" opacity="0.5"/>
<rect x="146.8" y="918.3" width="1.6" height="1.8" fill="#b5d69b" opacity="0.5"/>
<rect x="319.9" y="956.3" width="1.8" height="1.5" fill="#b5d69b" opacity="0.5"/>
<rect x="271.4" y="874.7" width="1.2" height="1.3" fill="#b5d69b" opacity="0.5"/>
<rect x="94.5" y="961.5" width="1.2" height="1.0" fill="#b5d69b" opacity="0.5"/>
<rect x="87.9" y="922.5" width="1.1" height="1.7" fill="#b5d69b" opacity="0.5"/>
<rect x="242.6" y="911.0" width="1.0" height="0.8" fill="#b5d69b" opacity="0.5"/>
<rect x="257.7" y="930.5" width="1.3" height="1.3" fill="#b5d69b" opacity="0.5"/>
<rect x="180.0" y="962.0" width="0.9" height="1.0" fill="#b5d69b" opacity="0.5"/>
<rect x="287.3" y="898.7" width="1.1" height="1.2" fill="#b5d69b" opacity="0.5"/>
<rect x="147.9" y="946.3" width="0.9" height="1.4" fill="#b5d69b" opacity="0.5"/>
<rect x="265.0" y="901.8" width="1.5" height="1.2" fill="#b5d69b" opacity="0.5"/>
<rect x="239.4" y="876.0" width="1.1" height="1.4" fill="#b5d69b" opacity="0.5"/>
<rect x="236.2" y="914.6" width="0.8" height="1.3" fill="#b5d69b" opacity="0.5"/>
<rect x="307.3" y="894.1" width="1.0" height="1.4" fill="#b5d69b" opacity="0.5"/>
<rect x="130.0" y="875.9" width="0.9" height="1.4" fill="#b5d69b" opacity="0.5"/>
<rect x="311.9" y="947.5" width="1.4" height="1.7" fill="#b5d69b" opacity="0.5"/>
<rect x="302.5" y="893.7" width="1.2" height="1.8" fill="#b5d69b" opacity="0.5"/>
<rect x="328.9" y="933.6" width="1.4" height="1.1" fill="#b5d69b" opacity="0.5"/>
<rect x="90.4" y="900.2" width="1.0" height="1.4" fill="#b5d69b" opacity="0.5"/>
<rect x="248.5" y="932.4" width="1.7" height="0.8" fill="#b5d69b" opacity="0.5"/>
<rect x="122.7" y="875.7" width="1.2" height="1.7" fill="#b5d69b" opacity="0.5"/>
<rect x="196.0" y="950.5" width="1.0" height="1.2" fill="#b5d69b" opacity="0.5"/>
<rect x="288.7" y="896.4" width="1.5" height="1.4" fill="#b5d69b" opacity="0.5"/>
<rect x="248.5" y="868.1" width="1.2" height="1.8" fill="#b5d69b" opacity="0.5"/>
<rect x="170.1" y="894.8" width="1.8" height="1.4" fill="#b5d69b" opacity="0.5"/>
<rect x="259.9" y="916.8" width="1.4" height="1.2" fill="#b5d69b" opacity="0.5"/>
<rect x="142.0" y="896.2" width="1.0" height="1.5" fill="#b5d69b" opacity="0.5"/>
<rect x="89.6" y="877.5" width="1.3" height="1.8" fill="#b5d69b" opacity="0.5"/>
<rect x="283.8" y="936.6" width="1.5" height="1.0" fill="#b5d69b" opacity="0.5"/>
<rect x="207.9" y="866.9" width="1.3" height="0.8" fill="#b5d69b" opacity="0.5"/>
<rect x="97.3" y="877.9" width="1.1" height="1.3" fill="#b5d69b" opacity="0.5"/>
<rect x="126.1" y="873.3" width="0.9" height="1.7" fill="#b5d69b" opacity="0.5"/>
<rect x="340.8" y="962.8" width="0.9" height="1.0" fill="#b5d69b" opacity="0.5"/>
<rect x="311.1" y="866.7" width="0.9" height="1.4" fill="#b5d69b" opacity="0.5"/>
<rect x="335.0" y="964.0" width="1.6" height="1.1" fill="#b5d69b" opacity="0.5"/>
<rect x="270.4" y="965.2" width="1.7" height="1.8" fill="#b5d69b" opacity="0.5"/>
<rect x="278.4" y="949.2" width="1.5" height="1.2" fill="#b5d69b" opacity="0.5"/>
<rect x="225.5" y="964.5" width="1.4" height="0.8" fill="#b5d69b" opacity="0.5"/>
<rect x="190.3" y="958.2" width="1.5" height="1.3" fill="#b5d69b" opacity="0.5"/>
<rect x="326.6" y="945.9" width="1.0" height="1.5" fill="#b5d69b" opacity="0.5"/>
<rect x="308.6" y="865.7" width="1.7" height="1.2" fill="#b5d69b" opacity="0.5"/>
<rect x="302.4" y="866.3" width="1.1" height="1.1" fill="#b5d69b" opacity="0.5"/>
<rect x="125.9" y="935.4" width="1.6" height="1.4" fill="#b5d69b" opacity="0.5"/>
<rect x="319.8" y="877.2" width="1.1" height="1.2" fill="#b5d69b" opacity="0.5"/>
<rect x="287.0" y="944.0" width="1.8" height="1.7" fill="#b5d69b" opacity="0.5"/>
<rect x="213.5" y="944.1" width="1.6" height="1.3" fill="#b5d69b" opacity="0.5"/>
<rect x="255.2" y="956.3" width="1.6" height="1.0" fill="#b5d69b" opacity="0.5"/>
<rect x="73.4" y="940.7" width="1.6" height="1.0" fill="#b5d69b" opacity="0.5"/>
<rect x="303.2" y="946.0" width="1.0" height="1.0" fill="#b5d69b" opacity="0.5"/>
<rect x="249.2" y="931.7" width="1.0" height="1.7" fill="#b5d69b" opacity="0.5"/>
<rect x="125.3" y="954.2" width="1.7" height="0.9" fill="#b5d69b" opacity="0.5"/>
<rect x="261.2" y="923.8" width="1.7" height="1.2" fill="#b5d69b" opacity="0.5"/>
<rect x="180.4" y="889.9" width="1.6" height="1.1" fill="#b5d69b" opacity="0.5"/>
<rect x="320.1" y="868.7" width="1.7" height="0.8" fill="#b5d69b" opacity="0.5"/>
<rect x="267.6" y="966.6" width="1.1" height="1.4" fill="#b5d69b" opacity="0.5"/>
<rect x="180.9" y="872.0" width="1.6" height="1.3" fill="#b5d69b" opacity="0.5"/>
<rect x="289.5" y="868.8" width="1.0" height="1.0" fill="#b5d69b" opacity="0.5"/>
<rect x="293.6" y="867.5" width="0.8" height="1.2" fill="#b5d69b" opacity="0.5"/>
<rect x="173.2" y="955.6" width="1.7" height="1.0" fill="#b5d69b" opacity="0.5"/>
<rect x="272.8" y="903.2" width="1.6" height="1.5" fill="#b5d69b" opacity="0.5"/>
<rect x="84.7" y="915.3" width="1.2" height="1.3" fill="#b5d69b" opacity="0.5"/>
<rect x="220.5" y="938.9" width="1.2" height="1.3" fill="#b5d69b" opacity="0.5"/>
<rect x="296.7" y="937.8" width="1.0" height="0.9" fill="#b5d69b" opacity="0.5"/>
<rect x="141.0" y="966.8" width="1.2" height="1.7" fill="#b5d69b" opacity="0.5"/>
<rect x="335.1" y="939.8" width="1.2" height="1.5" fill="#b5d69b" opacity="0.5"/>
<rect x="205.5" y="966.9" width="1.3" height="1.4" fill="#b5d69b" opacity="0.5"/>
<rect x="256.7" y="932.4" width="1.0" height="1.4" fill="#b5d69b" opacity="0.5"/>
<rect x="184.9" y="937.8" width="1.6" height="1.0" fill="#b5d69b" opacity="0.5"/>
<rect x="168.5" y="892.4" width="1.8" height="1.3" fill="#b5d69b" opacity="0.5"/>
<rect x="191.0" y="968.2" width="1.6" height="1.7" fill="#b5d69b" opacity="0.5"/>
<rect x="205.9" y="878.6" width="1.2" height="0.9" fill="#b5d69b" opacity="0.5"/>
<rect x="177.0" y="913.2" width="1.3" height="1.8" fill="#b5d69b" opacity="0.5"/>
<rect x="214.2" y="882.7" width="1.0" height="1.5" fill="#b5d69b" opacity="0.5"/>
<rect x="209.5" y="908.8" width="1.3" height="1.2" fill="#b5d69b" opacity="0.5"/>
<rect x="254.8" y="928.4" width="0.8" height="1.3" fill="#b5d69b" opacity="0.5"/>
<rect x="135.0" y="927.3" width="1.3" height="1.6" fill="#b5d69b" opacity="0.5"/>
<rect x="335.1" y="944.4" width="1.4" height="1.3" fill="#b5d69b" opacity="0.5"/>
<rect x="96.7" y="943.2" width="1.0" height="1.2" fill="#b5d69b" opacity="0.5"/>
<rect x="228.5" y="893.3" width="1.7" height="1.3" fill="#b5d69b" opacity="0.5"/>
<rect x="337.4" y="867.4" width="1.3" height="1.1" fill="#b5d69b" opacity="0.5"/>
<rect x="226.0" y="934.3" width="1.4" height="1.7" fill="#b5d69b" opacity="0.5"/>
<rect x="188.4" y="904.6" width="1.5" height="1.4" fill="#b5d69b" opacity="0.5"/>
<rect x="140.3" y="963.6" width="1.0" height="0.9" fill="#b5d69b" opacity="0.5"/>
<rect x="215.6" y="962.4" width="1.7" height="1.6" fill="#b5d69b" opacity="0.5"/>
<rect x="236.0" y="919.7" width="1.1" height="1.0" fill="#b5d69b" opacity="0.5"/>
<rect x="189.0" y="954.1" width="1.4" height="1.8" fill="#b5d69b" opacity="0.5"/>
<rect x="289.0" y="923.2" width="1.4" height="1.2" fill="#b5d69b" opacity="0.5"/>
<rect x="319.0" y="954.1" width="1.0" height="1.7" fill="#b5d69b" opacity="0.5"/>
<rect x="254.6" y="903.5" width="1.5" height="1.2" fill="#b5d69b" opacity="0.5"/>
<rect x="259.3" y="919.0" width="1.4" height="1.7" fill="#b5d69b" opacity="0.5"/>
<rect x="314.3" y="916.4" width="1.2" height="1.5" fill="#b5d69b" opacity="0.5"/>
<rect x="251.8" y="875.2" width="1.3" height="1.1" fill="#b5d69b" opacity="0.5"/>
<rect x="246.4" y="882.9" width="1.1" height="1.1" fill="#b5d69b" opacity="0.5"/>
<rect x="143.5" y="925.5" width="1.7" height="1.4" fill="#b5d69b" opacity="0.5"/>
<rect x="246.0" y="946.5" width="1.2" height="1.2" fill="#b5d69b" opacity="0.5"/>
<rect x="247.4" y="887.1" width="1.6" height="1.7" fill="#b5d69b" opacity="0.5"/>
<rect x="311.6" y="872.0" width="1.7" height="1.0" fill="#b5d69b" opacity="0.5"/>
<rect x="101.4" y="931.0" width="1.1" height="1.0" fill="#b5d69b" opacity="0.5"/>
<rect x="235.3" y="922.4" width="1.3" height="1.3" fill="#b5d69b" opacity="0.5"/>
<rect x="237.7" y="948.2" width="1.5" height="1.5" fill="#b5d69b" opacity="0.5"/>
<rect x="296.7" y="915.3" width="1.4" height="0.9" fill="#b5d69b" opacity="0.5"/>
<rect x="87.9" y="913.4" width="1.5" height="1.0" fill="#b5d69b" opacity="0.5"/>
<rect x="333.7" y="896.0" width="1.3" height="1.3" fill="#b5d69b" opacity="0.5"/>
<rect x="336.8" y="881.4" width="1.1" height="1.4" fill="#b5d69b" opacity="0.5"/>
<rect x="166.4" y="901.7" width="0.9" height="1.7" fill="#b5d69b" opacity="0.5"/>
<rect x="188.8" y="926.9" width="1.0" height="1.7" fill="#b5d69b" opacity="0.5"/>
<rect x="94.6" y="939.6" width="0.9" height="1.3" fill="#b5d69b" opacity="0.5"/>
<rect x="156.0" y="966.7" width="1.2" height="1.6" fill="#b5d69b" opacity="0.5"/>
<rect x="73.2" y="890.2" width="1.8" height="1.2" fill="#b5d69b" opacity="0.5"/>
<rect x="75.7" y="892.8" width="1.2" height="1.3" fill="#b5d69b" opacity="0.5"/>
<rect x="171.9" y="897.6" width="1.3" height="1.3" fill="#b5d69b" opacity="0.5"/>
<rect x="116.2" y="920.4" width="1.4" height="1.4" fill="#b5d69b" opacity="0.5"/>
<rect x="272.2" y="913.5" width="1.0" height="1.7" fill="#b5d69b" opacity="0.5"/>
<rect x="98.0" y="897.5" width="1.2" height="1.2" fill="#b5d69b" opacity="0.5"/>
<rect x="124.0" y="957.1" width="1.1" height="1.3" fill="#b5d69b" opacity="0.5"/>
<rect x="235.6" y="879.0" width="1.2" height="0.9" fill="#b5d69b" opacity="0.5"/>
<rect x="216.9" y="943.1" width="1.7" height="1.7" fill="#b5d69b" opacity="0.5"/>
<rect x="96.7" y="914.1" width="1.5" height="1.2" fill="#b5d69b" opacity="0.5"/>
<rect x="329.4" y="917.9" width="1.7" height="0.9" fill="#b5d69b" opacity="0.5"/>
<rect x="173.8" y="939.5" width="1.6" height="1.3" fill="#b5d69b" opacity="0.5"/>
<rect x="305.4" y="946.3" width="1.2" height="1.5" fill="#b5d69b" opacity="0.5"/>
<rect x="209.6" y="877.1" width="1.7" height="1.6" fill="#b5d69b" opacity="0.5"/>
<rect x="314.8" y="890.2" width="1.6" height="0.8" fill="#b5d69b" opacity="0.5"/>
<rect x="205.0" y="897.4" width="1.3" height="1.2" fill="#b5d69b" opacity="0.5"/>
<rect x="219.0" y="911.4" width="1.6" height="1.5" fill="#b5d69b" opacity="0.5"/>
<rect x="142.8" y="886.2" width="1.0" height="1.1" fill="#b5d69b" opacity="0.5"/>
<rect x="183.9" y="918.9" width="1.6" height="1.8" fill="#b5d69b" opacity="0.5"/>
<rect x="138.1" y="896.6" width="1.3" height="0.8" fill="#b5d69b" opacity="0.5"/>
<rect x="242.8" y="869.0" width="1.4" height="1.4" fill="#b5d69b" opacity="0.5"/>
<rect x="172.2" y="971.0" width="1.1" height="0.8" fill="#b5d69b" opacity="0.5"/>
<rect x="94.9" y="890.7" width="1.5" height="1.5" fill="#b5d69b" opacity="0.5"/>
<rect x="164.1" y="959.5" width="1.0" height="1.0" fill="#b5d69b" opacity="0.5"/>
<rect x="224.9" y="922.0" width="1.6" height="1.1" fill="#b5d69b" opacity="0.5"/>
<rect x="317.5" y="932.6" width="1.5" height="1.4" fill="#b5d69b" opacity="0.5"/>
<rect x="124.3" y="925.3" width="1.7" height="0.8" fill="#b5d69b" opacity="0.5"/>
<rect x="157.5" y="898.0" width="1.1" height="1.6" fill="#b5d69b" opacity="0.5"/>
<rect x="246.5" y="879.4" width="1.5" height="1.7" fill="#b5d69b" opacity="0.5"/>
<rect x="83.3" y="867.0" width="1.4" height="1.7" fill="#b5d69b" opacity="0.5"/>
<rect x="219.1" y="919.1" width="1.2" height="1.4" fill="#b5d69b" opacity="0.5"/>
<rect x="320.5" y="928.9" width="1.5" height="1.3" fill="#b5d69b" opacity="0.5"/>
<rect x="312.4" y="947.3" width="1.3" height="1.1" fill="#b5d69b" opacity="0.5"/>
<rect x="149.1" y="969.8" width="1.4" height="0.9" fill="#b5d69b" opacity="0.5"/>
<rect x="210.8" y="910.7" width="1.4" height="1.1" fill="#b5d69b" opacity="0.5"/>
<rect x="318.3" y="916.6" width="1.6" height="1.1" fill="#b5d69b" opacity="0.5"/>
<rect x="313.5" y="923.4" width="1.3" height="1.2" fill="#b5d69b" opacity="0.5"/>
<rect x="328.8" y="925.2" width="1.3" height="1.2" fill="#b5d69b" opacity="0.5"/>
<rect x="193.1" y="893.9" width="1.2" height="1.1" fill="#b5d69b" opacity="0.5"/>
<rect x="86.5" y="904.1" width="0.8" height="1.5" fill="#b5d69b" opacity="0.5"/>
<rect x="91.6" y="961.8" width="1.1" height="1.1" fill="#b5d69b" opacity="0.5"/>
<rect x="218.9" y="896.2" width="1.5" height="1.1" fill="#b5d69b" opacity="0.5"/>
<rect x="322.9" y="869.5" width="0.9" height="1.7" fill="#b5d69b" opacity="0.5"/>
<rect x="257.7" y="893.2" width="1.4" height="1.2" fill="#b5d69b" opacity="0.5"/>
<rect x="207.3" y="894.4" width="1.3" height="1.4" fill="#b5d69b" opacity="0.5"/>
<rect x="301.9" y="892.4" width="1.4" height="1.4" fill="#b5d69b" opacity="0.5"/>
<rect x="309.7" y="916.4" width="1.7" height="1.7" fill="#b5d69b" opacity="0.5"/>
<rect x="179.3" y="908.4" width="1.8" height="1.4" fill="#b5d69b" opacity="0.5"/>
<rect x="213.6" y="948.2" width="1.4" height="1.3" fill="#b5d69b" opacity="0.5"/>
<rect x="249.2" y="893.0" width="1.2" height="0.8" fill="#b5d69b" opacity="0.5"/>
<rect x="266.8" y="953.2" width="1.5" height="1.8" fill="#b5d69b" opacity="0.5"/>
<rect x="276.6" y="876.5" width="1.1" height="1.7" fill="#b5d69b" opacity="0.5"/>
<rect x="95.1" y="958.9" width="1.6" height="0.9" fill="#b5d69b" opacity="0.5"/>
<rect x="123.7" y="943.3" width="1.5" height="0.8" fill="#b5d69b" opacity="0.5"/>
<rect x="213.3" y="885.2" width="1.7" height="1.3" fill="#b5d69b" opacity="0.5"/>
<rect x="68.7" y="907.3" width="0.8" height="1.7" fill="#b5d69b" opacity="0.5"/>
<rect x="313.4" y="941.8" width="0.8" height="1.7" fill="#b5d69b" opacity="0.5"/>
<rect x="138.9" y="934.6" width="1.6" height="1.4" fill="#b5d69b" opacity="0.5"/>
<rect x="97.4" y="891.3" width="1.5" height="0.9" fill="#b5d69b" opacity="0.5"/>
<rect x="170.4" y="964.7" width="1.2" height="1.0" fill="#b5d69b" opacity="0.5"/>
<rect x="247.1" y="902.4" width="1.6" height="1.2" fill="#b5d69b" opacity="0.5"/>
<rect x="297.1" y="953.3" width="1.0" height="1.3" fill="#b5d69b" opacity="0.5"/>
<rect x="189.8" y="878.1" width="1.7" height="1.1" fill="#b5d69b" opacity="0.5"/>
<rect x="236.3" y="871.5" width="1.8" height="1.8" fill="#b5d69b" opacity="0.5"/>
<rect x="256.5" y="879.0" width="1.5" height="1.3" fill="#b5d69b" opacity="0.5"/>
<rect x="197.5" y="888.4" width="1.0" height="1.6" fill="#b5d69b" opacity="0.5"/>
<rect x="234.2" y="944.9" width="1.5" height="1.2" fill="#b5d69b" opacity="0.5"/>
<rect x="219.0" y="897.4" width="1.5" height="1.2" fill="#b5d69b" opacity="0.5"/>
<rect x="284.5" y="896.2" width="1.2" height="0.9" fill="#b5d69b" opacity="0.5"/>
<rect x="75.9" y="888.0" width="0.8" height="1.2" fill="#b5d69b" opacity="0.5"/>
<rect x="171.2" y="959.4" width="0.8" height="1.8" fill="#b5d69b" opacity="0.5"/>
<rect x="91.6" y="953.8" width="1.2" height="1.0" fill="#b5d69b" opacity="0.5"/>
<rect x="236.0" y="903.1" width="0.8" height="0.9" fill="#b5d69b" opacity="0.5"/>
<rect x="255.1" y="942.0" width="1.8" height="1.1" fill="#b5d69b" opacity="0.5"/>
<rect x="280.4" y="901.7" width="1.3" height="1.1" fill="#b5d69b" opacity="0.5"/>
<rect x="180.3" y="962.8" width="1.1" height="1.2" fill="#b5d69b" opacity="0.5"/>
<rect x="319.4" y="913.3" width="1.6" height="1.3" fill="#b5d69b" opacity="0.5"/>
<rect x="162.9" y="942.1" width="1.5" height="1.2" fill="#b5d69b" opacity="0.5"/>
<rect x="344.4" y="874.8" width="1.6" height="1.5" fill="#b5d69b" opacity="0.5"/>
<rect x="263.8" y="915.7" width="1.5" height="0.8" fill="#b5d69b" opacity="0.5"/>
<rect x="252.7" y="957.6" width="1.2" height="1.5" fill="#b5d69b" opacity="0.5"/>
<rect x="259.8" y="918.7" width="1.6" height="1.3" fill="#b5d69b" opacity="0.5"/>
<rect x="98.7" y="921.0" width="1.6" height="1.0" fill="#b5d69b" opacity="0.5"/>
<rect x="194.2" y="954.3" width="0.8" height="1.7" fill="#b5d69b" opacity="0.5"/>
<rect x="163.3" y="903.9" width="1.5" height="1.4" fill="#b5d69b" opacity="0.5"/>
<rect x="145.6" y="881.7" width="1.2" height="1.7" fill="#b5d69b" opacity="0.5"/>
<rect x="343.6" y="941.8" width="1.5" height="1.5" fill="#b5d69b" opacity="0.5"/>
<rect x="320.9" y="882.2" width="0.9" height="1.6" fill="#b5d69b" opacity="0.5"/>
<rect x="70.5" y="921.0" width="1.2" height="1.7" fill="#b5d69b" opacity="0.5"/>
<rect x="240.0" y="889.1" width="0.9" height="1.3" fill="#b5d69b" opacity="0.5"/>
<rect x="219.5" y="915.0" width="1.4" height="0.9" fill="#b5d69b" opacity="0.5"/>
<rect x="165.7" y="953.8" width="1.1" height="1.0" fill="#b5d69b" opacity="0.5"/>
<rect x="115.0" y="965.4" width="1.7" height="1.2" fill="#b5d69b" opacity="0.5"/>
<rect x="157.3" y="904.4" width="1.7" height="1.7" fill="#b5d69b" opacity="0.5"/>
<rect x="331.6" y="956.6" width="1.5" height="0.9" fill="#b5d69b" opacity="0.5"/>
<rect x="328.8" y="882.9" width="1.5" height="1.2" fill="#b5d69b" opacity="0.5"/>
<rect x="75.3" y="935.4" width="1.1" height="1.7" fill="#b5d69b" opacity="0.5"/>
<rect x="115.6" y="936.4" width="1.2" height="0.8" fill="#b5d69b" opacity="0.5"/>
<rect x="143.9" y="898.1" width="1.6" height="1.6" fill="#b5d69b" opacity="0.5"/>
<rect x="326.9" y="882.7" width="1.0" height="1.2" fill="#b5d69b" opacity="0.5"/>
<rect x="154.7" y="887.1" width="1.6" height="0.8" fill="#b5d69b" opacity="0.5"/>
<rect x="215.4" y="879.2" width="1.1" height="1.1" fill="#b5d69b" opacity="0.5"/>
<rect x="194.5" y="965.5" width="1.5" height="1.2" fill="#b5d69b" opacity="0.5"/>
<rect x="342.1" y="892.1" width="1.0" height="1.4" fill="#b5d69b" opacity="0.5"/>
<rect x="280.6" y="942.5" width="1.3" height="1.5" fill="#b5d69b" opacity="0.5"/>
<rect x="158.2" y="966.5" width="1.5" height="1.6" fill="#b5d69b" opacity="0.5"/>
<rect x="216.2" y="963.2" width="1.3" height="1.8" fill="#b5d69b" opacity="0.5"/>
<rect x="189.2" y="966.8" width="1.1" height="1.3" fill="#b5d69b" opacity="0.5"/>
<rect x="221.9" y="923.8" width="1.6" height="1.6" fill="#b5d69b" opacity="0.5"/>
<rect x="115.9" y="940.5" width="1.3" height="1.2" fill="#b5d69b" opacity="0.5"/>
<rect x="97.4" y="962.3" width="1.8" height="1.5" fill="#b5d69b" opacity="0.5"/>
<rect x="224.9" y="873.9" width="1.1" height="1.1" fill="#b5d69b" opacity="0.5"/>
<rect x="89.2" y="905.1" width="1.2" height="1.2" fill="#b5d69b" opacity="0.5"/>
<rect x="84.3" y="879.1" width="1.8" height="1.4" fill="#b5d69b" opacity="0.5"/>
<rect x="130.2" y="913.1" width="1.2" height="1.3" fill="#b5d69b" opacity="0.5"/>
<rect x="114.6" y="944.7" width="1.7" height="1.4" fill="#b5d69b" opacity="0.5"/>
<rect x="333.7" y="952.2" width="1.3" height="1.3" fill="#b5d69b" opacity="0.5"/>
<rect x="258.4" y="904.3" width="0.9" height="1.3" fill="#b5d69b" opacity="0.5"/>
<rect x="293.7" y="937.2" width="0.8" height="1.6" fill="#b5d69b" opacity="0.5"/>
<rect x="78.1" y="920.5" width="1.0" height="1.1" fill="#b5d69b" opacity="0.5"/>
<rect x="129.7" y="930.8" width="1.5" height="1.7" fill="#b5d69b" opacity="0.5"/>
<rect x="206.6" y="871.4" width="0.8" height="0.9" fill="#b5d69b" opacity="0.5"/>
<rect x="100.9" y="883.8" width="1.1" height="1.0" fill="#b5d69b" opacity="0.5"/>
<rect x="303.2" y="903.5" width="1.3" height="1.6" fill="#b5d69b" opacity="0.5"/>
<rect x="115.6" y="918.6" width="0.8" height="1.3" fill="#b5d69b" opacity="0.5"/>
<rect x="324.9" y="925.6" width="1.1" height="1.4" fill="#b5d69b" opacity="0.5"/>
<rect x="205.6" y="918.3" width="1.4" height="1.5" fill="#b5d69b" opacity="0.5"/>
<rect x="314.3" y="969.5" width="1.8" height="1.6" fill="#b5d69b" opacity="0.5"/>
<rect x="256.1" y="950.6" width="1.0" height="1.0" fill="#b5d69b" opacity="0.5"/>
<rect x="301.0" y="911.6" width="0.8" height="1.5" fill="#b5d69b" opacity="0.5"/>
<rect x="102.5" y="894.1" width="1.7" height="1.0" fill="#b5d69b" opacity="0.5"/>
<rect x="296.5" y="893.5" width="1.6" height="1.2" fill="#b5d69b" opacity="0.5"/>
<rect x="222.4" y="938.2" width="1.5" height="1.0" fill="#b5d69b" opacity="0.5"/>
<rect x="252.9" y="882.8" width="1.0" height="1.6" fill="#b5d69b" opacity="0.5"/>
<rect x="107.8" y="909.3" width="0.9" height="1.4" fill="#b5d69b" opacity="0.5"/>
<rect x="114.1" y="903.6" width="1.8" height="1.2" fill="#b5d69b" opacity="0.5"/>
<rect x="205.3" y="868.5" width="1.1" height="0.9" fill="#b5d69b" opacity="0.5"/>
<rect x="238.5" y="881.5" width="1.0" height="0.9" fill="#b5d69b" opacity="0.5"/>
<rect x="272.4" y="934.8" width="1.1" height="1.1" fill="#b5d69b" opacity="0.5"/>
<rect x="142.3" y="923.6" width="1.4" height="0.9" fill="#b5d69b" opacity="0.5"/>
<rect x="107.9" y="932.0" width="1.1" height="1.5" fill="#b5d69b" opacity="0.5"/>
<rect x="114.2" y="875.5" width="0.9" height="1.7" fill="#b5d69b" opacity="0.5"/>
<rect x="215.3" y="867.1" width="1.2" height="1.4" fill="#b5d69b" opacity="0.5"/>
<rect x="126.2" y="954.0" width="0.8" height="1.3" fill="#b5d69b" opacity="0.5"/>
<rect x="225.9" y="885.2" width="1.8" height="1.3" fill="#b5d69b" opacity="0.5"/>
<rect x="101.6" y="945.8" width="0.8" height="1.5" fill="#b5d69b" opacity="0.5"/>
<rect x="298.8" y="933.3" width="0.8" height="0.9" fill="#b5d69b" opacity="0.5"/>
<rect x="297.5" y="955.6" width="1.1" height="1.7" fill="#b5d69b" opacity="0.5"/>
<rect x="292.8" y="876.5" width="1.7" height="0.8" fill="#b5d69b" opacity="0.5"/>
<rect x="155.9" y="887.4" width="1.0" height="1.3" fill="#b5d69b" opacity="0.5"/>
<rect x="77.8" y="968.3" width="1.0" height="1.5" fill="#b5d69b" opacity="0.5"/>
<rect x="163.5" y="963.2" width="1.4" height="1.3" fill="#b5d69b" opacity="0.5"/>
<rect x="277.9" y="925.1" width="1.3" height="1.0" fill="#b5d69b" opacity="0.5"/>
<rect x="288.9" y="932.3" width="1.3" height="1.8" fill="#b5d69b" opacity="0.5"/>
<rect x="195.0" y="944.3" width="1.0" height="1.2" fill="#b5d69b" opacity="0.5"/>
<rect x="241.6" y="892.7" width="1.8" height="1.8" fill="#b5d69b" opacity="0.5"/>
<rect x="245.6" y="941.9" width="1.1" height="1.6" fill="#b5d69b" opacity="0.5"/>
<rect x="306.0" y="914.1" width="1.4" height="1.5" fill="#b5d69b" opacity="0.5"/>
<rect x="134.7" y="869.9" width="1.0" height="1.3" fill="#b5d69b" opacity="0.5"/>
<rect x="243.3" y="956.6" width="1.1" height="1.0" fill="#b5d69b" opacity="0.5"/>
<rect x="182.5" y="882.5" width="1.1" height="1.3" fill="#b5d69b" opacity="0.5"/>
<rect x="256.8" y="876.3" width="1.0" height="1.3" fill="#b5d69b" opacity="0.5"/>
<rect x="210.9" y="883.8" width="1.5" height="1.4" fill="#b5d69b" opacity="0.5"/>
<rect x="334.6" y="967.1" width="1.4" height="0.9" fill="#b5d69b" opacity="0.5"/>
<rect x="211.2" y="894.0" width="1.1" height="0.9" fill="#b5d69b" opacity="0.5"/>
<rect x="258.5" y="935.2" width="1.1" height="1.0" fill="#b5d69b" opacity="0.5"/>
<rect x="342.9" y="924.1" width="1.5" height="1.0" fill="#b5d69b" opacity="0.5"/>
<rect x="328.9" y="941.9" width="1.3" height="0.9" fill="#b5d69b" opacity="0.5"/>
<rect x="187.2" y="867.7" width="1.0" height="1.6" fill="#b5d69b" opacity="0.5"/>
<rect x="96.1" y="887.0" width="1.1" height="1.8" fill="#b5d69b" opacity="0.5"/>
<rect x="111.1" y="909.5" width="1.3" height="0.8" fill="#b5d69b" opacity="0.5"/>
<rect x="222.7" y="872.5" width="1.1" height="1.1" fill="#b5d69b" opacity="0.5"/>
<rect x="344.2" y="911.9" width="1.1" height="1.1" fill="#b5d69b" opacity="0.5"/>
<rect x="149.0" y="882.3" width="1.1" height="1.5" fill="#b5d69b" opacity="0.5"/>
<rect x="163.7" y="889.5" width="0.8" height="1.6" fill="#b5d69b" opacity="0.5"/>
<rect x="148.5" y="894.0" width="1.6" height="1.8" fill="#b5d69b" opacity="0.5"/>
<rect x="219.2" y="872.4" width="1.6" height="1.6" fill="#b5d69b" opacity="0.5"/>
<rect x="69.9" y="895.8" width="1.6" height="1.3" fill="#b5d69b" opacity="0.5"/>
<rect x="114.4" y="970.4" width="1.0" height="1.0" fill="#b5d69b" opacity="0.5"/>
<rect x="259.4" y="970.6" width="1.5" height="0.8" fill="#b5d69b" opacity="0.5"/>
<rect x="70.7" y="888.0" width="1.5" height="1.8" fill="#b5d69b" opacity="0.5"/>
<rect x="97.3" y="936.5" width="1.5" height="0.8" fill="#b5d69b" opacity="0.5"/>
<rect x="317.8" y="898.5" width="1.2" height="1.6" fill="#b5d69b" opacity="0.5"/>
<rect x="217.1" y="932.0" width="0.9" height="1.4" fill="#b5d69b" opacity="0.5"/>
<rect x="106.8" y="953.2" width="1.6" height="1.4" fill="#b5d69b" opacity="0.5"/>
<rect x="245.6" y="969.5" width="1.6" height="1.5" fill="#b5d69b" opacity="0.5"/>
<rect x="165.8" y="866.3" width="1.8" height="0.9" fill="#b5d69b" opacity="0.5"/>
<rect x="77.1" y="928.7" width="1.8" height="1.2" fill="#b5d69b" opacity="0.5"/>
<rect x="123.6" y="867.1" width="1.0" height="1.2" fill="#b5d69b" opacity="0.5"/>
<rect x="162.7" y="893.8" width="1.7" height="1.8" fill="#b5d69b" opacity="0.5"/>
<rect x="339.0" y="886.0" width="1.5" height="1.0" fill="#b5d69b" opacity="0.5"/>
<rect x="194.4" y="918.5" width="1.1" height="1.6" fill="#b5d69b" opacity="0.5"/>
<rect x="126.5" y="950.9" width="1.6" height="1.4" fill="#b5d69b" opacity="0.5"/>
<rect x="86.3" y="878.0" width="1.6" height="1.8" fill="#b5d69b" opacity="0.5"/>
<rect x="132.1" y="936.3" width="1.6" height="1.7" fill="#b5d69b" opacity="0.5"/>
<rect x="103.1" y="886.9" width="0.9" height="1.5" fill="#b5d69b" opacity="0.5"/>
<rect x="165.3" y="939.7" width="1.0" height="1.4" fill="#b5d69b" opacity="0.5"/>
<rect x="141.3" y="911.9" width="1.4" height="1.8" fill="#b5d69b" opacity="0.5"/>
<rect x="118.6" y="948.8" width="0.9" height="1.0" fill="#b5d69b" opacity="0.5"/>
<rect x="260.1" y="873.9" width="1.6" height="1.7" fill="#b5d69b" opacity="0.5"/>
<rect x="126.4" y="940.6" width="1.4" height="1.8" fill="#b5d69b" opacity="0.5"/>
<rect x="203.7" y="904.4" width="1.7" height="1.1" fill="#b5d69b" opacity="0.5"/>
<rect x="320.7" y="903.8" width="1.2" height="1.6" fill="#b5d69b" opacity="0.5"/>
<rect x="276.9" y="884.7" width="1.5" height="1.8" fill="#b5d69b" opacity="0.5"/>
<rect x="177.0" y="924.7" width="1.5" height="1.5" fill="#b5d69b" opacity="0.5"/>
<rect x="174.3" y="905.7" width="1.0" height="1.4" fill="#b5d69b" opacity="0.5"/>
<rect x="157.4" y="949.2" width="0.8" height="1.6" fill="#b5d69b" opacity="0.5"/>
<rect x="109.9" y="957.9" width="1.6" height="1.2" fill="#b5d69b" opacity="0.5"/>
<rect x="92.8" y="887.5" width="1.0" height="1.8" fill="#b5d69b" opacity="0.5"/>
<rect x="290.8" y="867.6" width="0.8" height="1.4" fill="#b5d69b" opacity="0.5"/>
<rect x="192.3" y="924.1" width="1.6" height="1.6" fill="#b5d69b" opacity="0.5"/>
<rect x="102.7" y="968.6" width="1.3" height="1.3" fill="#b5d69b" opacity="0.5"/>
<rect x="107.3" y="890.6" width="1.0" height="1.1" fill="#b5d69b" opacity="0.5"/>
<rect x="217.4" y="892.6" width="1.1" height="0.9" fill="#b5d69b" opacity="0.5"/>
<rect x="84.4" y="962.5" width="1.2" height="1.3" fill="#b5d69b" opacity="0.5"/>
<rect x="101.6" y="970.3" width="0.8" height="1.6" fill="#b5d69b" opacity="0.5"/>
<rect x="77.2" y="895.9" width="1.3" height="1.3" fill="#b5d69b" opacity="0.5"/>
<rect x="262.2" y="926.0" width="1.5" height="0.9" fill="#b5d69b" opacity="0.5"/>
<rect x="147.1" y="894.4" width="1.3" height="1.2" fill="#b5d69b" opacity="0.5"/>
<rect x="95.2" y="878.8" width="0.9" height="0.9" fill="#b5d69b" opacity="0.5"/>
<rect x="246.2" y="968.1" width="1.4" height="1.0" fill="#b5d69b" opacity="0.5"/>
<rect x="236.0" y="918.0" width="1.1" height="1.6" fill="#b5d69b" opacity="0.5"/>
<rect x="138.6" y="897.7" width="0.8" height="1.0" fill="#b5d69b" opacity="0.5"/>
<rect x="323.3" y="916.3" width="1.5" height="1.3" fill="#b5d69b" opacity="0.5"/>
<rect x="139.3" y="902.9" width="1.3" height="1.1" fill="#b5d69b" opacity="0.5"/>
<rect x="209.2" y="867.7" width="1.2" height="0.9" fill="#b5d69b" opacity="0.5"/>
<rect x="199.0" y="921.7" width="1.7" height="1.7" fill="#b5d69b" opacity="0.5"/>
<rect x="315.2" y="912.6" width="1.1" height="1.6" fill="#b5d69b" opacity="0.5"/>
<rect x="98.3" y="905.6" width="0.9" height="1.6" fill="#b5d69b" opacity="0.5"/>
<rect x="780.9" y="966.2" width="0.8" height="1.4" fill="#c2dcae" opacity="0.4"/>
<rect x="752.9" y="936.0" width="1.1" height="1.3" fill="#c2dcae" opacity="0.4"/>
<rect x="621.6" y="967.7" width="1.4" height="1.0" fill="#c2dcae" opacity="0.4"/>
<rect x="660.1" y="926.9" width="1.4" height="1.4" fill="#c2dcae" opacity="0.4"/>
<rect x="579.4" y="922.0" width="1.0" height="1.2" fill="#c2dcae" opacity="0.4"/>
<rect x="734.1" y="942.0" width="1.1" height="1.2" fill="#c2dcae" opacity="0.4"/>
<rect x="348.6" y="930.8" width="1.3" height="1.3" fill="#c2dcae" opacity="0.4"/>
<rect x="821.7" y="910.8" width="1.4" height="1.5" fill="#c2dcae" opacity="0.4"/>
<rect x="708.0" y="957.8" width="0.9" height="0.9" fill="#c2dcae" opacity="0.4"/>
<rect x="472.2" y="935.2" width="1.4" height="1.0" fill="#c2dcae" opacity="0.4"/>
<rect x="891.0" y="958.6" width="0.7" height="0.7" fill="#c2dcae" opacity="0.4"/>
<rect x="928.8" y="932.5" width="1.3" height="1.4" fill="#c2dcae" opacity="0.4"/>
<rect x="522.7" y="894.2" width="1.4" height="1.4" fill="#c2dcae" opacity="0.4"/>
<rect x="578.6" y="945.2" width="0.7" height="1.5" fill="#c2dcae" opacity="0.4"/>
<rect x="702.6" y="970.2" width="1.3" height="1.0" fill="#c2dcae" opacity="0.4"/>
<rect x="450.0" y="933.6" width="1.4" height="1.1" fill="#c2dcae" opacity="0.4"/>
<rect x="660.4" y="910.4" width="0.8" height="0.9" fill="#c2dcae" opacity="0.4"/>
<rect x="522.9" y="930.3" width="1.5" height="0.9" fill="#c2dcae" opacity="0.4"/>
<rect x="478.5" y="951.5" width="1.5" height="0.9" fill="#c2dcae" opacity="0.4"/>
<rect x="519.7" y="925.8" width="0.7" height="0.8" fill="#c2dcae" opacity="0.4"/>
<rect x="667.6" y="912.4" width="0.9" height="1.3" fill="#c2dcae" opacity="0.4"/>
<rect x="626.8" y="937.6" width="1.2" height="1.3" fill="#c2dcae" opacity="0.4"/>
<rect x="883.8" y="969.6" width="0.8" height="1.3" fill="#c2dcae" opacity="0.4"/>
<rect x="359.6" y="902.4" width="0.9" height="0.8" fill="#c2dcae" opacity="0.4"/>
<rect x="434.1" y="911.4" width="1.3" height="1.3" fill="#c2dcae" opacity="0.4"/>
<rect x="638.3" y="936.4" width="1.3" height="1.2" fill="#c2dcae" opacity="0.4"/>
<rect x="390.1" y="929.3" width="0.9" height="1.1" fill="#c2dcae" opacity="0.4"/>
<rect x="916.9" y="908.6" width="1.0" height="1.2" fill="#c2dcae" opacity="0.4"/>
<rect x="730.6" y="917.1" width="1.0" height="1.1" fill="#c2dcae" opacity="0.4"/>
<rect x="888.9" y="896.9" width="1.4" height="1.1" fill="#c2dcae" opacity="0.4"/>
<rect x="881.0" y="923.8" width="1.2" height="0.7" fill="#c2dcae" opacity="0.4"/>
<rect x="475.1" y="944.3" width="1.0" height="1.1" fill="#c2dcae" opacity="0.4"/>
<rect x="920.0" y="937.3" width="1.2" height="1.2" fill="#c2dcae" opacity="0.4"/>
<rect x="492.6" y="970.9" width="1.0" height="0.7" fill="#c2dcae" opacity="0.4"/>
<rect x="593.8" y="925.8" width="0.9" height="1.0" fill="#c2dcae" opacity="0.4"/>
<rect x="387.5" y="967.3" width="1.1" height="0.9" fill="#c2dcae" opacity="0.4"/>
<rect x="665.5" y="939.7" width="1.0" height="1.3" fill="#c2dcae" opacity="0.4"/>
<rect x="611.3" y="965.9" width="1.3" height="1.3" fill="#c2dcae" opacity="0.4"/>
<rect x="440.2" y="948.6" width="1.5" height="1.4" fill="#c2dcae" opacity="0.4"/>
<rect x="370.6" y="915.4" width="0.7" height="1.2" fill="#c2dcae" opacity="0.4"/>
<rect x="863.6" y="947.2" width="1.2" height="1.1" fill="#c2dcae" opacity="0.4"/>
<rect x="772.1" y="936.2" width="1.3" height="0.8" fill="#c2dcae" opacity="0.4"/>
<rect x="620.3" y="942.7" width="0.8" height="1.1" fill="#c2dcae" opacity="0.4"/>
<rect x="880.5" y="899.9" width="1.3" height="1.3" fill="#c2dcae" opacity="0.4"/>
<rect x="865.5" y="969.3" width="1.2" height="1.2" fill="#c2dcae" opacity="0.4"/>
<rect x="622.6" y="927.8" width="1.2" height="1.0" fill="#c2dcae" opacity="0.4"/>
<rect x="812.2" y="936.2" width="1.0" height="1.1" fill="#c2dcae" opacity="0.4"/>
<rect x="759.8" y="959.1" width="1.4" height="1.3" fill="#c2dcae" opacity="0.4"/>
<rect x="487.9" y="893.0" width="0.8" height="0.8" fill="#c2dcae" opacity="0.4"/>
<rect x="641.6" y="899.1" width="1.1" height="1.3" fill="#c2dcae" opacity="0.4"/>
<rect x="602.7" y="962.0" width="1.0" height="1.1" fill="#c2dcae" opacity="0.4"/>
<rect x="500.0" y="903.3" width="1.2" height="0.8" fill="#c2dcae" opacity="0.4"/>
<rect x="431.4" y="915.9" width="1.3" height="1.5" fill="#c2dcae" opacity="0.4"/>
<rect x="472.1" y="912.0" width="1.5" height="1.2" fill="#c2dcae" opacity="0.4"/>
<rect x="811.0" y="971.9" width="1.2" height="0.9" fill="#c2dcae" opacity="0.4"/>
<rect x="919.3" y="963.5" width="0.7" height="1.5" fill="#c2dcae" opacity="0.4"/>
<rect x="724.3" y="911.3" width="1.1" height="0.9" fill="#c2dcae" opacity="0.4"/>
<rect x="798.3" y="924.6" width="0.8" height="1.4" fill="#c2dcae" opacity="0.4"/>
<rect x="538.7" y="906.8" width="1.3" height="0.8" fill="#c2dcae" opacity="0.4"/>
<rect x="699.0" y="928.1" width="0.8" height="1.5" fill="#c2dcae" opacity="0.4"/>
<rect x="750.6" y="897.4" width="1.4" height="1.2" fill="#c2dcae" opacity="0.4"/>
<rect x="826.3" y="954.0" width="0.8" height="1.0" fill="#c2dcae" opacity="0.4"/>
<rect x="445.8" y="957.1" width="1.5" height="1.2" fill="#c2dcae" opacity="0.4"/>
<rect x="734.6" y="970.1" width="1.1" height="1.1" fill="#c2dcae" opacity="0.4"/>
<rect x="509.3" y="970.9" width="0.8" height="0.9" fill="#c2dcae" opacity="0.4"/>
<rect x="842.9" y="895.1" width="0.9" height="1.1" fill="#c2dcae" opacity="0.4"/>
<rect x="483.4" y="923.4" width="0.7" height="1.2" fill="#c2dcae" opacity="0.4"/>
<rect x="388.7" y="915.9" width="0.8" height="1.3" fill="#c2dcae" opacity="0.4"/>
<rect x="472.2" y="936.8" width="0.7" height="1.2" fill="#c2dcae" opacity="0.4"/>
<rect x="545.3" y="964.7" width="0.9" height="0.9" fill="#c2dcae" opacity="0.4"/>
<rect x="853.2" y="897.8" width="1.1" height="1.1" fill="#c2dcae" opacity="0.4"/>
<rect x="515.2" y="906.3" width="1.1" height="0.7" fill="#c2dcae" opacity="0.4"/>
<rect x="350.6" y="915.6" width="1.0" height="0.9" fill="#c2dcae" opacity="0.4"/>
<rect x="760.6" y="925.8" width="1.2" height="1.2" fill="#c2dcae" opacity="0.4"/>
<rect x="760.8" y="966.6" width="1.1" height="1.3" fill="#c2dcae" opacity="0.4"/>
<rect x="670.7" y="899.0" width="1.4" height="1.1" fill="#c2dcae" opacity="0.4"/>
<rect x="368.1" y="951.7" width="1.1" height="1.5" fill="#c2dcae" opacity="0.4"/>
<rect x="589.0" y="930.2" width="1.4" height="1.4" fill="#c2dcae" opacity="0.4"/>
<rect x="795.6" y="928.1" width="1.0" height="1.3" fill="#c2dcae" opacity="0.4"/>
<rect x="869.9" y="929.2" width="1.3" height="1.1" fill="#c2dcae" opacity="0.4"/>
<rect x="667.7" y="909.9" width="0.9" height="0.9" fill="#c2dcae" opacity="0.4"/>
<rect x="920.7" y="895.0" width="0.9" height="0.9" fill="#c2dcae" opacity="0.4"/>
<rect x="822.3" y="946.0" width="0.9" height="0.8" fill="#c2dcae" opacity="0.4"/>
<rect x="738.7" y="952.0" width="1.2" height="1.3" fill="#c2dcae" opacity="0.4"/>
<rect x="694.9" y="895.3" width="1.3" height="1.4" fill="#c2dcae" opacity="0.4"/>
<rect x="442.9" y="923.3" width="1.5" height="1.5" fill="#c2dcae" opacity="0.4"/>
<rect x="822.9" y="959.6" width="0.8" height="1.4" fill="#c2dcae" opacity="0.4"/>
<rect x="826.3" y="908.8" width="1.4" height="1.4" fill="#c2dcae" opacity="0.4"/>
<rect x="880.9" y="963.9" width="0.8" height="0.8" fill="#c2dcae" opacity="0.4"/>
<rect x="816.4" y="906.7" width="1.0" height="1.3" fill="#c2dcae" opacity="0.4"/>
<rect x="830.7" y="924.6" width="1.0" height="1.3" fill="#c2dcae" opacity="0.4"/>
<rect x="927.5" y="942.6" width="1.0" height="0.9" fill="#c2dcae" opacity="0.4"/>
<rect x="454.5" y="941.3" width="1.3" height="0.9" fill="#c2dcae" opacity="0.4"/>
<rect x="780.2" y="940.8" width="1.2" height="1.1" fill="#c2dcae" opacity="0.4"/>
<rect x="585.6" y="894.2" width="1.1" height="1.2" fill="#c2dcae" opacity="0.4"/>
<rect x="864.2" y="969.9" width="1.2" height="0.8" fill="#c2dcae" opacity="0.4"/>
<rect x="847.5" y="925.7" width="1.5" height="1.5" fill="#c2dcae" opacity="0.4"/>
<rect x="397.7" y="897.1" width="0.7" height="1.2" fill="#c2dcae" opacity="0.4"/>
<rect x="632.8" y="942.3" width="1.0" height="1.2" fill="#c2dcae" opacity="0.4"/>
<rect x="400.6" y="909.3" width="1.3" height="0.9" fill="#c2dcae" opacity="0.4"/>
<rect x="411.6" y="944.3" width="1.5" height="1.4" fill="#c2dcae" opacity="0.4"/>
<rect x="860.8" y="949.4" width="0.7" height="0.8" fill="#c2dcae" opacity="0.4"/>
<rect x="685.6" y="935.0" width="1.4" height="0.7" fill="#c2dcae" opacity="0.4"/>
<rect x="710.9" y="898.7" width="1.3" height="0.8" fill="#c2dcae" opacity="0.4"/>
<rect x="629.8" y="954.0" width="1.5" height="1.3" fill="#c2dcae" opacity="0.4"/>
<rect x="802.6" y="916.6" width="1.2" height="1.1" fill="#c2dcae" opacity="0.4"/>
<rect x="634.4" y="940.0" width="1.1" height="1.0" fill="#c2dcae" opacity="0.4"/>
<rect x="791.4" y="944.1" width="1.5" height="1.4" fill="#c2dcae" opacity="0.4"/>
<rect x="813.4" y="901.7" width="1.1" height="1.1" fill="#c2dcae" opacity="0.4"/>
<rect x="807.2" y="964.9" width="0.9" height="0.7" fill="#c2dcae" opacity="0.4"/>
<rect x="853.8" y="970.1" width="1.0" height="1.2" fill="#c2dcae" opacity="0.4"/>
<rect x="570.4" y="923.3" width="1.2" height="1.3" fill="#c2dcae" opacity="0.4"/>
<rect x="872.1" y="921.8" width="1.1" height="1.1" fill="#c2dcae" opacity="0.4"/>
<rect x="921.8" y="933.9" width="1.4" height="1.5" fill="#c2dcae" opacity="0.4"/>
<rect x="361.8" y="954.0" width="0.8" height="1.1" fill="#c2dcae" opacity="0.4"/>
<rect x="713.5" y="899.2" width="1.2" height="1.3" fill="#c2dcae" opacity="0.4"/>
<rect x="548.6" y="935.6" width="1.0" height="0.8" fill="#c2dcae" opacity="0.4"/>
<rect x="494.2" y="967.4" width="1.2" height="1.1" fill="#c2dcae" opacity="0.4"/>
<rect x="816.2" y="959.1" width="1.3" height="1.0" fill="#c2dcae" opacity="0.4"/>
<rect x="661.0" y="918.5" width="0.8" height="1.4" fill="#c2dcae" opacity="0.4"/>
<rect x="391.9" y="922.4" width="1.4" height="0.9" fill="#c2dcae" opacity="0.4"/>
<rect x="878.2" y="894.7" width="0.8" height="1.1" fill="#c2dcae" opacity="0.4"/>
<rect x="716.9" y="955.7" width="1.4" height="1.4" fill="#c2dcae" opacity="0.4"/>
<rect x="453.5" y="971.3" width="0.7" height="1.1" fill="#c2dcae" opacity="0.4"/>
<rect x="549.0" y="894.9" width="0.9" height="1.5" fill="#c2dcae" opacity="0.4"/>
<rect x="912.5" y="920.2" width="1.5" height="1.3" fill="#c2dcae" opacity="0.4"/>
<rect x="364.3" y="940.6" width="0.9" height="0.9" fill="#c2dcae" opacity="0.4"/>
<rect x="764.8" y="909.4" width="1.0" height="0.7" fill="#c2dcae" opacity="0.4"/>
<rect x="532.9" y="917.0" width="0.8" height="0.8" fill="#c2dcae" opacity="0.4"/>
<rect x="582.9" y="899.5" width="1.4" height="0.9" fill="#c2dcae" opacity="0.4"/>
<rect x="559.9" y="898.0" width="1.3" height="0.9" fill="#c2dcae" opacity="0.4"/>
<rect x="389.7" y="922.3" width="1.4" height="1.4" fill="#c2dcae" opacity="0.4"/>
<rect x="617.9" y="938.9" width="0.8" height="1.4" fill="#c2dcae" opacity="0.4"/>
<rect x="786.2" y="912.5" width="1.4" height="0.8" fill="#c2dcae" opacity="0.4"/>
<rect x="627.4" y="915.6" width="1.2" height="0.9" fill="#c2dcae" opacity="0.4"/>
<rect x="663.0" y="913.2" width="0.7" height="0.8" fill="#c2dcae" opacity="0.4"/>
<rect x="806.4" y="928.3" width="1.1" height="1.2" fill="#c2dcae" opacity="0.4"/>
<rect x="494.3" y="907.9" width="1.0" height="1.3" fill="#c2dcae" opacity="0.4"/>
<rect x="773.2" y="929.3" width="1.2" height="0.9" fill="#c2dcae" opacity="0.4"/>
<rect x="899.6" y="943.6" width="1.3" height="1.0" fill="#c2dcae" opacity="0.4"/>
<rect x="683.6" y="949.1" width="1.1" height="1.3" fill="#c2dcae" opacity="0.4"/>
<rect x="504.2" y="955.0" width="1.0" height="1.1" fill="#c2dcae" opacity="0.4"/>
<rect x="428.9" y="924.9" width="1.4" height="0.7" fill="#c2dcae" opacity="0.4"/>
<rect x="455.1" y="935.8" width="1.2" height="1.2" fill="#c2dcae" opacity="0.4"/>
<rect x="746.7" y="949.9" width="1.2" height="0.8" fill="#c2dcae" opacity="0.4"/>
<rect x="663.4" y="915.2" width="0.7" height="1.1" fill="#c2dcae" opacity="0.4"/>
<rect x="915.2" y="929.9" width="1.3" height="1.2" fill="#c2dcae" opacity="0.4"/>
<rect x="366.8" y="936.4" width="1.5" height="1.2" fill="#c2dcae" opacity="0.4"/>
<rect x="519.1" y="964.5" width="1.2" height="1.4" fill="#c2dcae" opacity="0.4"/>
<rect x="841.3" y="939.1" width="1.1" height="1.1" fill="#c2dcae" opacity="0.4"/>
<rect x="531.9" y="960.4" width="0.8" height="1.5" fill="#c2dcae" opacity="0.4"/>
<rect x="543.5" y="927.7" width="1.2" height="0.9" fill="#c2dcae" opacity="0.4"/>
<rect x="700.7" y="897.3" width="1.4" height="0.8" fill="#c2dcae" opacity="0.4"/>
<rect x="855.9" y="960.8" width="1.3" height="1.3" fill="#c2dcae" opacity="0.4"/>
<rect x="454.2" y="937.9" width="0.7" height="1.3" fill="#c2dcae" opacity="0.4"/>
<rect x="805.9" y="909.6" width="1.1" height="0.8" fill="#c2dcae" opacity="0.4"/>
<rect x="735.5" y="948.1" width="0.7" height="1.2" fill="#c2dcae" opacity="0.4"/>
<rect x="859.0" y="907.1" width="1.4" height="0.9" fill="#c2dcae" opacity="0.4"/>
<rect x="354.6" y="899.6" width="1.3" height="0.9" fill="#c2dcae" opacity="0.4"/>
<rect x="847.9" y="927.4" width="0.8" height="1.4" fill="#c2dcae" opacity="0.4"/>
<rect x="536.7" y="903.4" width="0.7" height="0.9" fill="#c2dcae" opacity="0.4"/>
<rect x="615.0" y="932.2" width="1.2" height="0.8" fill="#c2dcae" opacity="0.4"/>
<rect x="346.6" y="963.1" width="1.0" height="1.3" fill="#c2dcae" opacity="0.4"/>
<rect x="868.4" y="939.9" width="1.3" height="0.9" fill="#c2dcae" opacity="0.4"/>
<rect x="468.9" y="933.5" width="1.5" height="1.5" fill="#c2dcae" opacity="0.4"/>
<rect x="480.5" y="943.1" width="0.9" height="1.0" fill="#c2dcae" opacity="0.4"/>
<rect x="509.6" y="971.6" width="1.0" height="1.1" fill="#c2dcae" opacity="0.4"/>
<rect x="395.5" y="960.0" width="0.8" height="1.4" fill="#c2dcae" opacity="0.4"/>
<rect x="485.2" y="911.6" width="0.7" height="1.0" fill="#c2dcae" opacity="0.4"/>
<rect x="904.1" y="921.6" width="1.0" height="1.3" fill="#c2dcae" opacity="0.4"/>
<rect x="479.6" y="952.8" width="1.5" height="1.4" fill="#c2dcae" opacity="0.4"/>
<rect x="368.6" y="954.7" width="1.3" height="1.3" fill="#c2dcae" opacity="0.4"/>
<rect x="683.4" y="901.4" width="1.2" height="1.2" fill="#c2dcae" opacity="0.4"/>
<rect x="629.1" y="953.6" width="0.8" height="1.0" fill="#c2dcae" opacity="0.4"/>
<rect x="714.7" y="963.9" width="1.5" height="1.4" fill="#c2dcae" opacity="0.4"/>
<rect x="498.6" y="926.3" width="1.1" height="1.1" fill="#c2dcae" opacity="0.4"/>
<rect x="391.3" y="921.9" width="1.4" height="1.0" fill="#c2dcae" opacity="0.4"/>
<rect x="859.4" y="963.4" width="1.1" height="1.4" fill="#c2dcae" opacity="0.4"/>
<rect x="916.2" y="893.8" width="1.2" height="1.5" fill="#c2dcae" opacity="0.4"/>
<rect x="526.5" y="921.7" width="0.8" height="1.4" fill="#c2dcae" opacity="0.4"/>
<rect x="674.6" y="939.8" width="1.2" height="1.4" fill="#c2dcae" opacity="0.4"/>
<rect x="647.4" y="936.4" width="1.1" height="1.0" fill="#c2dcae" opacity="0.4"/>
<rect x="912.0" y="944.1" width="1.1" height="0.8" fill="#c2dcae" opacity="0.4"/>
<rect x="718.9" y="896.5" width="1.1" height="0.9" fill="#c2dcae" opacity="0.4"/>
<rect x="574.3" y="910.5" width="0.9" height="1.0" fill="#c2dcae" opacity="0.4"/>
<rect x="415.1" y="912.9" width="1.3" height="0.8" fill="#c2dcae" opacity="0.4"/>
<rect x="840.1" y="925.5" width="0.9" height="1.3" fill="#c2dcae" opacity="0.4"/>
<rect x="565.2" y="922.0" width="0.7" height="0.8" fill="#c2dcae" opacity="0.4"/>
<rect x="893.3" y="932.0" width="1.0" height="1.2" fill="#c2dcae" opacity="0.4"/>
<rect x="397.4" y="905.0" width="1.4" height="1.2" fill="#c2dcae" opacity="0.4"/>
<rect x="531.6" y="961.1" width="0.9" height="1.1" fill="#c2dcae" opacity="0.4"/>
<rect x="804.2" y="960.3" width="0.9" height="1.5" fill="#c2dcae" opacity="0.4"/>
<rect x="467.9" y="914.0" width="1.1" height="1.1" fill="#c2dcae" opacity="0.4"/>
<rect x="661.0" y="929.9" width="1.3" height="0.9" fill="#c2dcae" opacity="0.4"/>
<rect x="599.5" y="946.4" width="1.4" height="0.9" fill="#c2dcae" opacity="0.4"/>
<rect x="552.7" y="930.1" width="0.9" height="1.1" fill="#c2dcae" opacity="0.4"/>
<rect x="894.9" y="911.4" width="1.4" height="1.4" fill="#c2dcae" opacity="0.4"/>
<rect x="631.0" y="920.7" width="0.8" height="1.1" fill="#c2dcae" opacity="0.4"/>
<rect x="839.1" y="923.2" width="0.9" height="1.4" fill="#c2dcae" opacity="0.4"/>
<rect x="437.1" y="937.5" width="1.3" height="1.1" fill="#c2dcae" opacity="0.4"/>
<rect x="516.4" y="940.3" width="1.0" height="1.2" fill="#c2dcae" opacity="0.4"/>
<rect x="810.5" y="956.4" width="1.3" height="0.8" fill="#c2dcae" opacity="0.4"/>
<rect x="502.8" y="945.8" width="1.2" height="1.4" fill="#c2dcae" opacity="0.4"/>
<rect x="602.6" y="897.8" width="0.8" height="0.7" fill="#c2dcae" opacity="0.4"/>
<rect x="659.8" y="918.6" width="0.7" height="1.4" fill="#c2dcae" opacity="0.4"/>
<rect x="382.9" y="920.5" width="1.3" height="1.2" fill="#c2dcae" opacity="0.4"/>
<rect x="472.9" y="969.0" width="1.1" height="1.4" fill="#c2dcae" opacity="0.4"/>
<rect x="591.9" y="944.1" width="1.5" height="0.7" fill="#c2dcae" opacity="0.4"/>
<rect x="677.1" y="939.7" width="1.5" height="1.2" fill="#c2dcae" opacity="0.4"/>
<rect x="498.1" y="903.9" width="1.1" height="0.8" fill="#c2dcae" opacity="0.4"/>
<rect x="550.2" y="968.7" width="0.8" height="0.9" fill="#c2dcae" opacity="0.4"/>
<rect x="736.7" y="932.8" width="1.4" height="1.0" fill="#c2dcae" opacity="0.4"/>
<rect x="788.6" y="925.7" width="1.5" height="1.4" fill="#c2dcae" opacity="0.4"/>
<rect x="458.4" y="922.4" width="1.1" height="1.1" fill="#c2dcae" opacity="0.4"/>
<rect x="691.0" y="947.6" width="0.8" height="1.2" fill="#c2dcae" opacity="0.4"/>
<rect x="826.7" y="925.5" width="0.9" height="0.9" fill="#c2dcae" opacity="0.4"/>
<rect x="700.4" y="902.5" width="0.9" height="0.9" fill="#c2dcae" opacity="0.4"/>
<rect x="747.9" y="951.7" width="1.1" height="0.8" fill="#c2dcae" opacity="0.4"/>
<rect x="551.9" y="897.8" width="1.5" height="1.1" fill="#c2dcae" opacity="0.4"/>
<rect x="835.2" y="912.4" width="0.9" height="0.8" fill="#c2dcae" opacity="0.4"/>
<rect x="571.9" y="947.2" width="1.1" height="1.0" fill="#c2dcae" opacity="0.4"/>
<rect x="420.1" y="914.5" width="1.3" height="0.8" fill="#c2dcae" opacity="0.4"/>
<rect x="925.1" y="959.2" width="0.8" height="0.7" fill="#c2dcae" opacity="0.4"/>
<rect x="827.3" y="896.4" width="1.2" height="1.1" fill="#c2dcae" opacity="0.4"/>
<rect x="586.2" y="939.0" width="0.7" height="1.3" fill="#c2dcae" opacity="0.4"/>
<rect x="836.9" y="896.0" width="0.9" height="1.4" fill="#c2dcae" opacity="0.4"/>
<rect x="460.0" y="904.4" width="1.3" height="1.5" fill="#c2dcae" opacity="0.4"/>
<rect x="923.0" y="908.3" width="0.8" height="0.7" fill="#c2dcae" opacity="0.4"/>
<rect x="414.2" y="918.9" width="1.5" height="1.3" fill="#c2dcae" opacity="0.4"/>
<rect x="450.8" y="924.3" width="1.1" height="0.8" fill="#c2dcae" opacity="0.4"/>
<rect x="378.7" y="908.1" width="0.9" height="0.7" fill="#c2dcae" opacity="0.4"/>
<rect x="915.2" y="969.9" width="1.1" height="1.0" fill="#c2dcae" opacity="0.4"/>
<rect x="668.9" y="958.9" width="1.0" height="1.4" fill="#c2dcae" opacity="0.4"/>
<rect x="904.7" y="914.9" width="1.2" height="1.5" fill="#c2dcae" opacity="0.4"/>
<rect x="522.9" y="971.3" width="1.1" height="1.2" fill="#c2dcae" opacity="0.4"/>
<rect x="400.9" y="924.2" width="1.2" height="0.9" fill="#c2dcae" opacity="0.4"/>
<rect x="912.7" y="924.3" width="1.2" height="1.3" fill="#c2dcae" opacity="0.4"/>
<rect x="527.9" y="948.4" width="1.3" height="1.3" fill="#c2dcae" opacity="0.4"/>
<rect x="531.0" y="919.8" width="1.2" height="1.1" fill="#c2dcae" opacity="0.4"/>
<rect x="621.5" y="937.7" width="1.3" height="0.8" fill="#c2dcae" opacity="0.4"/>
<rect x="469.2" y="903.0" width="1.1" height="0.9" fill="#c2dcae" opacity="0.4"/>
<rect x="889.2" y="909.3" width="1.1" height="1.3" fill="#c2dcae" opacity="0.4"/>
<rect x="510.5" y="899.3" width="0.9" height="1.3" fill="#c2dcae" opacity="0.4"/>
<rect x="549.4" y="967.7" width="0.8" height="0.9" fill="#c2dcae" opacity="0.4"/>
<rect x="634.3" y="919.4" width="0.9" height="0.8" fill="#c2dcae" opacity="0.4"/>
<rect x="640.8" y="952.2" width="1.0" height="1.5" fill="#c2dcae" opacity="0.4"/>
<rect x="708.9" y="921.6" width="1.0" height="0.9" fill="#c2dcae" opacity="0.4"/>
<rect x="400.6" y="930.3" width="1.1" height="1.3" fill="#c2dcae" opacity="0.4"/>
<rect x="390.8" y="895.4" width="1.4" height="1.0" fill="#c2dcae" opacity="0.4"/>
<rect x="769.0" y="962.3" width="0.9" height="0.8" fill="#c2dcae" opacity="0.4"/>
<path d="M103 928 L149 930 L140 960 L130 957 L98 944Z" fill="#d3e6bd" opacity="0.55" stroke="#b8a898" stroke-width="0.6"/>
<path d="M421 913 Q435 908 447 914 L449 925 Q435 928 421 923Z" fill="#cfe3b8" opacity="0.8"/>
<path d="M857 908 Q866 905 873 910 L872 917 Q862 918 857 914Z" fill="#c6dfae" opacity="0.9"/>
<rect x="555" y="897" width="50" height="30" fill="#e3e0dc" opacity="0.6"/>
<rect x="335" y="948" width="45" height="24" fill="#e3e0dc" opacity="0.6"/>
<rect x="825" y="905" width="40" height="35" fill="#e3e0dc" opacity="0.6"/>
<rect x="150" y="885" width="35" height="15" fill="#e3e0dc" opacity="0.6"/>
<path d="M165 875 Q172 872 180 876 L179 882 Q170 884 165 880Z" fill="#aad3df"/><path d="M183 865 L183 884 L186 893 L200 896 L212 903 L238 905 L262 905 L283 902 L282 893 L320 884.5 L354 872 L372 865Z" fill="#aad3df"/>
<path d="M552 865 L566 882 L587 891 L598 888 L632 885.6 L678 884.5 L715 888 L735 886 L750 876 L758 865Z" fill="#aad3df"/>
<path d="M852 883 L880 881 L930 879 L930 894 L920 894 L918.6 904 L910 908.5 L893 913 L870 905 L851 897Z" fill="#aad3df"/>
<path d="M370 910 Q374 905 377 909 L376 916 Q372 918 370 914Z" fill="#aad3df"/>
<path d="M779 913 L784 915 L791 929 L787 930Z" fill="#aad3df"/>
<path d="M95.0 870.0 L84.0 888.0 L76.0 900.0" fill="none" stroke="#9fcde0" stroke-width="0.9"/>
<path d="M151.0 933.0 L165.0 948.0 L170.0 972.0" fill="none" stroke="#9fcde0" stroke-width="0.9"/>
<path d="M214.0 945.0 L236.0 952.0 L259.0 951.0" fill="none" stroke="#9fcde0" stroke-width="0.9"/>
<path d="M381.0 929.0 L406.0 927.0 L425.5 931.5 L428.0 940.6" fill="none" stroke="#9fcde0" stroke-width="0.9"/>
<path d="M505.0 923.0 L530.0 925.0 L541.0 928.0" fill="none" stroke="#9fcde0" stroke-width="0.9"/>
<path d="M650.0 940.0 L663.0 933.0" fill="none" stroke="#9fcde0" stroke-width="0.9"/>
<path d="M880.0 940.0 L888.0 955.0" fill="none" stroke="#9fcde0" stroke-width="0.9"/>
<path d="M303.0 865.0 L314.0 893.6 L315.5 911.0 L312.0 922.0 L322.4 936.0 L319.0 945.0 L323.5 956.7 L337.0 964.7 L342.0 972.0" fill="none" stroke="#9b93b8" stroke-width="2" opacity="0.85"/>
<path d="M97.0 867.0 L103.0 888.0 L111.0 902.0 L237.0 972.0" fill="none" stroke="#c8a8c8" stroke-width="0.7" stroke-dasharray="2 1.5"/>
<path d="M85.6 867.0 L91.0 892.5 L92.0 908.5" fill="none" stroke="#f3c17f" stroke-width="1"/>
<path d="M65.0 908.0 L91.0 900.5" fill="none" stroke="#f3c17f" stroke-width="1"/>
<path d="M90.0 891.0 L154.0 875.0" fill="none" stroke="#f3c17f" stroke-width="1"/>
<path d="M99.0 867.0 L138.0 883.0" fill="none" stroke="#f3c17f" stroke-width="1"/>
<path d="M163.5 892.5 L152.0 929.0 L127.0 972.0" fill="none" stroke="#f3c17f" stroke-width="1"/>
<path d="M185.0 898.0 L175.0 929.0 L184.0 958.0" fill="none" stroke="#f3c17f" stroke-width="1"/>
<path d="M184.0 908.5 L232.0 934.0 L233.4 940.6 L285.0 935.0" fill="none" stroke="#f3c17f" stroke-width="1"/>
<path d="M76.5 921.0 L74.0 945.0 L82.0 972.0" fill="none" stroke="#f3c17f" stroke-width="1"/>
<path d="M150.0 968.0 L200.0 953.0 L207.0 972.0" fill="none" stroke="#f3c17f" stroke-width="1"/>
<path d="M226.0 968.0 L248.0 965.0 L285.0 963.0" fill="none" stroke="#f3c17f" stroke-width="1"/>
<path d="M319.0 885.6 L319.0 908.5" fill="none" stroke="#f3c17f" stroke-width="1"/>
<path d="M435.8 898.0 L435.8 944.0" fill="none" stroke="#f3c17f" stroke-width="1"/>
<path d="M346.5 929.0 L355.6 938.0 L358.0 972.0" fill="none" stroke="#f3c17f" stroke-width="1"/>
<path d="M360.0 955.0 L380.0 960.0 L400.0 958.0" fill="none" stroke="#f3c17f" stroke-width="1"/>
<path d="M609.6 896.0 L609.6 934.0" fill="none" stroke="#f3c17f" stroke-width="1"/>
<path d="M654.0 893.6 L651.0 933.8 L650.0 972.0" fill="none" stroke="#f3c17f" stroke-width="1"/>
<path d="M676.0 893.6 L672.6 939.5 L670.0 972.0" fill="none" stroke="#f3c17f" stroke-width="1"/>
<path d="M690.0 901.7 L690.0 939.5 L692.0 972.0" fill="none" stroke="#f3c17f" stroke-width="1"/>
<path d="M707.0 899.0 L712.0 934.0 L713.0 972.0" fill="none" stroke="#f3c17f" stroke-width="1"/>
<path d="M495.0 939.5 L518.0 931.5 L541.0 927.0" fill="none" stroke="#f3c17f" stroke-width="1"/>
<path d="M765.0 894.0 L769.6 933.8 L767.3 972.0" fill="none" stroke="#f3c17f" stroke-width="1"/>
<path d="M805.0 894.0 L801.7 929.0" fill="none" stroke="#f3c17f" stroke-width="1"/>
<path d="M727.0 899.4 L733.0 929.0 L734.0 943.0" fill="none" stroke="#f3c17f" stroke-width="1"/>
<path d="M820.0 945.0 L850.0 940.0 L880.0 942.0 L930.0 937.0" fill="none" stroke="#f3c17f" stroke-width="1"/>
<path d="M800.0 955.0 L830.0 950.0 L870.0 953.0" fill="none" stroke="#f3c17f" stroke-width="1"/>
<path d="M880.0 912.0 L895.0 935.0 L905.0 972.0" fill="none" stroke="#f3c17f" stroke-width="1"/>
<path d="M900.0 925.0 L930.0 928.0" fill="none" stroke="#f3c17f" stroke-width="1"/>
<path d="M380.0 898.0 L395.0 896.0 L420.0 890.0 L470.0 885.0" fill="none" stroke="#f3c17f" stroke-width="1"/>
<path d="M470.0 900.0 L500.0 905.0 L520.0 908.0" fill="none" stroke="#f3c17f" stroke-width="1"/>
<path d="M560.0 930.0 L575.0 945.0 L580.0 972.0" fill="none" stroke="#f3c17f" stroke-width="1"/>
<path d="M600.0 935.0 L630.0 952.0 L640.0 972.0" fill="none" stroke="#f3c17f" stroke-width="1"/>
<path d="M440.0 945.0 L470.0 942.0" fill="none" stroke="#f3c17f" stroke-width="1"/>
<path d="M230.0 880.0 L260.0 868.0" fill="none" stroke="#f3c17f" stroke-width="1"/>
<path d="M195.0 920.0 L215.0 930.0" fill="none" stroke="#f3c17f" stroke-width="1"/>
<path d="M250.0 915.0 L262.0 925.0" fill="none" stroke="#f3c17f" stroke-width="1"/>
<path d="M615.0 905.0 L640.0 908.0 L655.0 903.0" fill="none" stroke="#f3c17f" stroke-width="1"/>
<path d="M860.0 950.0 L875.0 960.0 L880.0 972.0" fill="none" stroke="#f3c17f" stroke-width="1"/>
<path d="M830.0 960.0 L835.0 972.0" fill="none" stroke="#f3c17f" stroke-width="1"/>
<path d="M740.0 955.0 L760.0 950.0" fill="none" stroke="#f3c17f" stroke-width="1"/>
<path d="M590.0 925.0 L605.0 932.6 L644.0 933.8 L657.7 938.3 L684.0 933.8" fill="none" stroke="#f3c17f" stroke-width="1"/>
<path d="M560.0 905.0 L600.0 903.0" fill="none" stroke="#f3c17f" stroke-width="0.9"/>
<path d="M555.0 915.0 L605.0 912.0" fill="none" stroke="#f3c17f" stroke-width="0.9"/>
<path d="M570.0 895.0 L572.0 930.0" fill="none" stroke="#f3c17f" stroke-width="0.9"/>
<path d="M582.0 898.0 L584.0 935.0" fill="none" stroke="#f3c17f" stroke-width="0.9"/>
<path d="M340.0 955.0 L380.0 953.0" fill="none" stroke="#f3c17f" stroke-width="0.9"/>
<path d="M345.0 962.0 L385.0 965.0" fill="none" stroke="#f3c17f" stroke-width="0.9"/>
<path d="M355.0 950.0 L352.0 972.0" fill="none" stroke="#f3c17f" stroke-width="0.9"/>
<path d="M815.0 930.0 L870.0 928.0" fill="none" stroke="#f3c17f" stroke-width="0.9"/>
<path d="M820.0 948.0 L875.0 946.0" fill="none" stroke="#f3c17f" stroke-width="0.9"/>
<path d="M830.0 915.0 L832.0 960.0" fill="none" stroke="#f3c17f" stroke-width="0.9"/>
<path d="M855.0 912.0 L858.0 965.0" fill="none" stroke="#f3c17f" stroke-width="0.9"/>
<path d="M812.0 955.0 L840.0 965.0" fill="none" stroke="#f3c17f" stroke-width="0.9"/>
<path d="M870.0 935.0 L900.0 938.0 L930.0 945.0" fill="none" stroke="#f3c17f" stroke-width="0.9"/>
<path d="M560.0 935.0 L600.0 948.0" fill="none" stroke="#f3c17f" stroke-width="0.9"/>
<path d="M150.0 880.0 L170.0 890.0" fill="none" stroke="#f3c17f" stroke-width="0.9"/>
<path d="M140.0 890.0 L160.0 895.0" fill="none" stroke="#f3c17f" stroke-width="0.9"/>
<path d="M846.0 865.0 L846.4 894.0" fill="none" stroke="#e4859a" stroke-width="1.3"/>
<path d="M794.8 865.0 L817.7 894.8" fill="none" stroke="#7b7b7b" stroke-width="1.0"/>
<path d="M800.0 866.0 L830.0 880.0 L846.0 894.0" fill="none" stroke="#eea08c" stroke-width="1.0"/>
<path d="M319.0 865.0 L319.0 885.6" fill="none" stroke="#f3c17f" stroke-width="1.0"/>
<path d="M380.0 868.0 L378.0 900.0 L383.0 907.0" fill="none" stroke="#7b7b7b" stroke-width="1.0"/>
<path d="M505.0 865.0 L520.0 880.0 L540.0 893.0" fill="none" stroke="#f3c17f" stroke-width="1.0"/>
<path d="M600.0 870.0 L620.0 890.0" fill="none" stroke="#f3c17f" stroke-width="1.0"/>
<path d="M578.0 865.0 L568.0 893.0" fill="none" stroke="#e4859a" stroke-width="1.3"/>
<path d="M230.0 865.0 L240.0 880.0" fill="none" stroke="#f3c17f" stroke-width="1.0"/>
<path d="M420.0 870.0 L470.0 868.0 L500.0 875.0" fill="none" stroke="#f3c17f" stroke-width="0.9"/>
<path d="M760.0 870.0 L790.0 880.0" fill="none" stroke="#f3c17f" stroke-width="0.9"/>
<path d="M880.0 868.0 L900.0 880.0 L930.0 878.0" fill="none" stroke="#f3c17f" stroke-width="0.9"/>
<path d="M658.0 866.0 L662.0 893.0" fill="none" stroke="#f3c17f" stroke-width="0.9"/>
<path d="M690.0 870.0 L700.0 893.0" fill="none" stroke="#f3c17f" stroke-width="0.9"/>
<path d="M379.7 908.5 L379.7 972.0" fill="none" stroke="#eea08c" stroke-width="1"/>
<path d="M495.0 894.0 L512.0 897.0 L512.0 900.5 L550.0 907.4 L551.0 911.0" fill="none" stroke="#eea08c" stroke-width="1"/>
<path d="M710.0 899.4 L727.0 894.8 L738.6 896.0 L758.0 908.5 L790.0 909.7 L801.7 908.5" fill="none" stroke="#eea08c" stroke-width="1"/>
<path d="M767.0 967.0 L790.0 964.7 L813.0 968.0" fill="none" stroke="#eea08c" stroke-width="1"/>
<path d="M605.0 932.0 L644.0 934.0 L658.0 939.0 L684.0 934.0" fill="none" stroke="#eea08c" stroke-width="1"/>
<path d="M410.0 908.0 L440.0 905.0 L470.0 905.0" fill="none" stroke="#eea08c" stroke-width="1"/>
<path d="M65.0 880.0 L95.0 878.0" fill="none" stroke="#eea08c" stroke-width="1"/>
<path d="M65.0 912.0 L97.0 909.0 L120.0 905.0 L139.0 899.0 L150.0 896.0 L152.0 893.0 L175.0 902.0 L180.0 895.0 L181.0 892.0" fill="none" stroke="#e4859a" stroke-width="1.4" stroke-linejoin="round"/>
<path d="M195.6 894.0 L229.0 903.0 L260.0 905.0 L285.0 908.5 L299.5 913.0 L314.0 914.3 L325.8 924.6 L327.0 939.5" fill="none" stroke="#e4859a" stroke-width="1.4" stroke-linejoin="round"/>
<path d="M178.0 874.0 L183.0 884.0" fill="none" stroke="#e4859a" stroke-width="1.4" stroke-linejoin="round"/>
<path d="M148.6 899.0 L150.0 908.5 L155.5 913.0 L156.7 915.0" fill="none" stroke="#e4859a" stroke-width="1.4" stroke-linejoin="round"/>
<path d="M367.0 963.5 L410.6 956.7 L433.5 948.6 L494.0 945.0" fill="none" stroke="#e4859a" stroke-width="1.4" stroke-linejoin="round"/>
<path d="M299.5 938.0 L331.5 972.0" fill="none" stroke="#e4859a" stroke-width="1.4" stroke-linejoin="round"/>
<path d="M339.6 955.5 L354.5 952.0 L367.0 961.0 L367.0 972.0" fill="none" stroke="#e4859a" stroke-width="1.4" stroke-linejoin="round"/>
<path d="M566.0 896.0 L563.0 905.0 L566.0 915.0 L574.0 923.0 L588.0 924.0 L592.0 912.0 L590.0 897.0 L578.0 899.0 L566.0 896.0" fill="none" stroke="#e4859a" stroke-width="1.4" stroke-linejoin="round"/>
<path d="M589.0 898.0 L615.0 896.0 L638.0 894.0 L678.0 891.4 L690.0 898.0 L715.0 899.0" fill="none" stroke="#e4859a" stroke-width="1.4" stroke-linejoin="round"/>
<path d="M558.0 917.7 L518.0 930.3 L513.0 942.0" fill="none" stroke="#e4859a" stroke-width="1.4" stroke-linejoin="round"/>
<path d="M540.8 940.6 L569.5 938.3 L592.4 941.8" fill="none" stroke="#e4859a" stroke-width="1.4" stroke-linejoin="round"/>
<path d="M590.0 916.6 L605.0 943.0" fill="none" stroke="#e4859a" stroke-width="1.4" stroke-linejoin="round"/>
<path d="M752.4 943.0 L778.8 933.8 L801.7 929.0 L818.9 924.6 L836.0 922.3 L862.4 920.0 L930.0 924.6" fill="none" stroke="#e4859a" stroke-width="1.4" stroke-linejoin="round"/>
<path d="M846.4 894.0 L849.8 914.3 L840.6 929.0 L845.0 947.5 L846.4 972.0" fill="none" stroke="#e4859a" stroke-width="1.4" stroke-linejoin="round"/>
<path d="M805.0 905.0 L805.0 914.0 L817.7 923.4 L836.0 922.3" fill="none" stroke="#e4859a" stroke-width="1.4" stroke-linejoin="round"/>
<path d="M862.4 920.0 L862.4 945.0 L853.0 950.0" fill="none" stroke="#e4859a" stroke-width="1.4" stroke-linejoin="round"/>
<path d="M862.4 945.0 L927.7 972.0" fill="none" stroke="#e4859a" stroke-width="1.4" stroke-linejoin="round"/>
<path d="M820.0 894.8 L830.3 910.8 L849.8 914.3" fill="none" stroke="#e4859a" stroke-width="1.4" stroke-linejoin="round"/>
<path d="M345.0 925.0 L370.0 932.0 L390.0 935.0" fill="none" stroke="#e4859a" stroke-width="1.4" stroke-linejoin="round"/>
<path d="M600.0 900.0 L600.0 925.0" fill="none" stroke="#e4859a" stroke-width="1.4" stroke-linejoin="round"/>
<path d="M65.0 902.0 L70.7 900.5 L80.0 906.0 L91.0 913.0" fill="none" stroke="#7b7b7b" stroke-width="1.1" stroke-linejoin="round"/>
<path d="M98.0 911.0 L106.0 899.0 L114.0 891.0 L134.0 889.0 L143.0 885.6 L153.0 880.0 L163.5 877.6 L168.0 875.0" fill="none" stroke="#7b7b7b" stroke-width="1.1" stroke-linejoin="round"/>
<path d="M170.4 889.0 L184.0 898.0 L199.0 900.5 L235.7 932.6 L259.8 947.5 L259.8 960.0" fill="none" stroke="#7b7b7b" stroke-width="1.1" stroke-linejoin="round"/>
<path d="M117.7 920.0 L149.8 930.0 L126.9 972.0" fill="none" stroke="#7b7b7b" stroke-width="1.1" stroke-linejoin="round"/>
<path d="M214.0 972.0 L220.8 959.5 L285.0 960.0 L330.0 962.0 L345.0 966.0" fill="none" stroke="#7b7b7b" stroke-width="1.1" stroke-linejoin="round"/>
<path d="M314.0 923.4 L383.0 907.4 L440.0 894.8 L497.7 890.2" fill="none" stroke="#7b7b7b" stroke-width="1.1" stroke-linejoin="round"/>
<path d="M395.0 972.0 L460.0 955.0 L495.0 938.3 L535.0 924.6 L575.0 926.9 L596.0 925.7 L621.0 931.5 L638.0 929.0 L653.0 935.0 L661.0 930.3 L672.6 937.0 L695.5 936.0 L715.0 929.0" fill="none" stroke="#7b7b7b" stroke-width="1.1" stroke-linejoin="round"/>
<path d="M590.0 916.6 L609.6 924.6 L621.0 931.5" fill="none" stroke="#7b7b7b" stroke-width="1.1" stroke-linejoin="round"/>
<path d="M575.0 893.6 L552.0 939.5" fill="none" stroke="#7b7b7b" stroke-width="1.1" stroke-linejoin="round"/>
<path d="M685.0 897.0 L674.0 933.8" fill="none" stroke="#7b7b7b" stroke-width="1.1" stroke-linejoin="round"/>
<path d="M495.0 893.6 L520.0 899.0" fill="none" stroke="#7b7b7b" stroke-width="1.1" stroke-linejoin="round"/>
<path d="M683.0 893.6 L699.0 904.0 L715.0 902.8" fill="none" stroke="#7b7b7b" stroke-width="1.1" stroke-linejoin="round"/>
<path d="M710.0 930.3 L715.7 933.8 L738.6 937.2 L761.6 938.3 L790.0 930.3 L818.9 930.3 L838.0 935.0 L845.0 929.0 L856.7 935.0 L887.6 930.3 L930.0 924.6" fill="none" stroke="#7b7b7b" stroke-width="1.1" stroke-linejoin="round"/>
<path d="M808.5 905.0 L836.0 933.8" fill="none" stroke="#7b7b7b" stroke-width="1.1" stroke-linejoin="round"/>
<path d="M817.7 894.8 L824.6 902.8 L835.0 914.3 L836.0 933.0" fill="none" stroke="#7b7b7b" stroke-width="1.1" stroke-linejoin="round"/>
<path d="M843.0 894.0 L835.0 914.3" fill="none" stroke="#7b7b7b" stroke-width="1.1" stroke-linejoin="round"/>
<path d="M771.9 963.5 L776.5 952.0 L792.5 944.0 L808.5 946.4 L820.0 938.3" fill="none" stroke="#7b7b7b" stroke-width="1.1" stroke-linejoin="round"/>
<path d="M846.4 945.0 L853.0 950.0 L856.7 951.0 L859.0 972.0" fill="none" stroke="#7b7b7b" stroke-width="1.1" stroke-linejoin="round"/>
<path d="M710.0 902.8 L720.3 896.0" fill="none" stroke="#7b7b7b" stroke-width="1.1" stroke-linejoin="round"/>
<path d="M340.0 948.0 L350.0 940.0 L362.0 938.0" fill="none" stroke="#7b7b7b" stroke-width="1.1" stroke-linejoin="round"/>
<path d="M305.0 945.0 L306.0 972.0" fill="none" stroke="#7b7b7b" stroke-width="1.1" stroke-linejoin="round"/>
<path d="M886.5 931.5 V968 H930" fill="none" stroke="#c9bfb3" stroke-width="0.8"/>
<text x="155.0" y="873.6" font-family="Liberation Sans" font-size="10.5" fill="#333" stroke="#fff" stroke-width="2.4" stroke-linejoin="round" paint-order="stroke">Burlington</text>
<text x="138.3" y="892.0" font-family="Liberation Sans" font-size="13.6" fill="#333" stroke="#fff" stroke-width="2.4" stroke-linejoin="round" paint-order="stroke">Hamilton</text>
<text x="72.4" y="919.8" font-family="Liberation Sans" font-size="10.7" fill="#333" stroke="#fff" stroke-width="2.4" stroke-linejoin="round" paint-order="stroke">Brantford</text>
<text x="247.2" y="915.4" font-family="Liberation Sans" font-size="10.3" fill="#333" stroke="#fff" stroke-width="2.4" stroke-linejoin="round" paint-order="stroke">St. Catharines</text>
<text x="284.0" y="933.8" font-family="Liberation Sans" font-size="10.1" fill="#333" stroke="#fff" stroke-width="2.4" stroke-linejoin="round" paint-order="stroke">Niagara Falls</text>
<text x="320.7" y="949.8" font-family="Liberation Sans" font-size="10.3" fill="#333" stroke="#fff" stroke-width="2.4" stroke-linejoin="round" paint-order="stroke">Tonawanda</text>
<text x="259.8" y="956.7" font-family="Liberation Sans" font-size="10.3" fill="#333" stroke="#fff" stroke-width="2.4" stroke-linejoin="round" paint-order="stroke">Welland</text>
<text x="553.4" y="915.4" font-family="Liberation Sans" font-size="10.2" fill="#333" stroke="#fff" stroke-width="2.4" stroke-linejoin="round" paint-order="stroke">Rochester</text>
<text x="822.9" y="943.0" font-family="Liberation Sans" font-size="10.0" fill="#333" stroke="#fff" stroke-width="2.4" stroke-linejoin="round" paint-order="stroke">Syracuse</text>
<circle cx="471.5" cy="927.4" r="2.7" fill="#1a90f4"/>
<circle cx="462.2" cy="936.3" r="2.7" fill="#1a90f4"/>
<circle cx="464.5" cy="939.0" r="2.7" fill="#1a90f4"/>
<circle cx="471.5" cy="945.9" r="2.7" fill="#1a90f4"/>
<circle cx="413.3" cy="944.4" r="2.7" fill="#1a90f4"/>
<circle cx="441.5" cy="946.0" r="2.7" fill="#1a90f4"/>
<circle cx="445.0" cy="951.0" r="2.7" fill="#1a90f4"/>
<circle cx="415.6" cy="960.0" r="2.7" fill="#1a90f4"/>
<circle cx="431.1" cy="957.0" r="2.7" fill="#1a90f4"/>
<circle cx="454.0" cy="959.3" r="2.7" fill="#1a90f4"/>
<circle cx="428.0" cy="962.0" r="2.7" fill="#1a90f4"/>
<circle cx="433.0" cy="961.0" r="2.7" fill="#1a90f4"/>
<circle cx="437.0" cy="964.0" r="2.7" fill="#1a90f4"/>
<circle cx="430.0" cy="966.0" r="2.7" fill="#1a90f4"/>
<circle cx="423.0" cy="966.7" r="2.7" fill="#1a90f4"/>
<circle cx="412.6" cy="967.4" r="2.7" fill="#1a90f4"/>
<circle cx="447.4" cy="963.7" r="2.7" fill="#1a90f4"/>
<circle cx="450.4" cy="966.7" r="2.7" fill="#1a90f4"/>
<circle cx="459.3" cy="967.4" r="2.7" fill="#1a90f4"/>
<circle cx="372.6" cy="970.4" r="2.7" fill="#1a90f4"/>
<circle cx="438.5" cy="971.0" r="2.7" fill="#1a90f4"/>
<circle cx="456.3" cy="970.4" r="2.7" fill="#1a90f4"/>
<circle cx="418.0" cy="968.0" r="2.7" fill="#1a90f4"/>
<circle cx="426.0" cy="969.0" r="2.7" fill="#1a90f4"/>
<circle cx="414.0" cy="971.0" r="2.7" fill="#1a90f4"/>
<circle cx="430.0" cy="971.0" r="2.7" fill="#1a90f4"/>
<circle cx="771.9" cy="964.7" r="2.7" fill="#1a90f4"/>
<circle cx="413.3" cy="944.4" r="2.7" fill="#1a90f4"/>
<circle cx="417.0" cy="948.1" r="2.7" fill="#1a90f4"/>
<circle cx="416.3" cy="951.9" r="2.7" fill="#1a90f4"/>
<circle cx="415.6" cy="955.6" r="2.7" fill="#1a90f4"/>
<circle cx="419.3" cy="953.3" r="2.7" fill="#1a90f4"/>
<circle cx="422.2" cy="945.9" r="2.7" fill="#1a90f4"/>
<circle cx="425.2" cy="944.4" r="2.7" fill="#1a90f4"/>
<circle cx="428.9" cy="944.4" r="2.7" fill="#1a90f4"/>
<circle cx="431.1" cy="947.4" r="2.7" fill="#1a90f4"/>
<circle cx="431.1" cy="951.9" r="2.7" fill="#1a90f4"/>
<circle cx="428.9" cy="953.3" r="2.7" fill="#1a90f4"/>
<circle cx="425.2" cy="953.3" r="2.7" fill="#1a90f4"/>
<circle cx="422.2" cy="950.4" r="2.7" fill="#1a90f4"/>
<circle cx="419.3" cy="950.4" r="2.7" fill="#1a90f4"/>
<circle cx="431.1" cy="957.0" r="2.7" fill="#1a90f4"/>
<circle cx="415.6" cy="960.0" r="2.7" fill="#1a90f4"/>
<circle cx="414.1" cy="948.1" r="2.7" fill="#1a90f4"/>
<circle cx="426.7" cy="948.1" r="2.7" fill="#1a90f4"/>
<circle cx="423.7" cy="948.1" r="2.7" fill="#1a90f4"/>
<circle cx="420.7" cy="944.4" r="2.7" fill="#1a90f4"/>
<circle cx="418.5" cy="946.7" r="2.7" fill="#1a90f4"/>
<circle cx="430.4" cy="949.6" r="2.7" fill="#1a90f4"/>
<circle cx="427.4" cy="951.1" r="2.7" fill="#1a90f4"/>
<circle cx="417.8" cy="956.3" r="2.7" fill="#1a90f4"/>
<circle cx="434.1" cy="963.0" r="2.7" fill="#1a90f4"/>
<circle cx="437.0" cy="963.7" r="2.7" fill="#1a90f4"/>
<circle cx="431.1" cy="962.2" r="2.7" fill="#1a90f4"/>
<circle cx="428.1" cy="964.4" r="2.7" fill="#1a90f4"/>
<circle cx="425.2" cy="965.9" r="2.7" fill="#1a90f4"/>
<circle cx="422.2" cy="967.4" r="2.7" fill="#1a90f4"/>
<circle cx="431.1" cy="966.7" r="2.7" fill="#1a90f4"/>
<circle cx="433.3" cy="965.2" r="2.7" fill="#1a90f4"/>
<circle cx="424.4" cy="968.9" r="2.7" fill="#1a90f4"/>
<circle cx="413.3" cy="967.4" r="2.7" fill="#1a90f4"/>
<circle cx="416.3" cy="970.4" r="2.7" fill="#1a90f4"/>
<circle cx="419.3" cy="970.4" r="2.7" fill="#1a90f4"/>
<circle cx="426.7" cy="970.4" r="2.7" fill="#1a90f4"/>
<circle cx="441.5" cy="945.9" r="2.7" fill="#1a90f4"/>
<circle cx="445.2" cy="951.1" r="2.7" fill="#1a90f4"/>
<circle cx="443.0" cy="948.9" r="2.7" fill="#1a90f4"/>
<circle cx="447.4" cy="963.7" r="2.7" fill="#1a90f4"/>
<circle cx="450.4" cy="966.7" r="2.7" fill="#1a90f4"/>
<circle cx="454.1" cy="959.3" r="2.7" fill="#1a90f4"/>
<circle cx="459.3" cy="967.4" r="2.7" fill="#1a90f4"/>
<circle cx="456.3" cy="970.4" r="2.7" fill="#1a90f4"/>
<circle cx="438.5" cy="971.1" r="2.7" fill="#1a90f4"/>
<circle cx="463.7" cy="938.5" r="2.5" fill="#5cb89a"/>
<circle cx="410.7" cy="955.9" r="2.7" fill="#9fcf4d"/>
<circle cx="726.6" cy="907.4" r="2.6" fill="#f58a5a"/><circle cx="716.3" cy="929.7" r="2.3" fill="#5cb89a"/><circle cx="718.6" cy="929.2" r="2.6" fill="#f58a5a"/>
<rect x="183" y="865" width="747" height="28.5" fill="#ffffff" opacity="0.7"/>
<circle cx="203.0" cy="879.3" r="3" fill="#1f8ef1"/>
<text x="223.0" y="883.9" font-family="Liberation Sans" font-size="12.40" fill="#555">Gas Development</text>
<circle cx="349.3" cy="879.3" r="3" fill="#5cb89a"/>
<text x="370.0" y="883.9" font-family="Liberation Sans" font-size="12.00" fill="#555">Gas Extension</text>
<circle cx="475.0" cy="879.3" r="3" fill="#f58a5a"/>
<text x="495.6" y="883.9" font-family="Liberation Sans" font-size="12.30" fill="#555">Gas Wildcat</text>
<circle cx="587.8" cy="879.3" r="3" fill="#e787c4"/>
<text x="607.9" y="883.9" font-family="Liberation Sans" font-size="12.40" fill="#555">Oil Injection</text>
<circle cx="701.3" cy="879.3" r="3" fill="#9fcf4d"/>
<text x="721.5" y="883.9" font-family="Liberation Sans" font-size="12.60" fill="#555">Oil Development</text>
<circle cx="842.3" cy="879.3" r="3" fill="#fdd33d"/>
<text x="863.0" y="883.9" font-family="Liberation Sans" font-size="12.35" fill="#555">Oil Wildcat</text>
<rect x="494" y="942.8" width="106.5" height="40" fill="#fff" opacity="0.8"/>
<circle cx="510" cy="968" r="2.6" fill="#bfe0fb"/><circle cx="540" cy="965" r="2.6" fill="#bfe0fb"/>
<text x="499.5" y="961" font-family="Liberation Sans" font-size="13.4" fill="#2196f3">Gas Developm...</text>
<path d="M600.5 943.5 H764 V959.5 L770 964.7 L764 970 V990 H600.5Z" fill="#fafafa" stroke="#e6e6e6" stroke-width="1" opacity="0.96"/>
<text x="606" y="961" font-family="Liberation Sans" font-size="13.2" fill="#555">(-76.544934°, 42.944929°)</text>
<text x="709" y="979" font-family="Liberation Sans" font-size="13.2" fill="#555">Fee 1</text>
</svg>

<!-- bottom right: production -->
<div class="card" style="left:990px;top:825px;width:895px;height:200px"></div>
<svg class="abs" style="left:990px;top:825px" width="895" height="147" viewBox="990 825 895 147">
<text x="1437" y="855.5" text-anchor="middle" font-family="Liberation Sans" font-size="17.5" fill="#555">Individual Production: Fee 1</text>
<line x1="1043" x2="1845" y1="876.5" y2="876.5" stroke="#e3e3e3"/>
<text x="1040" y="881.3" text-anchor="end" font-family="Liberation Sans" font-size="13" fill="#555">2500</text>
<line x1="1043" x2="1845" y1="947.5" y2="947.5" stroke="#e3e3e3"/>
<text x="1040" y="952.3" text-anchor="end" font-family="Liberation Sans" font-size="13" fill="#555">2000</text>
<line x1="1086.0" x2="1086.0" y1="876" y2="972" stroke="#e3e3e3"/>
<line x1="1188.3" x2="1188.3" y1="876" y2="972" stroke="#e3e3e3"/>
<line x1="1290.2" x2="1290.2" y1="876" y2="972" stroke="#e3e3e3"/>
<line x1="1392.4" x2="1392.4" y1="876" y2="972" stroke="#e3e3e3"/>
<line x1="1493.4" x2="1493.4" y1="876" y2="972" stroke="#e3e3e3"/>
<line x1="1595.5" x2="1595.5" y1="876" y2="972" stroke="#e3e3e3"/>
<line x1="1697.5" x2="1697.5" y1="876" y2="972" stroke="#e3e3e3"/>
<line x1="1799.4" x2="1799.4" y1="876" y2="972" stroke="#e3e3e3"/>
<path d="M1332 975 C1350 945 1372 916 1392.4 915.4 C1405 916 1414 940 1423 975" fill="none" stroke="#5cb3f0" stroke-width="1.15"/>
<path d="M1560 975 C1570 935 1580 900 1595.5 899 C1612 900 1630 940 1646 975" fill="none" stroke="#5cb3f0" stroke-width="1.15"/>
<path d="M1783 975 L1799.4 950.6" fill="none" stroke="#5cb3f0" stroke-width="1.15"/>
<path d="M1392.4 910.4l5 5 -5 5 -5 -5z" fill="#f9f9f9" stroke="#5cb3f0" stroke-width="1.05" opacity="1"/>
<path d="M1799.4 945.6l5 5 -5 5 -5 -5z" fill="#f9f9f9" stroke="#5cb3f0" stroke-width="1.05" opacity="1"/>
<rect x="1374" y="876" width="471" height="27" fill="#f9f9f9" opacity="0.75"/>
<path d="M1595.5 894.0l5 5 -5 5 -5 -5z" fill="#f9f9f9" stroke="#bfe0f8" stroke-width="1.05" opacity="1"/>
<line x1="1379.0" x2="1409.0" y1="889.5" y2="889.5" stroke="#5cb3f0" stroke-width="1.15"/>
<path d="M1394.0 884.5l5 5 -5 5 -5 -5z" fill="#f9f9f9" stroke="#5cb3f0" stroke-width="1.05" opacity="1"/>
<text x="1414.0" y="894" font-family="Liberation Sans" font-size="12.5" fill="#555">Gas Produced (mcf)</text>
<line x1="1535.8" x2="1565.8" y1="889.5" y2="889.5" stroke="#7fcdb0" stroke-width="1.15"/>
<path d="M1550.8 884.5l5 5 -5 5 -5 -5z" fill="#f9f9f9" stroke="#7fcdb0" stroke-width="1.05" opacity="1"/>
<text x="1570.6" y="894" font-family="Liberation Sans" font-size="12.5" fill="#555">Oil Produced (bbl)</text>
<line x1="1683.2" x2="1713.2" y1="889.5" y2="889.5" stroke="#f4a582" stroke-width="1.15"/>
<path d="M1698.2 884.5l5 5 -5 5 -5 -5z" fill="#f9f9f9" stroke="#f4a582" stroke-width="1.05" opacity="1"/>
<text x="1718.4" y="894" font-family="Liberation Sans" font-size="12.5" fill="#555">Water Produced (bbl)</text>
</svg>
</body></html>
